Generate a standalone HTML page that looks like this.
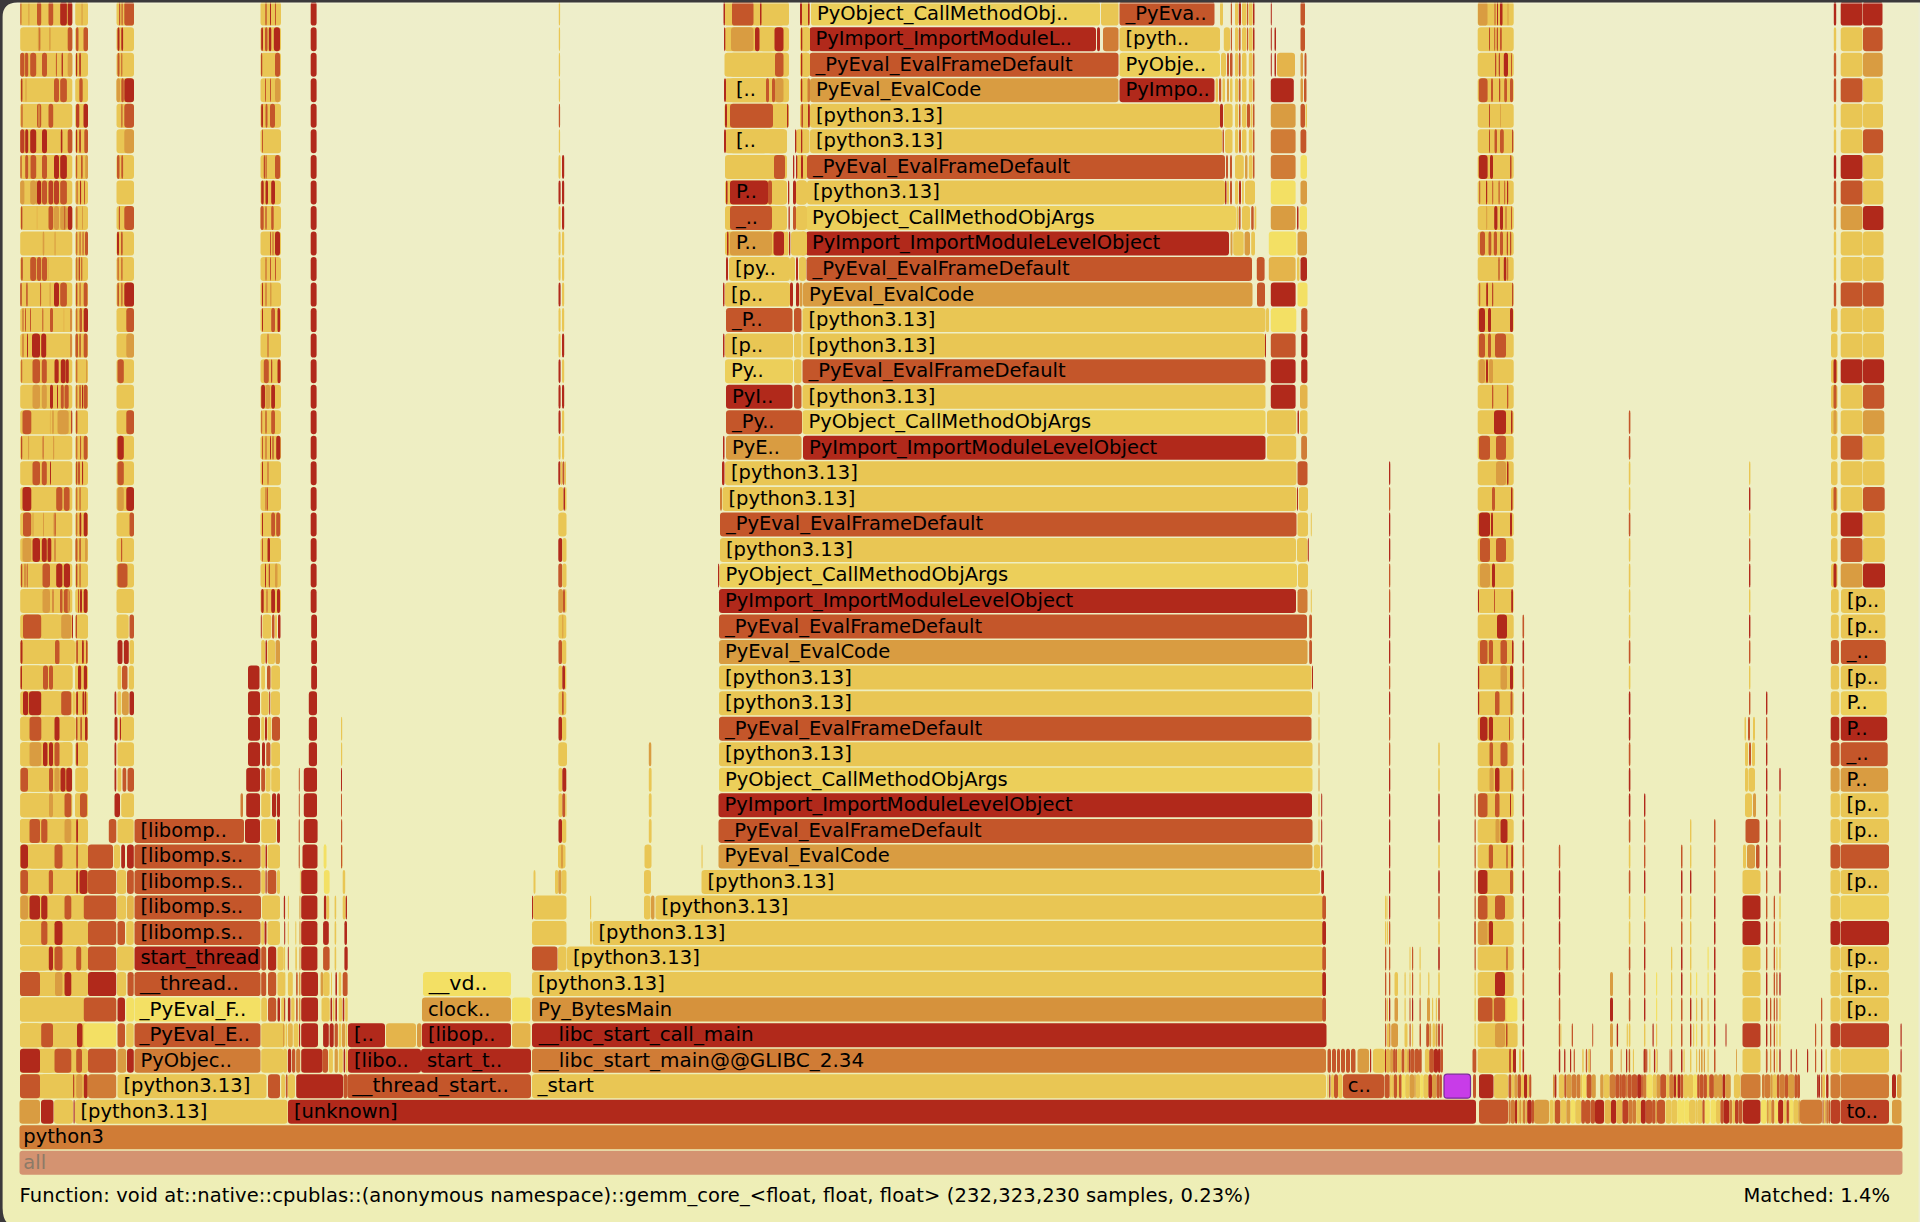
<!DOCTYPE html>
<html><head><meta charset="utf-8"><title>Flame Graph</title>
<style>
html,body{margin:0;padding:0;background:#3b393b;overflow:hidden}
svg{display:block}
text{font-family:"DejaVu Sans","Liberation Sans",sans-serif;font-size:19.5px;fill:#000}
</style></head><body>
<svg width="1920" height="1222" viewBox="0 0 1920 1222">
<defs><linearGradient id="bg" x1="0" y1="0" x2="0" y2="1"><stop offset="0" stop-color="#eeeeca"/><stop offset="1" stop-color="#eeeeb6"/></linearGradient></defs>
<rect x="0" y="0" width="1920" height="1222" fill="url(#bg)"/>

<g fill="rgb(212,147,113)">
<rect x="19.5" y="1150.8" width="1883.0" height="24.0" rx="3.2" ry="3.2"/>
</g>
<g fill="rgb(208,124,54)">
<rect x="19.5" y="1125.3" width="1883.0" height="24.0" rx="3.2" ry="3.2"/>
</g>
<g fill="rgb(177,41,27)">
<rect x="288.0" y="1099.8" width="1188.0" height="24.0" rx="3.2" ry="3.2"/>
</g>
<g fill="rgb(196,86,42)">
<rect x="343.5" y="1074.2" width="3.7" height="24.0" rx="1.8" ry="3.2"/>
<rect x="347.3" y="1074.2" width="183.7" height="24.0" rx="3.2" ry="3.2"/>
</g>
<g fill="rgb(233,198,84)">
<rect x="532.0" y="1074.2" width="794.0" height="24.0" rx="3.2" ry="3.2"/>
</g>
<g fill="rgb(196,86,42)">
<rect x="1343.0" y="1074.2" width="41.0" height="24.0" rx="3.2" ry="3.2"/>
</g>
<g fill="rgb(177,41,27)">
<rect x="348.0" y="1048.7" width="73.0" height="24.0" rx="3.2" ry="3.2"/>
<rect x="421.0" y="1048.7" width="110.0" height="24.0" rx="3.2" ry="3.2"/>
</g>
<g fill="rgb(208,124,54)">
<rect x="532.0" y="1048.7" width="794.0" height="24.0" rx="3.2" ry="3.2"/>
</g>
<g fill="rgb(177,41,27)">
<rect x="348.0" y="1023.2" width="37.0" height="24.0" rx="3.2" ry="3.2"/>
</g>
<g fill="rgb(228,180,75)">
<rect x="386.0" y="1023.2" width="30.0" height="24.0" rx="3.2" ry="3.2"/>
</g>
<g fill="rgb(217,156,65)">
<rect x="417.0" y="1023.2" width="4.5" height="24.0" rx="2.2" ry="3.2"/>
</g>
<g fill="rgb(177,41,27)">
<rect x="422.0" y="1023.2" width="89.0" height="24.0" rx="3.2" ry="3.2"/>
</g>
<g fill="rgb(228,180,75)">
<rect x="512.0" y="1023.2" width="18.5" height="24.0" rx="3.2" ry="3.2"/>
</g>
<g fill="rgb(177,41,27)">
<rect x="532.0" y="1023.2" width="794.5" height="24.0" rx="3.2" ry="3.2"/>
</g>
<g fill="rgb(217,156,65)">
<rect x="422.0" y="997.6" width="89.0" height="24.0" rx="3.2" ry="3.2"/>
</g>
<g fill="rgb(243,224,100)">
<rect x="512.0" y="997.6" width="18.5" height="24.0" rx="3.2" ry="3.2"/>
</g>
<g fill="rgb(214,146,60)">
<rect x="532.0" y="997.6" width="791.0" height="24.0" rx="3.2" ry="3.2"/>
</g>
<g fill="rgb(243,224,100)">
<rect x="423.0" y="972.1" width="88.0" height="24.0" rx="3.2" ry="3.2"/>
</g>
<g fill="rgb(233,198,84)">
<rect x="532.0" y="972.1" width="791.0" height="24.0" rx="3.2" ry="3.2"/>
</g>
<g fill="rgb(196,86,42)">
<rect x="532.0" y="946.5" width="25.5" height="24.0" rx="3.2" ry="3.2"/>
</g>
<g fill="rgb(233,198,84)">
<rect x="558.0" y="946.5" width="8.5" height="24.0" rx="3.2" ry="3.2"/>
<rect x="567.0" y="946.5" width="756.0" height="24.0" rx="3.2" ry="3.2"/>
<rect x="532.0" y="921.0" width="34.5" height="24.0" rx="3.2" ry="3.2"/>
<rect x="590.0" y="921.0" width="2.0" height="24.0" rx="1.0" ry="3.2"/>
<rect x="592.5" y="921.0" width="730.5" height="24.0" rx="3.2" ry="3.2"/>
</g>
<g fill="rgb(177,41,27)">
<rect x="532.0" y="895.5" width="1.2" height="24.0" rx="0.6" ry="3.2"/>
</g>
<g fill="rgb(233,198,84)">
<rect x="533.2" y="895.5" width="33.3" height="24.0" rx="3.2" ry="3.2"/>
<rect x="590.0" y="895.5" width="1.2" height="24.0" rx="0.6" ry="3.2"/>
<rect x="644.0" y="895.5" width="6.5" height="24.0" rx="3.2" ry="3.2"/>
</g>
<g fill="rgb(217,156,65)">
<rect x="651.0" y="895.5" width="3.5" height="24.0" rx="1.8" ry="3.2"/>
</g>
<g fill="rgb(233,198,84)">
<rect x="655.5" y="895.5" width="667.5" height="24.0" rx="3.2" ry="3.2"/>
<rect x="533.5" y="869.9" width="2.0" height="24.0" rx="1.0" ry="3.2"/>
<rect x="555.0" y="869.9" width="3.3" height="24.0" rx="1.6" ry="3.2"/>
</g>
<g fill="rgb(217,156,65)">
<rect x="558.3" y="869.9" width="3.2" height="24.0" rx="1.6" ry="3.2"/>
</g>
<g fill="rgb(233,198,84)">
<rect x="561.5" y="869.9" width="5.0" height="24.0" rx="2.5" ry="3.2"/>
<rect x="644.0" y="869.9" width="7.0" height="24.0" rx="3.2" ry="3.2"/>
<rect x="701.5" y="869.9" width="618.5" height="24.0" rx="3.2" ry="3.2"/>
</g>
<g fill="rgb(217,156,65)">
<rect x="718.5" y="844.4" width="594.0" height="24.0" rx="3.2" ry="3.2"/>
</g>
<g fill="rgb(196,86,42)">
<rect x="718.5" y="818.9" width="594.0" height="24.0" rx="3.2" ry="3.2"/>
</g>
<g fill="rgb(177,41,27)">
<rect x="718.5" y="793.3" width="593.5" height="24.0" rx="3.2" ry="3.2"/>
</g>
<g fill="rgb(236,207,90)">
<rect x="719.0" y="767.8" width="593.5" height="24.0" rx="3.2" ry="3.2"/>
</g>
<g fill="rgb(233,198,84)">
<rect x="719.0" y="742.2" width="593.5" height="24.0" rx="3.2" ry="3.2"/>
</g>
<g fill="rgb(196,86,42)">
<rect x="719.0" y="716.7" width="592.5" height="24.0" rx="3.2" ry="3.2"/>
</g>
<g fill="rgb(233,198,84)">
<rect x="719.0" y="691.2" width="593.0" height="24.0" rx="3.2" ry="3.2"/>
<rect x="719.0" y="665.6" width="592.5" height="24.0" rx="3.2" ry="3.2"/>
</g>
<g fill="rgb(217,156,65)">
<rect x="719.0" y="640.1" width="588.5" height="24.0" rx="3.2" ry="3.2"/>
</g>
<g fill="rgb(196,86,42)">
<rect x="719.0" y="614.6" width="588.0" height="24.0" rx="3.2" ry="3.2"/>
</g>
<g fill="rgb(177,41,27)">
<rect x="719.0" y="589.0" width="577.0" height="24.0" rx="3.2" ry="3.2"/>
</g>
<g fill="rgb(236,207,90)">
<rect x="719.5" y="563.5" width="577.5" height="24.0" rx="3.2" ry="3.2"/>
</g>
<g fill="rgb(233,198,84)">
<rect x="720.0" y="537.9" width="576.0" height="24.0" rx="3.2" ry="3.2"/>
</g>
<g fill="rgb(196,86,42)">
<rect x="720.0" y="512.4" width="576.5" height="24.0" rx="3.2" ry="3.2"/>
</g>
<g fill="rgb(233,198,84)">
<rect x="722.5" y="486.9" width="574.0" height="24.0" rx="3.2" ry="3.2"/>
<rect x="725.0" y="461.3" width="571.5" height="24.0" rx="3.2" ry="3.2"/>
</g>
<g fill="rgb(177,41,27)">
<rect x="803.0" y="435.8" width="462.5" height="24.0" rx="3.2" ry="3.2"/>
</g>
<g fill="rgb(236,207,90)">
<rect x="802.5" y="410.2" width="463.0" height="24.0" rx="3.2" ry="3.2"/>
</g>
<g fill="rgb(233,198,84)">
<rect x="802.5" y="384.7" width="463.0" height="24.0" rx="3.2" ry="3.2"/>
</g>
<g fill="rgb(196,86,42)">
<rect x="802.5" y="359.2" width="463.0" height="24.0" rx="3.2" ry="3.2"/>
</g>
<g fill="rgb(233,198,84)">
<rect x="802.5" y="333.6" width="462.5" height="24.0" rx="3.2" ry="3.2"/>
<rect x="802.5" y="308.1" width="463.0" height="24.0" rx="3.2" ry="3.2"/>
</g>
<g fill="rgb(217,156,65)">
<rect x="803.0" y="282.6" width="449.5" height="24.0" rx="3.2" ry="3.2"/>
</g>
<g fill="rgb(196,86,42)">
<rect x="806.5" y="257.0" width="445.5" height="24.0" rx="3.2" ry="3.2"/>
</g>
<g fill="rgb(177,41,27)">
<rect x="806.0" y="231.5" width="423.0" height="24.0" rx="3.2" ry="3.2"/>
</g>
<g fill="rgb(236,207,90)">
<rect x="806.0" y="205.9" width="430.0" height="24.0" rx="3.2" ry="3.2"/>
</g>
<g fill="rgb(233,198,84)">
<rect x="807.0" y="180.4" width="418.0" height="24.0" rx="3.2" ry="3.2"/>
</g>
<g fill="rgb(196,86,42)">
<rect x="807.0" y="154.9" width="418.0" height="24.0" rx="3.2" ry="3.2"/>
</g>
<g fill="rgb(233,198,84)">
<rect x="810.0" y="129.3" width="412.0" height="24.0" rx="3.2" ry="3.2"/>
<rect x="810.0" y="103.8" width="410.0" height="24.0" rx="3.2" ry="3.2"/>
</g>
<g fill="rgb(217,156,65)">
<rect x="810.0" y="78.3" width="308.5" height="24.0" rx="3.2" ry="3.2"/>
</g>
<g fill="rgb(196,86,42)">
<rect x="809.5" y="52.7" width="309.0" height="24.0" rx="3.2" ry="3.2"/>
</g>
<g fill="rgb(177,41,27)">
<rect x="809.5" y="27.2" width="286.5" height="24.0" rx="3.2" ry="3.2"/>
</g>
<g fill="rgb(236,207,90)">
<rect x="811.0" y="1.6" width="289.0" height="24.0" rx="3.2" ry="3.2"/>
</g>
<g fill="rgb(233,198,84)">
<rect x="1101.0" y="1.6" width="17.5" height="24.0" rx="3.2" ry="3.2"/>
</g>
<g fill="rgb(196,86,42)">
<rect x="1119.5" y="1.6" width="95.0" height="24.0" rx="3.2" ry="3.2"/>
</g>
<g fill="rgb(177,41,27)">
<rect x="1097.0" y="27.2" width="3.0" height="24.0" rx="1.5" ry="3.2"/>
</g>
<g fill="rgb(208,124,54)">
<rect x="1103.0" y="27.2" width="15.5" height="24.0" rx="3.2" ry="3.2"/>
</g>
<g fill="rgb(233,198,84)">
<rect x="1119.5" y="27.2" width="100.5" height="24.0" rx="3.2" ry="3.2"/>
</g>
<g fill="rgb(236,207,90)">
<rect x="1119.5" y="52.7" width="100.5" height="24.0" rx="3.2" ry="3.2"/>
</g>
<g fill="rgb(177,41,27)">
<rect x="1119.5" y="78.3" width="95.0" height="24.0" rx="3.2" ry="3.2"/>
</g>
<g fill="rgb(233,198,84)">
<rect x="724.5" y="103.8" width="64.5" height="24.0" rx="3.2" ry="3.2"/>
<rect x="800.0" y="103.8" width="10.0" height="24.0" rx="3.2" ry="3.2"/>
<rect x="724.5" y="78.3" width="64.5" height="24.0" rx="3.2" ry="3.2"/>
<rect x="800.0" y="78.3" width="10.0" height="24.0" rx="3.2" ry="3.2"/>
<rect x="724.5" y="52.7" width="64.5" height="24.0" rx="3.2" ry="3.2"/>
<rect x="800.0" y="52.7" width="10.0" height="24.0" rx="3.2" ry="3.2"/>
<rect x="724.5" y="27.2" width="64.5" height="24.0" rx="3.2" ry="3.2"/>
<rect x="800.0" y="27.2" width="10.0" height="24.0" rx="3.2" ry="3.2"/>
<rect x="724.5" y="1.6" width="64.5" height="24.0" rx="3.2" ry="3.2"/>
<rect x="800.0" y="1.6" width="10.0" height="24.0" rx="3.2" ry="3.2"/>
<rect x="725.0" y="231.5" width="62.0" height="24.0" rx="3.2" ry="3.2"/>
<rect x="796.0" y="231.5" width="11.0" height="24.0" rx="3.2" ry="3.2"/>
<rect x="725.0" y="205.9" width="62.0" height="24.0" rx="3.2" ry="3.2"/>
<rect x="796.0" y="205.9" width="11.0" height="24.0" rx="3.2" ry="3.2"/>
<rect x="725.0" y="180.4" width="62.0" height="24.0" rx="3.2" ry="3.2"/>
<rect x="796.0" y="180.4" width="11.0" height="24.0" rx="3.2" ry="3.2"/>
<rect x="725.0" y="154.9" width="62.0" height="24.0" rx="3.2" ry="3.2"/>
<rect x="796.0" y="154.9" width="11.0" height="24.0" rx="3.2" ry="3.2"/>
<rect x="725.0" y="129.3" width="62.0" height="24.0" rx="3.2" ry="3.2"/>
<rect x="796.0" y="129.3" width="11.0" height="24.0" rx="3.2" ry="3.2"/>
</g>
<g fill="rgb(177,41,27)">
<rect x="723.0" y="282.6" width="1.5" height="24.0" rx="0.8" ry="3.2"/>
</g>
<g fill="rgb(233,198,84)">
<rect x="725.0" y="282.6" width="65.0" height="24.0" rx="3.2" ry="3.2"/>
</g>
<g fill="rgb(177,41,27)">
<rect x="790.0" y="282.6" width="3.0" height="24.0" rx="1.5" ry="3.2"/>
<rect x="796.0" y="282.6" width="3.0" height="24.0" rx="1.5" ry="3.2"/>
</g>
<g fill="rgb(217,156,65)">
<rect x="799.5" y="282.6" width="3.0" height="24.0" rx="1.5" ry="3.2"/>
</g>
<g fill="rgb(196,86,42)">
<rect x="726.0" y="308.1" width="66.5" height="24.0" rx="3.2" ry="3.2"/>
<rect x="794.0" y="308.1" width="7.5" height="24.0" rx="3.2" ry="3.2"/>
</g>
<g fill="rgb(177,41,27)">
<rect x="723.0" y="333.6" width="1.5" height="24.0" rx="0.8" ry="3.2"/>
</g>
<g fill="rgb(233,198,84)">
<rect x="725.0" y="333.6" width="68.0" height="24.0" rx="3.2" ry="3.2"/>
<rect x="794.0" y="333.6" width="7.5" height="24.0" rx="3.2" ry="3.2"/>
</g>
<g fill="rgb(236,207,90)">
<rect x="725.0" y="359.2" width="68.0" height="24.0" rx="3.2" ry="3.2"/>
</g>
<g fill="rgb(233,198,84)">
<rect x="794.0" y="359.2" width="7.5" height="24.0" rx="3.2" ry="3.2"/>
</g>
<g fill="rgb(177,41,27)">
<rect x="726.0" y="384.7" width="66.5" height="24.0" rx="3.2" ry="3.2"/>
</g>
<g fill="rgb(196,86,42)">
<rect x="794.0" y="384.7" width="7.5" height="24.0" rx="3.2" ry="3.2"/>
<rect x="726.0" y="410.2" width="76.0" height="24.0" rx="3.2" ry="3.2"/>
</g>
<g fill="rgb(177,41,27)">
<rect x="723.0" y="435.8" width="1.5" height="24.0" rx="0.8" ry="3.2"/>
</g>
<g fill="rgb(217,156,65)">
<rect x="726.0" y="435.8" width="75.5" height="24.0" rx="3.2" ry="3.2"/>
</g>
<g fill="rgb(177,41,27)">
<rect x="722.0" y="461.3" width="2.5" height="24.0" rx="1.2" ry="3.2"/>
</g>
<g fill="rgb(208,124,54)">
<rect x="720.0" y="486.9" width="2.0" height="24.0" rx="1.0" ry="3.2"/>
</g>
<g fill="rgb(177,41,27)">
<rect x="718.0" y="563.5" width="1.2" height="24.0" rx="0.6" ry="3.2"/>
<rect x="726.0" y="257.0" width="2.0" height="24.0" rx="1.0" ry="3.2"/>
</g>
<g fill="rgb(233,198,84)">
<rect x="729.0" y="257.0" width="61.0" height="24.0" rx="3.2" ry="3.2"/>
<rect x="790.0" y="257.0" width="5.0" height="24.0" rx="2.5" ry="3.2"/>
</g>
<g fill="rgb(177,41,27)">
<rect x="796.0" y="257.0" width="2.0" height="24.0" rx="1.0" ry="3.2"/>
</g>
<g fill="rgb(233,198,84)">
<rect x="799.0" y="257.0" width="7.0" height="24.0" rx="3.2" ry="3.2"/>
</g>
<g fill="rgb(177,41,27)">
<rect x="727.0" y="231.5" width="1.5" height="24.0" rx="0.8" ry="3.2"/>
</g>
<g fill="rgb(217,156,65)">
<rect x="730.0" y="231.5" width="42.0" height="24.0" rx="3.2" ry="3.2"/>
</g>
<g fill="rgb(177,41,27)">
<rect x="773.5" y="231.5" width="10.5" height="24.0" rx="3.2" ry="3.2"/>
</g>
<g fill="rgb(233,198,84)">
<rect x="785.0" y="231.5" width="3.5" height="24.0" rx="1.8" ry="3.2"/>
</g>
<g fill="rgb(177,41,27)">
<rect x="789.0" y="231.5" width="1.3" height="24.0" rx="0.6" ry="3.2"/>
</g>
<g fill="rgb(233,198,84)">
<rect x="791.0" y="231.5" width="9.0" height="24.0" rx="3.2" ry="3.2"/>
<rect x="801.0" y="231.5" width="4.5" height="24.0" rx="2.2" ry="3.2"/>
</g>
<g fill="rgb(196,86,42)">
<rect x="730.0" y="205.9" width="42.0" height="24.0" rx="3.2" ry="3.2"/>
</g>
<g fill="rgb(233,198,84)">
<rect x="773.0" y="205.9" width="13.0" height="24.0" rx="3.2" ry="3.2"/>
</g>
<g fill="rgb(177,41,27)">
<rect x="788.5" y="205.9" width="1.3" height="24.0" rx="0.6" ry="3.2"/>
</g>
<g fill="rgb(196,86,42)">
<rect x="793.0" y="205.9" width="3.0" height="24.0" rx="1.5" ry="3.2"/>
</g>
<g fill="rgb(233,198,84)">
<rect x="797.0" y="205.9" width="8.5" height="24.0" rx="3.2" ry="3.2"/>
</g>
<g fill="rgb(177,41,27)">
<rect x="726.0" y="180.4" width="1.5" height="24.0" rx="0.8" ry="3.2"/>
<rect x="730.0" y="180.4" width="38.0" height="24.0" rx="3.2" ry="3.2"/>
</g>
<g fill="rgb(196,86,42)">
<rect x="768.0" y="180.4" width="4.0" height="24.0" rx="2.0" ry="3.2"/>
</g>
<g fill="rgb(233,198,84)">
<rect x="773.0" y="180.4" width="12.5" height="24.0" rx="3.2" ry="3.2"/>
</g>
<g fill="rgb(177,41,27)">
<rect x="788.0" y="180.4" width="1.3" height="24.0" rx="0.6" ry="3.2"/>
<rect x="793.0" y="180.4" width="3.0" height="24.0" rx="1.5" ry="3.2"/>
</g>
<g fill="rgb(233,198,84)">
<rect x="797.0" y="180.4" width="9.5" height="24.0" rx="3.2" ry="3.2"/>
<rect x="730.0" y="154.9" width="43.5" height="24.0" rx="3.2" ry="3.2"/>
</g>
<g fill="rgb(196,86,42)">
<rect x="774.0" y="154.9" width="11.0" height="24.0" rx="3.2" ry="3.2"/>
</g>
<g fill="rgb(177,41,27)">
<rect x="793.0" y="154.9" width="1.3" height="24.0" rx="0.6" ry="3.2"/>
<rect x="796.0" y="154.9" width="1.3" height="24.0" rx="0.6" ry="3.2"/>
<rect x="801.0" y="154.9" width="2.0" height="24.0" rx="1.0" ry="3.2"/>
</g>
<g fill="rgb(233,198,84)">
<rect x="803.5" y="154.9" width="3.0" height="24.0" rx="1.5" ry="3.2"/>
</g>
<g fill="rgb(177,41,27)">
<rect x="724.0" y="129.3" width="2.0" height="24.0" rx="1.0" ry="3.2"/>
</g>
<g fill="rgb(233,198,84)">
<rect x="730.0" y="129.3" width="37.0" height="24.0" rx="3.2" ry="3.2"/>
<rect x="767.5" y="129.3" width="18.0" height="24.0" rx="3.2" ry="3.2"/>
</g>
<g fill="rgb(177,41,27)">
<rect x="795.0" y="129.3" width="1.3" height="24.0" rx="0.6" ry="3.2"/>
<rect x="801.0" y="129.3" width="1.3" height="24.0" rx="0.6" ry="3.2"/>
</g>
<g fill="rgb(233,198,84)">
<rect x="803.0" y="129.3" width="6.5" height="24.0" rx="3.2" ry="3.2"/>
</g>
<g fill="rgb(177,41,27)">
<rect x="725.0" y="103.8" width="2.0" height="24.0" rx="1.0" ry="3.2"/>
</g>
<g fill="rgb(196,86,42)">
<rect x="730.0" y="103.8" width="43.0" height="24.0" rx="3.2" ry="3.2"/>
</g>
<g fill="rgb(233,198,84)">
<rect x="774.0" y="103.8" width="12.0" height="24.0" rx="3.2" ry="3.2"/>
</g>
<g fill="rgb(177,41,27)">
<rect x="787.0" y="103.8" width="1.3" height="24.0" rx="0.6" ry="3.2"/>
<rect x="801.5" y="103.8" width="1.3" height="24.0" rx="0.6" ry="3.2"/>
</g>
<g fill="rgb(233,198,84)">
<rect x="803.0" y="103.8" width="5.0" height="24.0" rx="2.5" ry="3.2"/>
</g>
<g fill="rgb(177,41,27)">
<rect x="808.0" y="103.8" width="1.8" height="24.0" rx="0.9" ry="3.2"/>
<rect x="724.0" y="78.3" width="2.0" height="24.0" rx="1.0" ry="3.2"/>
</g>
<g fill="rgb(233,198,84)">
<rect x="730.0" y="78.3" width="36.0" height="24.0" rx="3.2" ry="3.2"/>
</g>
<g fill="rgb(196,86,42)">
<rect x="766.0" y="78.3" width="3.0" height="24.0" rx="1.5" ry="3.2"/>
</g>
<g fill="rgb(233,198,84)">
<rect x="769.0" y="78.3" width="3.0" height="24.0" rx="1.5" ry="3.2"/>
</g>
<g fill="rgb(196,86,42)">
<rect x="772.0" y="78.3" width="3.0" height="24.0" rx="1.5" ry="3.2"/>
</g>
<g fill="rgb(217,156,65)">
<rect x="775.0" y="78.3" width="8.5" height="24.0" rx="3.2" ry="3.2"/>
</g>
<g fill="rgb(177,41,27)">
<rect x="801.0" y="78.3" width="1.3" height="24.0" rx="0.6" ry="3.2"/>
</g>
<g fill="rgb(233,198,84)">
<rect x="803.0" y="78.3" width="3.5" height="24.0" rx="1.8" ry="3.2"/>
</g>
<g fill="rgb(208,124,54)">
<rect x="807.5" y="78.3" width="2.5" height="24.0" rx="1.2" ry="3.2"/>
</g>
<g fill="rgb(233,198,84)">
<rect x="730.0" y="52.7" width="44.5" height="24.0" rx="3.2" ry="3.2"/>
</g>
<g fill="rgb(196,86,42)">
<rect x="775.0" y="52.7" width="8.5" height="24.0" rx="3.2" ry="3.2"/>
</g>
<g fill="rgb(177,41,27)">
<rect x="801.0" y="52.7" width="1.3" height="24.0" rx="0.6" ry="3.2"/>
</g>
<g fill="rgb(233,198,84)">
<rect x="803.0" y="52.7" width="6.0" height="24.0" rx="3.0" ry="3.2"/>
</g>
<g fill="rgb(177,41,27)">
<rect x="724.0" y="27.2" width="1.3" height="24.0" rx="0.6" ry="3.2"/>
</g>
<g fill="rgb(217,156,65)">
<rect x="731.0" y="27.2" width="22.5" height="24.0" rx="3.2" ry="3.2"/>
</g>
<g fill="rgb(177,41,27)">
<rect x="755.0" y="27.2" width="4.5" height="24.0" rx="2.2" ry="3.2"/>
</g>
<g fill="rgb(233,198,84)">
<rect x="760.0" y="27.2" width="14.0" height="24.0" rx="3.2" ry="3.2"/>
</g>
<g fill="rgb(177,41,27)">
<rect x="774.5" y="27.2" width="9.0" height="24.0" rx="3.2" ry="3.2"/>
<rect x="801.0" y="27.2" width="1.3" height="24.0" rx="0.6" ry="3.2"/>
</g>
<g fill="rgb(233,198,84)">
<rect x="803.0" y="27.2" width="6.0" height="24.0" rx="3.0" ry="3.2"/>
</g>
<g fill="rgb(177,41,27)">
<rect x="723.5" y="1.6" width="1.5" height="24.0" rx="0.8" ry="3.2"/>
</g>
<g fill="rgb(196,86,42)">
<rect x="732.0" y="1.6" width="21.5" height="24.0" rx="3.2" ry="3.2"/>
</g>
<g fill="rgb(233,198,84)">
<rect x="755.0" y="1.6" width="5.0" height="24.0" rx="2.5" ry="3.2"/>
</g>
<g fill="rgb(177,41,27)">
<rect x="760.0" y="1.6" width="1.5" height="24.0" rx="0.8" ry="3.2"/>
</g>
<g fill="rgb(233,198,84)">
<rect x="762.0" y="1.6" width="21.5" height="24.0" rx="3.2" ry="3.2"/>
</g>
<g fill="rgb(177,41,27)">
<rect x="800.0" y="1.6" width="2.0" height="24.0" rx="1.0" ry="3.2"/>
</g>
<g fill="rgb(233,198,84)">
<rect x="803.0" y="1.6" width="4.5" height="24.0" rx="2.2" ry="3.2"/>
</g>
<g fill="rgb(177,41,27)">
<rect x="808.0" y="1.6" width="1.5" height="24.0" rx="0.8" ry="3.2"/>
</g>
<g fill="rgb(233,198,84)">
<rect x="20.2" y="793.3" width="52.1" height="24.0" rx="3.2" ry="3.2"/>
<rect x="75.2" y="793.3" width="12.8" height="24.0" rx="3.2" ry="3.2"/>
<rect x="20.2" y="767.8" width="52.1" height="24.0" rx="3.2" ry="3.2"/>
<rect x="75.2" y="767.8" width="12.8" height="24.0" rx="3.2" ry="3.2"/>
<rect x="20.2" y="742.2" width="52.1" height="24.0" rx="3.2" ry="3.2"/>
<rect x="75.2" y="742.2" width="12.8" height="24.0" rx="3.2" ry="3.2"/>
<rect x="20.2" y="716.7" width="52.1" height="24.0" rx="3.2" ry="3.2"/>
<rect x="75.2" y="716.7" width="12.8" height="24.0" rx="3.2" ry="3.2"/>
<rect x="20.2" y="691.2" width="52.1" height="24.0" rx="3.2" ry="3.2"/>
<rect x="75.2" y="691.2" width="12.8" height="24.0" rx="3.2" ry="3.2"/>
<rect x="20.2" y="665.6" width="52.1" height="24.0" rx="3.2" ry="3.2"/>
<rect x="75.2" y="665.6" width="12.8" height="24.0" rx="3.2" ry="3.2"/>
<rect x="20.2" y="640.1" width="52.1" height="24.0" rx="3.2" ry="3.2"/>
<rect x="75.2" y="640.1" width="12.8" height="24.0" rx="3.2" ry="3.2"/>
<rect x="20.2" y="614.6" width="52.1" height="24.0" rx="3.2" ry="3.2"/>
<rect x="75.2" y="614.6" width="12.8" height="24.0" rx="3.2" ry="3.2"/>
<rect x="20.0" y="1074.2" width="68.0" height="24.0" rx="3.2" ry="3.2"/>
<rect x="20.0" y="1048.7" width="68.0" height="24.0" rx="3.2" ry="3.2"/>
<rect x="20.0" y="1023.2" width="68.0" height="24.0" rx="3.2" ry="3.2"/>
<rect x="20.0" y="997.6" width="68.0" height="24.0" rx="3.2" ry="3.2"/>
<rect x="20.0" y="972.1" width="68.0" height="24.0" rx="3.2" ry="3.2"/>
<rect x="20.0" y="946.5" width="68.0" height="24.0" rx="3.2" ry="3.2"/>
<rect x="20.0" y="921.0" width="68.0" height="24.0" rx="3.2" ry="3.2"/>
<rect x="20.0" y="895.5" width="68.0" height="24.0" rx="3.2" ry="3.2"/>
<rect x="20.0" y="869.9" width="68.0" height="24.0" rx="3.2" ry="3.2"/>
<rect x="20.0" y="844.4" width="68.0" height="24.0" rx="3.2" ry="3.2"/>
<rect x="20.0" y="818.9" width="68.0" height="24.0" rx="3.2" ry="3.2"/>
</g>
<g fill="rgb(217,156,65)">
<rect x="19.5" y="1099.8" width="20.5" height="24.0" rx="3.2" ry="3.2"/>
</g>
<g fill="rgb(177,41,27)">
<rect x="41.0" y="1099.8" width="12.5" height="24.0" rx="3.2" ry="3.2"/>
</g>
<g fill="rgb(233,198,84)">
<rect x="54.0" y="1099.8" width="19.0" height="24.0" rx="3.2" ry="3.2"/>
</g>
<g fill="rgb(177,41,27)">
<rect x="73.5" y="1099.8" width="1.2" height="24.0" rx="0.6" ry="3.2"/>
</g>
<g fill="rgb(233,198,84)">
<rect x="75.0" y="1099.8" width="212.5" height="24.0" rx="3.2" ry="3.2"/>
</g>
<g fill="rgb(196,86,42)">
<rect x="20.0" y="1074.2" width="20.0" height="24.0" rx="3.2" ry="3.2"/>
</g>
<g fill="rgb(233,198,84)">
<rect x="41.2" y="1074.2" width="31.2" height="24.0" rx="3.2" ry="3.2"/>
</g>
<g fill="rgb(177,41,27)">
<rect x="73.2" y="1074.2" width="1.0" height="24.0" rx="0.5" ry="3.2"/>
</g>
<g fill="rgb(217,156,65)">
<rect x="76.2" y="1074.2" width="6.2" height="24.0" rx="3.1" ry="3.2"/>
</g>
<g fill="rgb(177,41,27)">
<rect x="83.8" y="1074.2" width="3.8" height="24.0" rx="1.9" ry="3.2"/>
</g>
<g fill="rgb(208,124,54)">
<rect x="88.0" y="1074.2" width="28.2" height="24.0" rx="3.2" ry="3.2"/>
</g>
<g fill="rgb(196,86,42)">
<rect x="268.0" y="1074.2" width="12.0" height="24.0" rx="3.2" ry="3.2"/>
</g>
<g fill="rgb(233,198,84)">
<rect x="281.2" y="1074.2" width="3.8" height="24.0" rx="1.9" ry="3.2"/>
</g>
<g fill="rgb(196,86,42)">
<rect x="285.8" y="1074.2" width="1.8" height="24.0" rx="0.9" ry="3.2"/>
</g>
<g fill="rgb(233,198,84)">
<rect x="288.0" y="1074.2" width="7.0" height="24.0" rx="3.2" ry="3.2"/>
</g>
<g fill="rgb(177,41,27)">
<rect x="296.2" y="1074.2" width="46.8" height="24.0" rx="3.2" ry="3.2"/>
</g>
<g fill="rgb(233,198,84)">
<rect x="117.5" y="1074.2" width="149.0" height="24.0" rx="3.2" ry="3.2"/>
</g>
<g fill="rgb(177,41,27)">
<rect x="20.0" y="1048.7" width="20.0" height="24.0" rx="3.2" ry="3.2"/>
</g>
<g fill="rgb(233,198,84)">
<rect x="41.2" y="1048.7" width="11.8" height="24.0" rx="3.2" ry="3.2"/>
</g>
<g fill="rgb(196,86,42)">
<rect x="54.5" y="1048.7" width="16.8" height="24.0" rx="3.2" ry="3.2"/>
</g>
<g fill="rgb(233,198,84)">
<rect x="72.0" y="1048.7" width="3.0" height="24.0" rx="1.5" ry="3.2"/>
</g>
<g fill="rgb(196,86,42)">
<rect x="76.2" y="1048.7" width="5.8" height="24.0" rx="2.9" ry="3.2"/>
</g>
<g fill="rgb(233,198,84)">
<rect x="83.0" y="1048.7" width="4.5" height="24.0" rx="2.2" ry="3.2"/>
</g>
<g fill="rgb(196,86,42)">
<rect x="88.0" y="1048.7" width="28.2" height="24.0" rx="3.2" ry="3.2"/>
</g>
<g fill="rgb(217,156,65)">
<rect x="117.5" y="1048.7" width="8.8" height="24.0" rx="3.2" ry="3.2"/>
</g>
<g fill="rgb(177,41,27)">
<rect x="127.0" y="1048.7" width="6.8" height="24.0" rx="3.2" ry="3.2"/>
</g>
<g fill="rgb(233,198,84)">
<rect x="261.2" y="1048.7" width="22.5" height="24.0" rx="3.2" ry="3.2"/>
</g>
<g fill="rgb(177,41,27)">
<rect x="301.2" y="1048.7" width="21.2" height="24.0" rx="3.2" ry="3.2"/>
</g>
<g fill="rgb(208,124,54)">
<rect x="134.5" y="1048.7" width="126.0" height="24.0" rx="3.2" ry="3.2"/>
</g>
<g fill="rgb(233,198,84)">
<rect x="20.0" y="1023.2" width="20.0" height="24.0" rx="3.2" ry="3.2"/>
</g>
<g fill="rgb(196,86,42)">
<rect x="41.2" y="1023.2" width="11.8" height="24.0" rx="3.2" ry="3.2"/>
</g>
<g fill="rgb(233,198,84)">
<rect x="54.5" y="1023.2" width="20.5" height="24.0" rx="3.2" ry="3.2"/>
</g>
<g fill="rgb(177,41,27)">
<rect x="77.0" y="1023.2" width="5.5" height="24.0" rx="2.8" ry="3.2"/>
</g>
<g fill="rgb(243,224,100)">
<rect x="83.8" y="1023.2" width="32.5" height="24.0" rx="3.2" ry="3.2"/>
</g>
<g fill="rgb(196,86,42)">
<rect x="117.5" y="1023.2" width="7.5" height="24.0" rx="3.2" ry="3.2"/>
</g>
<g fill="rgb(233,198,84)">
<rect x="126.2" y="1023.2" width="7.5" height="24.0" rx="3.2" ry="3.2"/>
<rect x="261.2" y="1023.2" width="23.8" height="24.0" rx="3.2" ry="3.2"/>
</g>
<g fill="rgb(177,41,27)">
<rect x="301.2" y="1023.2" width="16.8" height="24.0" rx="3.2" ry="3.2"/>
</g>
<g fill="rgb(196,86,42)">
<rect x="134.5" y="1023.2" width="126.0" height="24.0" rx="3.2" ry="3.2"/>
</g>
<g fill="rgb(233,198,84)">
<rect x="20.0" y="997.6" width="62.5" height="24.0" rx="3.2" ry="3.2"/>
</g>
<g fill="rgb(196,86,42)">
<rect x="83.8" y="997.6" width="32.5" height="24.0" rx="3.2" ry="3.2"/>
</g>
<g fill="rgb(177,41,27)">
<rect x="117.5" y="997.6" width="7.5" height="24.0" rx="3.2" ry="3.2"/>
</g>
<g fill="rgb(243,224,100)">
<rect x="126.2" y="997.6" width="7.8" height="24.0" rx="3.2" ry="3.2"/>
</g>
<g fill="rgb(233,198,84)">
<rect x="261.2" y="997.6" width="5.8" height="24.0" rx="2.9" ry="3.2"/>
</g>
<g fill="rgb(196,86,42)">
<rect x="268.0" y="997.6" width="8.2" height="24.0" rx="3.2" ry="3.2"/>
</g>
<g fill="rgb(177,41,27)">
<rect x="277.5" y="997.6" width="2.5" height="24.0" rx="1.2" ry="3.2"/>
</g>
<g fill="rgb(233,198,84)">
<rect x="281.2" y="997.6" width="3.8" height="24.0" rx="1.9" ry="3.2"/>
</g>
<g fill="rgb(177,41,27)">
<rect x="301.2" y="997.6" width="16.8" height="24.0" rx="3.2" ry="3.2"/>
</g>
<g fill="rgb(243,224,100)">
<rect x="134.5" y="997.6" width="126.0" height="24.0" rx="3.2" ry="3.2"/>
</g>
<g fill="rgb(196,86,42)">
<rect x="20.0" y="972.1" width="20.0" height="24.0" rx="3.2" ry="3.2"/>
</g>
<g fill="rgb(233,198,84)">
<rect x="41.2" y="972.1" width="12.5" height="24.0" rx="3.2" ry="3.2"/>
</g>
<g fill="rgb(217,156,65)">
<rect x="55.0" y="972.1" width="7.5" height="24.0" rx="3.2" ry="3.2"/>
</g>
<g fill="rgb(177,41,27)">
<rect x="64.5" y="972.1" width="6.8" height="24.0" rx="3.2" ry="3.2"/>
</g>
<g fill="rgb(233,198,84)">
<rect x="72.5" y="972.1" width="13.8" height="24.0" rx="3.2" ry="3.2"/>
</g>
<g fill="rgb(177,41,27)">
<rect x="88.0" y="972.1" width="28.2" height="24.0" rx="3.2" ry="3.2"/>
</g>
<g fill="rgb(233,198,84)">
<rect x="117.0" y="972.1" width="9.2" height="24.0" rx="3.2" ry="3.2"/>
</g>
<g fill="rgb(196,86,42)">
<rect x="127.5" y="972.1" width="6.2" height="24.0" rx="3.1" ry="3.2"/>
<rect x="261.2" y="972.1" width="5.0" height="24.0" rx="2.5" ry="3.2"/>
<rect x="268.0" y="972.1" width="8.2" height="24.0" rx="3.2" ry="3.2"/>
</g>
<g fill="rgb(233,198,84)">
<rect x="277.5" y="972.1" width="7.5" height="24.0" rx="3.2" ry="3.2"/>
</g>
<g fill="rgb(177,41,27)">
<rect x="301.2" y="972.1" width="16.8" height="24.0" rx="3.2" ry="3.2"/>
</g>
<g fill="rgb(196,86,42)">
<rect x="134.5" y="972.1" width="126.0" height="24.0" rx="3.2" ry="3.2"/>
</g>
<g fill="rgb(233,198,84)">
<rect x="20.0" y="946.5" width="27.5" height="24.0" rx="3.2" ry="3.2"/>
</g>
<g fill="rgb(177,41,27)">
<rect x="48.8" y="946.5" width="4.2" height="24.0" rx="2.1" ry="3.2"/>
</g>
<g fill="rgb(196,86,42)">
<rect x="54.5" y="946.5" width="8.0" height="24.0" rx="3.2" ry="3.2"/>
</g>
<g fill="rgb(233,198,84)">
<rect x="63.8" y="946.5" width="11.2" height="24.0" rx="3.2" ry="3.2"/>
</g>
<g fill="rgb(196,86,42)">
<rect x="76.2" y="946.5" width="5.0" height="24.0" rx="2.5" ry="3.2"/>
</g>
<g fill="rgb(233,198,84)">
<rect x="82.5" y="946.5" width="5.0" height="24.0" rx="2.5" ry="3.2"/>
</g>
<g fill="rgb(196,86,42)">
<rect x="88.0" y="946.5" width="28.2" height="24.0" rx="3.2" ry="3.2"/>
</g>
<g fill="rgb(233,198,84)">
<rect x="117.0" y="946.5" width="16.8" height="24.0" rx="3.2" ry="3.2"/>
</g>
<g fill="rgb(196,86,42)">
<rect x="261.2" y="946.5" width="5.0" height="24.0" rx="2.5" ry="3.2"/>
</g>
<g fill="rgb(177,41,27)">
<rect x="268.0" y="946.5" width="8.2" height="24.0" rx="3.2" ry="3.2"/>
</g>
<g fill="rgb(233,198,84)">
<rect x="277.5" y="946.5" width="6.2" height="24.0" rx="3.1" ry="3.2"/>
</g>
<g fill="rgb(177,41,27)">
<rect x="301.2" y="946.5" width="16.2" height="24.0" rx="3.2" ry="3.2"/>
<rect x="134.5" y="946.5" width="126.0" height="24.0" rx="3.2" ry="3.2"/>
</g>
<g fill="rgb(233,198,84)">
<rect x="20.0" y="921.0" width="20.0" height="24.0" rx="3.2" ry="3.2"/>
</g>
<g fill="rgb(196,86,42)">
<rect x="41.2" y="921.0" width="6.2" height="24.0" rx="3.1" ry="3.2"/>
</g>
<g fill="rgb(233,198,84)">
<rect x="48.8" y="921.0" width="5.0" height="24.0" rx="2.5" ry="3.2"/>
</g>
<g fill="rgb(177,41,27)">
<rect x="54.5" y="921.0" width="8.0" height="24.0" rx="3.2" ry="3.2"/>
</g>
<g fill="rgb(233,198,84)">
<rect x="63.8" y="921.0" width="11.2" height="24.0" rx="3.2" ry="3.2"/>
<rect x="76.2" y="921.0" width="11.2" height="24.0" rx="3.2" ry="3.2"/>
</g>
<g fill="rgb(196,86,42)">
<rect x="88.0" y="921.0" width="28.2" height="24.0" rx="3.2" ry="3.2"/>
<rect x="117.5" y="921.0" width="7.5" height="24.0" rx="3.2" ry="3.2"/>
</g>
<g fill="rgb(233,198,84)">
<rect x="126.2" y="921.0" width="7.5" height="24.0" rx="3.2" ry="3.2"/>
<rect x="261.2" y="921.0" width="2.8" height="24.0" rx="1.4" ry="3.2"/>
</g>
<g fill="rgb(177,41,27)">
<rect x="264.5" y="921.0" width="2.0" height="24.0" rx="1.0" ry="3.2"/>
</g>
<g fill="rgb(233,198,84)">
<rect x="267.5" y="921.0" width="12.5" height="24.0" rx="3.2" ry="3.2"/>
</g>
<g fill="rgb(177,41,27)">
<rect x="301.2" y="921.0" width="16.2" height="24.0" rx="3.2" ry="3.2"/>
</g>
<g fill="rgb(196,86,42)">
<rect x="134.5" y="921.0" width="126.0" height="24.0" rx="3.2" ry="3.2"/>
</g>
<g fill="rgb(217,156,65)">
<rect x="20.5" y="895.5" width="7.5" height="24.0" rx="3.2" ry="3.2"/>
</g>
<g fill="rgb(177,41,27)">
<rect x="29.5" y="895.5" width="10.5" height="24.0" rx="3.2" ry="3.2"/>
<rect x="41.2" y="895.5" width="6.2" height="24.0" rx="3.1" ry="3.2"/>
</g>
<g fill="rgb(233,198,84)">
<rect x="48.8" y="895.5" width="15.0" height="24.0" rx="3.2" ry="3.2"/>
</g>
<g fill="rgb(196,86,42)">
<rect x="64.5" y="895.5" width="6.8" height="24.0" rx="3.2" ry="3.2"/>
</g>
<g fill="rgb(233,198,84)">
<rect x="72.0" y="895.5" width="10.5" height="24.0" rx="3.2" ry="3.2"/>
</g>
<g fill="rgb(196,86,42)">
<rect x="83.8" y="895.5" width="32.5" height="24.0" rx="3.2" ry="3.2"/>
</g>
<g fill="rgb(233,198,84)">
<rect x="117.0" y="895.5" width="9.2" height="24.0" rx="3.2" ry="3.2"/>
</g>
<g fill="rgb(228,180,75)">
<rect x="127.0" y="895.5" width="6.8" height="24.0" rx="3.2" ry="3.2"/>
</g>
<g fill="rgb(233,198,84)">
<rect x="262.0" y="895.5" width="18.0" height="24.0" rx="3.2" ry="3.2"/>
</g>
<g fill="rgb(177,41,27)">
<rect x="301.2" y="895.5" width="16.2" height="24.0" rx="3.2" ry="3.2"/>
</g>
<g fill="rgb(196,86,42)">
<rect x="134.5" y="895.5" width="126.5" height="24.0" rx="3.2" ry="3.2"/>
<rect x="20.5" y="869.9" width="7.5" height="24.0" rx="3.2" ry="3.2"/>
</g>
<g fill="rgb(233,198,84)">
<rect x="28.8" y="869.9" width="18.8" height="24.0" rx="3.2" ry="3.2"/>
</g>
<g fill="rgb(196,86,42)">
<rect x="48.8" y="869.9" width="4.2" height="24.0" rx="2.1" ry="3.2"/>
</g>
<g fill="rgb(233,198,84)">
<rect x="53.8" y="869.9" width="21.2" height="24.0" rx="3.2" ry="3.2"/>
</g>
<g fill="rgb(177,41,27)">
<rect x="76.2" y="869.9" width="1.8" height="24.0" rx="0.9" ry="3.2"/>
<rect x="79.5" y="869.9" width="8.0" height="24.0" rx="3.2" ry="3.2"/>
</g>
<g fill="rgb(196,86,42)">
<rect x="88.0" y="869.9" width="28.2" height="24.0" rx="3.2" ry="3.2"/>
</g>
<g fill="rgb(233,198,84)">
<rect x="117.0" y="869.9" width="9.2" height="24.0" rx="3.2" ry="3.2"/>
</g>
<g fill="rgb(196,86,42)">
<rect x="127.0" y="869.9" width="6.8" height="24.0" rx="3.2" ry="3.2"/>
</g>
<g fill="rgb(233,198,84)">
<rect x="261.2" y="869.9" width="3.8" height="24.0" rx="1.9" ry="3.2"/>
</g>
<g fill="rgb(177,41,27)">
<rect x="265.5" y="869.9" width="1.2" height="24.0" rx="0.6" ry="3.2"/>
</g>
<g fill="rgb(196,86,42)">
<rect x="267.5" y="869.9" width="8.8" height="24.0" rx="3.2" ry="3.2"/>
</g>
<g fill="rgb(233,198,84)">
<rect x="277.0" y="869.9" width="3.0" height="24.0" rx="1.5" ry="3.2"/>
</g>
<g fill="rgb(177,41,27)">
<rect x="301.2" y="869.9" width="16.2" height="24.0" rx="3.2" ry="3.2"/>
</g>
<g fill="rgb(196,86,42)">
<rect x="134.5" y="869.9" width="126.0" height="24.0" rx="3.2" ry="3.2"/>
</g>
<g fill="rgb(177,41,27)">
<rect x="20.5" y="844.4" width="7.5" height="24.0" rx="3.2" ry="3.2"/>
</g>
<g fill="rgb(233,198,84)">
<rect x="28.8" y="844.4" width="25.0" height="24.0" rx="3.2" ry="3.2"/>
</g>
<g fill="rgb(196,86,42)">
<rect x="54.5" y="844.4" width="8.0" height="24.0" rx="3.2" ry="3.2"/>
</g>
<g fill="rgb(233,198,84)">
<rect x="63.8" y="844.4" width="11.2" height="24.0" rx="3.2" ry="3.2"/>
</g>
<g fill="rgb(196,86,42)">
<rect x="76.2" y="844.4" width="1.8" height="24.0" rx="0.9" ry="3.2"/>
</g>
<g fill="rgb(233,198,84)">
<rect x="79.5" y="844.4" width="8.0" height="24.0" rx="3.2" ry="3.2"/>
</g>
<g fill="rgb(196,86,42)">
<rect x="88.0" y="844.4" width="25.0" height="24.0" rx="3.2" ry="3.2"/>
</g>
<g fill="rgb(233,198,84)">
<rect x="113.8" y="844.4" width="6.2" height="24.0" rx="3.1" ry="3.2"/>
</g>
<g fill="rgb(177,41,27)">
<rect x="121.2" y="844.4" width="3.8" height="24.0" rx="1.9" ry="3.2"/>
<rect x="127.0" y="844.4" width="6.8" height="24.0" rx="3.2" ry="3.2"/>
</g>
<g fill="rgb(233,198,84)">
<rect x="261.2" y="844.4" width="3.8" height="24.0" rx="1.9" ry="3.2"/>
</g>
<g fill="rgb(177,41,27)">
<rect x="265.5" y="844.4" width="1.5" height="24.0" rx="0.8" ry="3.2"/>
</g>
<g fill="rgb(233,198,84)">
<rect x="267.5" y="844.4" width="12.5" height="24.0" rx="3.2" ry="3.2"/>
</g>
<g fill="rgb(177,41,27)">
<rect x="302.5" y="844.4" width="15.0" height="24.0" rx="3.2" ry="3.2"/>
</g>
<g fill="rgb(243,224,100)">
<rect x="323.8" y="844.4" width="2.5" height="24.0" rx="1.2" ry="3.2"/>
</g>
<g fill="rgb(196,86,42)">
<rect x="134.5" y="844.4" width="126.0" height="24.0" rx="3.2" ry="3.2"/>
</g>
<g fill="rgb(233,198,84)">
<rect x="20.0" y="818.9" width="8.8" height="24.0" rx="3.2" ry="3.2"/>
</g>
<g fill="rgb(196,86,42)">
<rect x="29.5" y="818.9" width="10.5" height="24.0" rx="3.2" ry="3.2"/>
<rect x="41.2" y="818.9" width="6.2" height="24.0" rx="3.1" ry="3.2"/>
</g>
<g fill="rgb(233,198,84)">
<rect x="48.8" y="818.9" width="15.0" height="24.0" rx="3.2" ry="3.2"/>
</g>
<g fill="rgb(217,156,65)">
<rect x="64.5" y="818.9" width="6.8" height="24.0" rx="3.2" ry="3.2"/>
</g>
<g fill="rgb(233,198,84)">
<rect x="72.0" y="818.9" width="3.5" height="24.0" rx="1.8" ry="3.2"/>
</g>
<g fill="rgb(177,41,27)">
<rect x="76.2" y="818.9" width="1.8" height="24.0" rx="0.9" ry="3.2"/>
</g>
<g fill="rgb(233,198,84)">
<rect x="78.8" y="818.9" width="8.8" height="24.0" rx="3.2" ry="3.2"/>
</g>
<g fill="rgb(196,86,42)">
<rect x="108.8" y="818.9" width="7.5" height="24.0" rx="3.2" ry="3.2"/>
</g>
<g fill="rgb(233,198,84)">
<rect x="117.5" y="818.9" width="16.2" height="24.0" rx="3.2" ry="3.2"/>
</g>
<g fill="rgb(177,41,27)">
<rect x="245.0" y="818.9" width="15.0" height="24.0" rx="3.2" ry="3.2"/>
</g>
<g fill="rgb(233,198,84)">
<rect x="261.2" y="818.9" width="15.0" height="24.0" rx="3.2" ry="3.2"/>
</g>
<g fill="rgb(177,41,27)">
<rect x="277.0" y="818.9" width="3.0" height="24.0" rx="1.5" ry="3.2"/>
<rect x="303.8" y="818.9" width="13.8" height="24.0" rx="3.2" ry="3.2"/>
</g>
<g fill="rgb(196,86,42)">
<rect x="134.5" y="818.9" width="109.5" height="24.0" rx="3.2" ry="3.2"/>
</g>
<g fill="rgb(243,224,100)">
<rect x="323.8" y="844.4" width="2.5" height="24.0" rx="1.2" ry="3.2"/>
</g>
<g fill="rgb(233,198,84)">
<rect x="341.2" y="844.4" width="1.2" height="24.0" rx="0.6" ry="3.2"/>
</g>
<g fill="rgb(196,86,42)">
<rect x="23.0" y="614.6" width="18.2" height="24.0" rx="3.2" ry="3.2"/>
</g>
<g fill="rgb(233,198,84)">
<rect x="42.5" y="614.6" width="17.5" height="24.0" rx="3.2" ry="3.2"/>
</g>
<g fill="rgb(217,156,65)">
<rect x="61.2" y="614.6" width="10.0" height="24.0" rx="3.2" ry="3.2"/>
</g>
<g fill="rgb(177,41,27)">
<rect x="72.0" y="614.6" width="1.0" height="24.0" rx="0.5" ry="3.2"/>
<rect x="75.8" y="614.6" width="1.0" height="24.0" rx="0.5" ry="3.2"/>
</g>
<g fill="rgb(233,198,84)">
<rect x="78.8" y="614.6" width="8.8" height="24.0" rx="3.2" ry="3.2"/>
<rect x="116.5" y="614.6" width="12.2" height="24.0" rx="3.2" ry="3.2"/>
</g>
<g fill="rgb(196,86,42)">
<rect x="129.5" y="614.6" width="4.5" height="24.0" rx="2.2" ry="3.2"/>
</g>
<g fill="rgb(177,41,27)">
<rect x="260.8" y="614.6" width="1.0" height="24.0" rx="0.5" ry="3.2"/>
</g>
<g fill="rgb(233,198,84)">
<rect x="262.5" y="614.6" width="8.8" height="24.0" rx="3.2" ry="3.2"/>
</g>
<g fill="rgb(196,86,42)">
<rect x="272.0" y="614.6" width="2.5" height="24.0" rx="1.2" ry="3.2"/>
</g>
<g fill="rgb(233,198,84)">
<rect x="275.0" y="614.6" width="2.0" height="24.0" rx="1.0" ry="3.2"/>
</g>
<g fill="rgb(177,41,27)">
<rect x="278.0" y="614.6" width="2.5" height="24.0" rx="1.2" ry="3.2"/>
<rect x="311.2" y="614.6" width="5.8" height="24.0" rx="2.9" ry="3.2"/>
<rect x="20.5" y="640.1" width="2.0" height="24.0" rx="1.0" ry="3.2"/>
</g>
<g fill="rgb(233,198,84)">
<rect x="23.0" y="640.1" width="30.8" height="24.0" rx="3.2" ry="3.2"/>
</g>
<g fill="rgb(196,86,42)">
<rect x="55.0" y="640.1" width="4.5" height="24.0" rx="2.2" ry="3.2"/>
</g>
<g fill="rgb(233,198,84)">
<rect x="60.0" y="640.1" width="15.0" height="24.0" rx="3.2" ry="3.2"/>
</g>
<g fill="rgb(196,86,42)">
<rect x="76.2" y="640.1" width="1.8" height="24.0" rx="0.9" ry="3.2"/>
</g>
<g fill="rgb(233,198,84)">
<rect x="78.5" y="640.1" width="3.0" height="24.0" rx="1.5" ry="3.2"/>
</g>
<g fill="rgb(177,41,27)">
<rect x="82.0" y="640.1" width="1.8" height="24.0" rx="0.9" ry="3.2"/>
</g>
<g fill="rgb(233,198,84)">
<rect x="84.2" y="640.1" width="1.8" height="24.0" rx="0.9" ry="3.2"/>
</g>
<g fill="rgb(177,41,27)">
<rect x="86.2" y="640.1" width="1.2" height="24.0" rx="0.6" ry="3.2"/>
<rect x="117.5" y="640.1" width="5.0" height="24.0" rx="2.5" ry="3.2"/>
<rect x="123.8" y="640.1" width="5.0" height="24.0" rx="2.5" ry="3.2"/>
</g>
<g fill="rgb(233,198,84)">
<rect x="129.5" y="640.1" width="4.5" height="24.0" rx="2.2" ry="3.2"/>
<rect x="261.2" y="640.1" width="3.8" height="24.0" rx="1.9" ry="3.2"/>
</g>
<g fill="rgb(177,41,27)">
<rect x="265.5" y="640.1" width="1.5" height="24.0" rx="0.8" ry="3.2"/>
</g>
<g fill="rgb(233,198,84)">
<rect x="267.5" y="640.1" width="7.5" height="24.0" rx="3.2" ry="3.2"/>
</g>
<g fill="rgb(217,156,65)">
<rect x="275.5" y="640.1" width="4.5" height="24.0" rx="2.2" ry="3.2"/>
</g>
<g fill="rgb(177,41,27)">
<rect x="311.2" y="640.1" width="5.8" height="24.0" rx="2.9" ry="3.2"/>
<rect x="20.5" y="665.6" width="1.5" height="24.0" rx="0.8" ry="3.2"/>
</g>
<g fill="rgb(233,198,84)">
<rect x="22.5" y="665.6" width="18.8" height="24.0" rx="3.2" ry="3.2"/>
</g>
<g fill="rgb(196,86,42)">
<rect x="43.0" y="665.6" width="5.0" height="24.0" rx="2.5" ry="3.2"/>
<rect x="49.0" y="665.6" width="4.0" height="24.0" rx="2.0" ry="3.2"/>
</g>
<g fill="rgb(233,198,84)">
<rect x="53.8" y="665.6" width="18.8" height="24.0" rx="3.2" ry="3.2"/>
<rect x="75.0" y="665.6" width="2.5" height="24.0" rx="1.2" ry="3.2"/>
</g>
<g fill="rgb(177,41,27)">
<rect x="78.0" y="665.6" width="3.2" height="24.0" rx="1.6" ry="3.2"/>
</g>
<g fill="rgb(233,198,84)">
<rect x="81.8" y="665.6" width="1.8" height="24.0" rx="0.9" ry="3.2"/>
</g>
<g fill="rgb(177,41,27)">
<rect x="83.8" y="665.6" width="3.2" height="24.0" rx="1.6" ry="3.2"/>
</g>
<g fill="rgb(233,198,84)">
<rect x="117.5" y="665.6" width="3.8" height="24.0" rx="1.9" ry="3.2"/>
</g>
<g fill="rgb(196,86,42)">
<rect x="122.0" y="665.6" width="5.5" height="24.0" rx="2.8" ry="3.2"/>
</g>
<g fill="rgb(233,198,84)">
<rect x="128.8" y="665.6" width="5.2" height="24.0" rx="2.6" ry="3.2"/>
</g>
<g fill="rgb(177,41,27)">
<rect x="248.0" y="665.6" width="11.5" height="24.0" rx="3.2" ry="3.2"/>
</g>
<g fill="rgb(233,198,84)">
<rect x="261.2" y="665.6" width="3.8" height="24.0" rx="1.9" ry="3.2"/>
</g>
<g fill="rgb(196,86,42)">
<rect x="267.0" y="665.6" width="3.5" height="24.0" rx="1.8" ry="3.2"/>
</g>
<g fill="rgb(233,198,84)">
<rect x="271.2" y="665.6" width="8.8" height="24.0" rx="3.2" ry="3.2"/>
</g>
<g fill="rgb(177,41,27)">
<rect x="311.2" y="665.6" width="5.8" height="24.0" rx="2.9" ry="3.2"/>
<rect x="23.0" y="691.2" width="5.2" height="24.0" rx="2.6" ry="3.2"/>
<rect x="29.0" y="691.2" width="12.2" height="24.0" rx="3.2" ry="3.2"/>
</g>
<g fill="rgb(233,198,84)">
<rect x="42.5" y="691.2" width="17.5" height="24.0" rx="3.2" ry="3.2"/>
</g>
<g fill="rgb(196,86,42)">
<rect x="61.2" y="691.2" width="10.0" height="24.0" rx="3.2" ry="3.2"/>
</g>
<g fill="rgb(233,198,84)">
<rect x="72.5" y="691.2" width="2.5" height="24.0" rx="1.2" ry="3.2"/>
</g>
<g fill="rgb(177,41,27)">
<rect x="76.2" y="691.2" width="1.8" height="24.0" rx="0.9" ry="3.2"/>
</g>
<g fill="rgb(233,198,84)">
<rect x="78.5" y="691.2" width="3.5" height="24.0" rx="1.8" ry="3.2"/>
</g>
<g fill="rgb(177,41,27)">
<rect x="82.5" y="691.2" width="1.8" height="24.0" rx="0.9" ry="3.2"/>
<rect x="84.8" y="691.2" width="1.5" height="24.0" rx="0.8" ry="3.2"/>
<rect x="114.5" y="691.2" width="1.8" height="24.0" rx="0.9" ry="3.2"/>
</g>
<g fill="rgb(233,198,84)">
<rect x="117.5" y="691.2" width="3.8" height="24.0" rx="1.9" ry="3.2"/>
</g>
<g fill="rgb(217,156,65)">
<rect x="122.0" y="691.2" width="6.8" height="24.0" rx="3.2" ry="3.2"/>
</g>
<g fill="rgb(177,41,27)">
<rect x="129.5" y="691.2" width="4.5" height="24.0" rx="2.2" ry="3.2"/>
<rect x="248.0" y="691.2" width="12.0" height="24.0" rx="3.2" ry="3.2"/>
</g>
<g fill="rgb(233,198,84)">
<rect x="261.2" y="691.2" width="7.5" height="24.0" rx="3.2" ry="3.2"/>
</g>
<g fill="rgb(177,41,27)">
<rect x="269.2" y="691.2" width="1.0" height="24.0" rx="0.5" ry="3.2"/>
</g>
<g fill="rgb(233,198,84)">
<rect x="270.8" y="691.2" width="9.2" height="24.0" rx="3.2" ry="3.2"/>
</g>
<g fill="rgb(177,41,27)">
<rect x="308.8" y="691.2" width="8.2" height="24.0" rx="3.2" ry="3.2"/>
</g>
<g fill="rgb(233,198,84)">
<rect x="20.5" y="716.7" width="8.2" height="24.0" rx="3.2" ry="3.2"/>
</g>
<g fill="rgb(196,86,42)">
<rect x="29.5" y="716.7" width="11.8" height="24.0" rx="3.2" ry="3.2"/>
</g>
<g fill="rgb(233,198,84)">
<rect x="42.5" y="716.7" width="11.2" height="24.0" rx="3.2" ry="3.2"/>
</g>
<g fill="rgb(177,41,27)">
<rect x="54.5" y="716.7" width="5.0" height="24.0" rx="2.5" ry="3.2"/>
</g>
<g fill="rgb(233,198,84)">
<rect x="61.2" y="716.7" width="13.8" height="24.0" rx="3.2" ry="3.2"/>
</g>
<g fill="rgb(177,41,27)">
<rect x="76.2" y="716.7" width="1.2" height="24.0" rx="0.6" ry="3.2"/>
</g>
<g fill="rgb(233,198,84)">
<rect x="78.0" y="716.7" width="2.0" height="24.0" rx="1.0" ry="3.2"/>
</g>
<g fill="rgb(177,41,27)">
<rect x="80.5" y="716.7" width="1.2" height="24.0" rx="0.6" ry="3.2"/>
</g>
<g fill="rgb(233,198,84)">
<rect x="82.2" y="716.7" width="2.2" height="24.0" rx="1.1" ry="3.2"/>
</g>
<g fill="rgb(177,41,27)">
<rect x="85.0" y="716.7" width="2.5" height="24.0" rx="1.2" ry="3.2"/>
<rect x="114.5" y="716.7" width="3.0" height="24.0" rx="1.5" ry="3.2"/>
</g>
<g fill="rgb(233,198,84)">
<rect x="118.8" y="716.7" width="1.2" height="24.0" rx="0.6" ry="3.2"/>
</g>
<g fill="rgb(177,41,27)">
<rect x="120.0" y="716.7" width="1.0" height="24.0" rx="0.5" ry="3.2"/>
</g>
<g fill="rgb(233,198,84)">
<rect x="121.0" y="716.7" width="13.0" height="24.0" rx="3.2" ry="3.2"/>
</g>
<g fill="rgb(177,41,27)">
<rect x="248.0" y="716.7" width="12.0" height="24.0" rx="3.2" ry="3.2"/>
</g>
<g fill="rgb(233,198,84)">
<rect x="261.2" y="716.7" width="3.2" height="24.0" rx="1.6" ry="3.2"/>
</g>
<g fill="rgb(177,41,27)">
<rect x="265.0" y="716.7" width="2.0" height="24.0" rx="1.0" ry="3.2"/>
</g>
<g fill="rgb(233,198,84)">
<rect x="267.5" y="716.7" width="3.8" height="24.0" rx="1.9" ry="3.2"/>
</g>
<g fill="rgb(196,86,42)">
<rect x="272.0" y="716.7" width="8.0" height="24.0" rx="3.2" ry="3.2"/>
</g>
<g fill="rgb(177,41,27)">
<rect x="308.8" y="716.7" width="8.2" height="24.0" rx="3.2" ry="3.2"/>
</g>
<g fill="rgb(233,198,84)">
<rect x="20.5" y="742.2" width="8.2" height="24.0" rx="3.2" ry="3.2"/>
</g>
<g fill="rgb(217,156,65)">
<rect x="29.5" y="742.2" width="11.8" height="24.0" rx="3.2" ry="3.2"/>
</g>
<g fill="rgb(177,41,27)">
<rect x="43.0" y="742.2" width="4.5" height="24.0" rx="2.2" ry="3.2"/>
<rect x="49.0" y="742.2" width="4.0" height="24.0" rx="2.0" ry="3.2"/>
</g>
<g fill="rgb(196,86,42)">
<rect x="54.5" y="742.2" width="5.0" height="24.0" rx="2.5" ry="3.2"/>
</g>
<g fill="rgb(233,198,84)">
<rect x="61.2" y="742.2" width="11.2" height="24.0" rx="3.2" ry="3.2"/>
</g>
<g fill="rgb(177,41,27)">
<rect x="76.2" y="742.2" width="1.8" height="24.0" rx="0.9" ry="3.2"/>
</g>
<g fill="rgb(233,198,84)">
<rect x="78.5" y="742.2" width="9.0" height="24.0" rx="3.2" ry="3.2"/>
</g>
<g fill="rgb(177,41,27)">
<rect x="114.5" y="742.2" width="1.8" height="24.0" rx="0.9" ry="3.2"/>
</g>
<g fill="rgb(233,198,84)">
<rect x="117.5" y="742.2" width="16.5" height="24.0" rx="3.2" ry="3.2"/>
</g>
<g fill="rgb(177,41,27)">
<rect x="248.0" y="742.2" width="12.0" height="24.0" rx="3.2" ry="3.2"/>
<rect x="262.0" y="742.2" width="3.0" height="24.0" rx="1.5" ry="3.2"/>
</g>
<g fill="rgb(196,86,42)">
<rect x="266.2" y="742.2" width="4.2" height="24.0" rx="2.1" ry="3.2"/>
</g>
<g fill="rgb(233,198,84)">
<rect x="271.2" y="742.2" width="8.8" height="24.0" rx="3.2" ry="3.2"/>
</g>
<g fill="rgb(177,41,27)">
<rect x="308.8" y="742.2" width="8.2" height="24.0" rx="3.2" ry="3.2"/>
</g>
<g fill="rgb(196,86,42)">
<rect x="20.5" y="767.8" width="7.5" height="24.0" rx="3.2" ry="3.2"/>
</g>
<g fill="rgb(233,198,84)">
<rect x="29.5" y="767.8" width="18.0" height="24.0" rx="3.2" ry="3.2"/>
</g>
<g fill="rgb(196,86,42)">
<rect x="49.0" y="767.8" width="4.0" height="24.0" rx="2.0" ry="3.2"/>
</g>
<g fill="rgb(217,156,65)">
<rect x="54.5" y="767.8" width="5.0" height="24.0" rx="2.5" ry="3.2"/>
</g>
<g fill="rgb(177,41,27)">
<rect x="60.5" y="767.8" width="5.0" height="24.0" rx="2.5" ry="3.2"/>
<rect x="66.2" y="767.8" width="5.8" height="24.0" rx="2.9" ry="3.2"/>
</g>
<g fill="rgb(233,198,84)">
<rect x="76.2" y="767.8" width="11.2" height="24.0" rx="3.2" ry="3.2"/>
</g>
<g fill="rgb(177,41,27)">
<rect x="114.5" y="767.8" width="1.8" height="24.0" rx="0.9" ry="3.2"/>
</g>
<g fill="rgb(233,198,84)">
<rect x="117.5" y="767.8" width="3.8" height="24.0" rx="1.9" ry="3.2"/>
</g>
<g fill="rgb(196,86,42)">
<rect x="122.5" y="767.8" width="3.8" height="24.0" rx="1.9" ry="3.2"/>
<rect x="127.5" y="767.8" width="6.5" height="24.0" rx="3.2" ry="3.2"/>
</g>
<g fill="rgb(177,41,27)">
<rect x="246.2" y="767.8" width="13.8" height="24.0" rx="3.2" ry="3.2"/>
</g>
<g fill="rgb(196,86,42)">
<rect x="261.2" y="767.8" width="3.8" height="24.0" rx="1.9" ry="3.2"/>
</g>
<g fill="rgb(233,198,84)">
<rect x="265.5" y="767.8" width="5.0" height="24.0" rx="2.5" ry="3.2"/>
<rect x="271.2" y="767.8" width="8.8" height="24.0" rx="3.2" ry="3.2"/>
</g>
<g fill="rgb(196,86,42)">
<rect x="298.8" y="767.8" width="1.0" height="24.0" rx="0.5" ry="3.2"/>
</g>
<g fill="rgb(177,41,27)">
<rect x="303.8" y="767.8" width="13.2" height="24.0" rx="3.2" ry="3.2"/>
<rect x="341.0" y="767.8" width="1.0" height="24.0" rx="0.5" ry="3.2"/>
</g>
<g fill="rgb(233,198,84)">
<rect x="20.5" y="793.3" width="27.0" height="24.0" rx="3.2" ry="3.2"/>
</g>
<g fill="rgb(217,156,65)">
<rect x="49.0" y="793.3" width="4.0" height="24.0" rx="2.0" ry="3.2"/>
</g>
<g fill="rgb(233,198,84)">
<rect x="54.5" y="793.3" width="8.0" height="24.0" rx="3.2" ry="3.2"/>
</g>
<g fill="rgb(196,86,42)">
<rect x="64.5" y="793.3" width="6.8" height="24.0" rx="3.2" ry="3.2"/>
</g>
<g fill="rgb(233,198,84)">
<rect x="75.0" y="793.3" width="3.8" height="24.0" rx="1.9" ry="3.2"/>
</g>
<g fill="rgb(196,86,42)">
<rect x="80.0" y="793.3" width="7.0" height="24.0" rx="3.2" ry="3.2"/>
</g>
<g fill="rgb(177,41,27)">
<rect x="114.5" y="793.3" width="5.5" height="24.0" rx="2.8" ry="3.2"/>
</g>
<g fill="rgb(233,198,84)">
<rect x="121.2" y="793.3" width="12.8" height="24.0" rx="3.2" ry="3.2"/>
</g>
<g fill="rgb(208,124,54)">
<rect x="240.5" y="793.3" width="2.5" height="24.0" rx="1.2" ry="3.2"/>
</g>
<g fill="rgb(177,41,27)">
<rect x="246.2" y="793.3" width="13.8" height="24.0" rx="3.2" ry="3.2"/>
</g>
<g fill="rgb(233,198,84)">
<rect x="261.2" y="793.3" width="9.2" height="24.0" rx="3.2" ry="3.2"/>
</g>
<g fill="rgb(177,41,27)">
<rect x="272.0" y="793.3" width="4.2" height="24.0" rx="2.1" ry="3.2"/>
<rect x="277.0" y="793.3" width="3.0" height="24.0" rx="1.5" ry="3.2"/>
</g>
<g fill="rgb(196,86,42)">
<rect x="298.8" y="793.3" width="1.0" height="24.0" rx="0.5" ry="3.2"/>
</g>
<g fill="rgb(177,41,27)">
<rect x="303.8" y="793.3" width="13.2" height="24.0" rx="3.2" ry="3.2"/>
</g>
<g fill="rgb(196,86,42)">
<rect x="341.0" y="793.3" width="1.0" height="24.0" rx="0.5" ry="3.2"/>
<rect x="298.7" y="818.9" width="1.1" height="24.0" rx="0.6" ry="3.2"/>
<rect x="341.0" y="818.9" width="1.2" height="24.0" rx="0.6" ry="3.2"/>
<rect x="298.7" y="844.4" width="1.1" height="24.0" rx="0.6" ry="3.2"/>
<rect x="341.0" y="844.4" width="1.2" height="24.0" rx="0.6" ry="3.2"/>
</g>
<g fill="rgb(233,198,84)">
<rect x="341.0" y="742.2" width="1.2" height="24.0" rx="0.6" ry="3.2"/>
<rect x="341.0" y="716.7" width="1.2" height="24.0" rx="0.6" ry="3.2"/>
<rect x="20.2" y="589.0" width="52.1" height="24.0" rx="3.2" ry="3.2"/>
</g>
<g fill="rgb(217,156,65)">
<rect x="42.5" y="589.0" width="7.5" height="24.0" rx="3.2" ry="3.2"/>
</g>
<g fill="rgb(196,86,42)">
<rect x="52.5" y="589.0" width="1.0" height="24.0" rx="0.5" ry="3.2"/>
<rect x="60.0" y="589.0" width="2.5" height="24.0" rx="1.2" ry="3.2"/>
<rect x="63.8" y="589.0" width="5.8" height="24.0" rx="2.9" ry="3.2"/>
</g>
<g fill="rgb(228,180,75)">
<rect x="67.7" y="589.0" width="1.0" height="24.0" rx="0.5" ry="3.2"/>
</g>
<g fill="rgb(233,198,84)">
<rect x="75.2" y="589.0" width="12.8" height="24.0" rx="3.2" ry="3.2"/>
</g>
<g fill="rgb(196,86,42)">
<rect x="78.0" y="589.0" width="1.1" height="24.0" rx="0.5" ry="3.2"/>
</g>
<g fill="rgb(177,41,27)">
<rect x="80.0" y="589.0" width="2.0" height="24.0" rx="1.0" ry="3.2"/>
<rect x="83.7" y="589.0" width="3.8" height="24.0" rx="1.9" ry="3.2"/>
</g>
<g fill="rgb(233,198,84)">
<rect x="116.5" y="589.0" width="17.5" height="24.0" rx="3.2" ry="3.2"/>
<rect x="260.5" y="589.0" width="20.5" height="24.0" rx="3.2" ry="3.2"/>
</g>
<g fill="rgb(177,41,27)">
<rect x="261.2" y="589.0" width="2.5" height="24.0" rx="1.2" ry="3.2"/>
</g>
<g fill="rgb(196,86,42)">
<rect x="266.5" y="589.0" width="1.0" height="24.0" rx="0.5" ry="3.2"/>
</g>
<g fill="rgb(177,41,27)">
<rect x="271.2" y="589.0" width="3.8" height="24.0" rx="1.9" ry="3.2"/>
<rect x="277.0" y="589.0" width="3.0" height="24.0" rx="1.5" ry="3.2"/>
<rect x="310.7" y="589.0" width="5.9" height="24.0" rx="3.0" ry="3.2"/>
</g>
<g fill="rgb(233,198,84)">
<rect x="20.2" y="563.5" width="52.1" height="24.0" rx="3.2" ry="3.2"/>
</g>
<g fill="rgb(177,41,27)">
<rect x="21.2" y="563.5" width="1.0" height="24.0" rx="0.5" ry="3.2"/>
</g>
<g fill="rgb(196,86,42)">
<rect x="42.5" y="563.5" width="7.5" height="24.0" rx="3.2" ry="3.2"/>
</g>
<g fill="rgb(177,41,27)">
<rect x="56.2" y="563.5" width="6.2" height="24.0" rx="3.1" ry="3.2"/>
<rect x="63.8" y="563.5" width="6.2" height="24.0" rx="3.1" ry="3.2"/>
</g>
<g fill="rgb(196,86,42)">
<rect x="24.5" y="563.5" width="1.0" height="24.0" rx="0.5" ry="3.2"/>
<rect x="26.7" y="563.5" width="1.0" height="24.0" rx="0.5" ry="3.2"/>
</g>
<g fill="rgb(233,198,84)">
<rect x="75.2" y="563.5" width="12.8" height="24.0" rx="3.2" ry="3.2"/>
</g>
<g fill="rgb(177,41,27)">
<rect x="76.2" y="563.5" width="1.1" height="24.0" rx="0.5" ry="3.2"/>
</g>
<g fill="rgb(196,86,42)">
<rect x="79.5" y="563.5" width="1.1" height="24.0" rx="0.5" ry="3.2"/>
</g>
<g fill="rgb(233,198,84)">
<rect x="116.5" y="563.5" width="17.5" height="24.0" rx="3.2" ry="3.2"/>
</g>
<g fill="rgb(196,86,42)">
<rect x="117.5" y="563.5" width="10.0" height="24.0" rx="3.2" ry="3.2"/>
</g>
<g fill="rgb(233,198,84)">
<rect x="260.5" y="563.5" width="20.5" height="24.0" rx="3.2" ry="3.2"/>
</g>
<g fill="rgb(177,41,27)">
<rect x="265.0" y="563.5" width="1.0" height="24.0" rx="0.5" ry="3.2"/>
<rect x="268.8" y="563.5" width="1.0" height="24.0" rx="0.5" ry="3.2"/>
</g>
<g fill="rgb(217,156,65)">
<rect x="275.0" y="563.5" width="2.5" height="24.0" rx="1.2" ry="3.2"/>
</g>
<g fill="rgb(177,41,27)">
<rect x="310.7" y="563.5" width="5.9" height="24.0" rx="3.0" ry="3.2"/>
</g>
<g fill="rgb(233,198,84)">
<rect x="20.2" y="537.9" width="52.1" height="24.0" rx="3.2" ry="3.2"/>
</g>
<g fill="rgb(217,156,65)">
<rect x="22.5" y="537.9" width="8.8" height="24.0" rx="3.2" ry="3.2"/>
</g>
<g fill="rgb(177,41,27)">
<rect x="32.5" y="537.9" width="7.5" height="24.0" rx="3.2" ry="3.2"/>
<rect x="41.8" y="537.9" width="5.0" height="24.0" rx="2.5" ry="3.2"/>
<rect x="47.5" y="537.9" width="3.8" height="24.0" rx="1.9" ry="3.2"/>
</g>
<g fill="rgb(196,86,42)">
<rect x="54.5" y="537.9" width="1.0" height="24.0" rx="0.5" ry="3.2"/>
</g>
<g fill="rgb(233,198,84)">
<rect x="75.2" y="537.9" width="12.8" height="24.0" rx="3.2" ry="3.2"/>
</g>
<g fill="rgb(196,86,42)">
<rect x="75.5" y="537.9" width="2.0" height="24.0" rx="1.0" ry="3.2"/>
</g>
<g fill="rgb(177,41,27)">
<rect x="79.5" y="537.9" width="1.1" height="24.0" rx="0.5" ry="3.2"/>
</g>
<g fill="rgb(217,156,65)">
<rect x="85.0" y="537.9" width="2.5" height="24.0" rx="1.2" ry="3.2"/>
</g>
<g fill="rgb(233,198,84)">
<rect x="116.5" y="537.9" width="17.5" height="24.0" rx="3.2" ry="3.2"/>
</g>
<g fill="rgb(196,86,42)">
<rect x="121.0" y="537.9" width="1.2" height="24.0" rx="0.6" ry="3.2"/>
</g>
<g fill="rgb(233,198,84)">
<rect x="260.5" y="537.9" width="20.5" height="24.0" rx="3.2" ry="3.2"/>
</g>
<g fill="rgb(196,86,42)">
<rect x="262.0" y="537.9" width="1.0" height="24.0" rx="0.5" ry="3.2"/>
</g>
<g fill="rgb(177,41,27)">
<rect x="267.5" y="537.9" width="2.5" height="24.0" rx="1.2" ry="3.2"/>
<rect x="310.7" y="537.9" width="5.9" height="24.0" rx="3.0" ry="3.2"/>
</g>
<g fill="rgb(233,198,84)">
<rect x="20.2" y="512.4" width="52.1" height="24.0" rx="3.2" ry="3.2"/>
</g>
<g fill="rgb(196,86,42)">
<rect x="23.0" y="512.4" width="8.2" height="24.0" rx="3.2" ry="3.2"/>
<rect x="53.8" y="512.4" width="0.8" height="24.0" rx="0.4" ry="3.2"/>
<rect x="55.2" y="512.4" width="0.8" height="24.0" rx="0.4" ry="3.2"/>
</g>
<g fill="rgb(217,156,65)">
<rect x="32.5" y="512.4" width="1.0" height="24.0" rx="0.5" ry="3.2"/>
<rect x="43.0" y="512.4" width="1.0" height="24.0" rx="0.5" ry="3.2"/>
</g>
<g fill="rgb(233,198,84)">
<rect x="75.2" y="512.4" width="12.8" height="24.0" rx="3.2" ry="3.2"/>
</g>
<g fill="rgb(196,86,42)">
<rect x="76.2" y="512.4" width="1.1" height="24.0" rx="0.5" ry="3.2"/>
</g>
<g fill="rgb(177,41,27)">
<rect x="79.5" y="512.4" width="1.8" height="24.0" rx="0.9" ry="3.2"/>
<rect x="83.7" y="512.4" width="3.8" height="24.0" rx="1.9" ry="3.2"/>
</g>
<g fill="rgb(233,198,84)">
<rect x="116.5" y="512.4" width="17.5" height="24.0" rx="3.2" ry="3.2"/>
</g>
<g fill="rgb(196,86,42)">
<rect x="129.5" y="512.4" width="4.5" height="24.0" rx="2.2" ry="3.2"/>
</g>
<g fill="rgb(233,198,84)">
<rect x="260.5" y="512.4" width="20.5" height="24.0" rx="3.2" ry="3.2"/>
</g>
<g fill="rgb(177,41,27)">
<rect x="262.0" y="512.4" width="1.0" height="24.0" rx="0.5" ry="3.2"/>
</g>
<g fill="rgb(196,86,42)">
<rect x="271.2" y="512.4" width="3.8" height="24.0" rx="1.9" ry="3.2"/>
<rect x="276.2" y="512.4" width="3.8" height="24.0" rx="1.9" ry="3.2"/>
</g>
<g fill="rgb(177,41,27)">
<rect x="310.7" y="512.4" width="5.9" height="24.0" rx="3.0" ry="3.2"/>
</g>
<g fill="rgb(233,198,84)">
<rect x="20.2" y="486.9" width="52.1" height="24.0" rx="3.2" ry="3.2"/>
</g>
<g fill="rgb(177,41,27)">
<rect x="22.5" y="486.9" width="8.8" height="24.0" rx="3.2" ry="3.2"/>
</g>
<g fill="rgb(196,86,42)">
<rect x="56.2" y="486.9" width="6.2" height="24.0" rx="3.1" ry="3.2"/>
<rect x="63.8" y="486.9" width="5.8" height="24.0" rx="2.9" ry="3.2"/>
</g>
<g fill="rgb(233,198,84)">
<rect x="75.2" y="486.9" width="12.8" height="24.0" rx="3.2" ry="3.2"/>
</g>
<g fill="rgb(196,86,42)">
<rect x="76.2" y="486.9" width="1.1" height="24.0" rx="0.5" ry="3.2"/>
<rect x="79.5" y="486.9" width="1.1" height="24.0" rx="0.5" ry="3.2"/>
</g>
<g fill="rgb(233,198,84)">
<rect x="116.5" y="486.9" width="17.5" height="24.0" rx="3.2" ry="3.2"/>
</g>
<g fill="rgb(217,156,65)">
<rect x="117.5" y="486.9" width="6.3" height="24.0" rx="3.1" ry="3.2"/>
</g>
<g fill="rgb(177,41,27)">
<rect x="126.3" y="486.9" width="7.7" height="24.0" rx="3.2" ry="3.2"/>
</g>
<g fill="rgb(233,198,84)">
<rect x="260.5" y="486.9" width="20.5" height="24.0" rx="3.2" ry="3.2"/>
</g>
<g fill="rgb(196,86,42)">
<rect x="265.5" y="486.9" width="1.0" height="24.0" rx="0.5" ry="3.2"/>
<rect x="267.0" y="486.9" width="1.0" height="24.0" rx="0.5" ry="3.2"/>
</g>
<g fill="rgb(177,41,27)">
<rect x="310.7" y="486.9" width="5.9" height="24.0" rx="3.0" ry="3.2"/>
</g>
<g fill="rgb(233,198,84)">
<rect x="20.2" y="461.3" width="52.1" height="24.0" rx="3.2" ry="3.2"/>
</g>
<g fill="rgb(196,86,42)">
<rect x="32.5" y="461.3" width="7.5" height="24.0" rx="3.2" ry="3.2"/>
<rect x="41.8" y="461.3" width="5.0" height="24.0" rx="2.5" ry="3.2"/>
</g>
<g fill="rgb(177,41,27)">
<rect x="50.0" y="461.3" width="1.0" height="24.0" rx="0.5" ry="3.2"/>
</g>
<g fill="rgb(233,198,84)">
<rect x="75.2" y="461.3" width="12.8" height="24.0" rx="3.2" ry="3.2"/>
</g>
<g fill="rgb(177,41,27)">
<rect x="76.2" y="461.3" width="1.1" height="24.0" rx="0.5" ry="3.2"/>
</g>
<g fill="rgb(196,86,42)">
<rect x="78.0" y="461.3" width="2.0" height="24.0" rx="1.0" ry="3.2"/>
</g>
<g fill="rgb(177,41,27)">
<rect x="82.0" y="461.3" width="1.1" height="24.0" rx="0.5" ry="3.2"/>
</g>
<g fill="rgb(233,198,84)">
<rect x="116.5" y="461.3" width="17.5" height="24.0" rx="3.2" ry="3.2"/>
</g>
<g fill="rgb(196,86,42)">
<rect x="117.5" y="461.3" width="6.3" height="24.0" rx="3.1" ry="3.2"/>
</g>
<g fill="rgb(233,198,84)">
<rect x="260.5" y="461.3" width="20.5" height="24.0" rx="3.2" ry="3.2"/>
</g>
<g fill="rgb(177,41,27)">
<rect x="262.0" y="461.3" width="1.0" height="24.0" rx="0.5" ry="3.2"/>
</g>
<g fill="rgb(196,86,42)">
<rect x="267.5" y="461.3" width="1.0" height="24.0" rx="0.5" ry="3.2"/>
</g>
<g fill="rgb(177,41,27)">
<rect x="310.7" y="461.3" width="5.9" height="24.0" rx="3.0" ry="3.2"/>
</g>
<g fill="rgb(233,198,84)">
<rect x="20.2" y="435.8" width="52.1" height="24.0" rx="3.2" ry="3.2"/>
</g>
<g fill="rgb(177,41,27)">
<rect x="21.2" y="435.8" width="1.0" height="24.0" rx="0.5" ry="3.2"/>
</g>
<g fill="rgb(217,156,65)">
<rect x="53.0" y="435.8" width="1.2" height="24.0" rx="0.6" ry="3.2"/>
</g>
<g fill="rgb(196,86,42)">
<rect x="42.6" y="435.8" width="1.0" height="24.0" rx="0.5" ry="3.2"/>
</g>
<g fill="rgb(217,156,65)">
<rect x="28.1" y="435.8" width="1.0" height="24.0" rx="0.5" ry="3.2"/>
</g>
<g fill="rgb(233,198,84)">
<rect x="75.2" y="435.8" width="12.8" height="24.0" rx="3.2" ry="3.2"/>
</g>
<g fill="rgb(196,86,42)">
<rect x="76.2" y="435.8" width="1.1" height="24.0" rx="0.5" ry="3.2"/>
<rect x="80.0" y="435.8" width="1.1" height="24.0" rx="0.5" ry="3.2"/>
<rect x="83.7" y="435.8" width="3.8" height="24.0" rx="1.9" ry="3.2"/>
</g>
<g fill="rgb(233,198,84)">
<rect x="116.5" y="435.8" width="17.5" height="24.0" rx="3.2" ry="3.2"/>
</g>
<g fill="rgb(177,41,27)">
<rect x="117.5" y="435.8" width="6.3" height="24.0" rx="3.1" ry="3.2"/>
</g>
<g fill="rgb(233,198,84)">
<rect x="260.5" y="435.8" width="20.5" height="24.0" rx="3.2" ry="3.2"/>
</g>
<g fill="rgb(196,86,42)">
<rect x="262.0" y="435.8" width="1.0" height="24.0" rx="0.5" ry="3.2"/>
<rect x="265.5" y="435.8" width="1.0" height="24.0" rx="0.5" ry="3.2"/>
</g>
<g fill="rgb(177,41,27)">
<rect x="270.0" y="435.8" width="1.0" height="24.0" rx="0.5" ry="3.2"/>
<rect x="272.5" y="435.8" width="1.0" height="24.0" rx="0.5" ry="3.2"/>
<rect x="276.2" y="435.8" width="4.2" height="24.0" rx="2.1" ry="3.2"/>
<rect x="310.7" y="435.8" width="5.9" height="24.0" rx="3.0" ry="3.2"/>
</g>
<g fill="rgb(233,198,84)">
<rect x="20.2" y="410.2" width="52.1" height="24.0" rx="3.2" ry="3.2"/>
</g>
<g fill="rgb(196,86,42)">
<rect x="22.5" y="410.2" width="8.8" height="24.0" rx="3.2" ry="3.2"/>
</g>
<g fill="rgb(217,156,65)">
<rect x="52.5" y="410.2" width="1.2" height="24.0" rx="0.6" ry="3.2"/>
<rect x="57.5" y="410.2" width="11.2" height="24.0" rx="3.2" ry="3.2"/>
</g>
<g fill="rgb(177,41,27)">
<rect x="71.2" y="410.2" width="1.0" height="24.0" rx="0.5" ry="3.2"/>
</g>
<g fill="rgb(217,156,65)">
<rect x="52.3" y="410.2" width="1.0" height="24.0" rx="0.5" ry="3.2"/>
</g>
<g fill="rgb(228,180,75)">
<rect x="49.9" y="410.2" width="1.0" height="24.0" rx="0.5" ry="3.2"/>
</g>
<g fill="rgb(233,198,84)">
<rect x="75.2" y="410.2" width="12.8" height="24.0" rx="3.2" ry="3.2"/>
</g>
<g fill="rgb(177,41,27)">
<rect x="76.2" y="410.2" width="1.1" height="24.0" rx="0.5" ry="3.2"/>
</g>
<g fill="rgb(233,198,84)">
<rect x="116.5" y="410.2" width="17.5" height="24.0" rx="3.2" ry="3.2"/>
</g>
<g fill="rgb(196,86,42)">
<rect x="126.3" y="410.2" width="7.7" height="24.0" rx="3.2" ry="3.2"/>
</g>
<g fill="rgb(233,198,84)">
<rect x="260.5" y="410.2" width="20.5" height="24.0" rx="3.2" ry="3.2"/>
</g>
<g fill="rgb(196,86,42)">
<rect x="261.2" y="410.2" width="1.0" height="24.0" rx="0.5" ry="3.2"/>
</g>
<g fill="rgb(177,41,27)">
<rect x="265.5" y="410.2" width="1.0" height="24.0" rx="0.5" ry="3.2"/>
</g>
<g fill="rgb(196,86,42)">
<rect x="271.2" y="410.2" width="3.8" height="24.0" rx="1.9" ry="3.2"/>
</g>
<g fill="rgb(177,41,27)">
<rect x="310.7" y="410.2" width="5.9" height="24.0" rx="3.0" ry="3.2"/>
</g>
<g fill="rgb(233,198,84)">
<rect x="20.2" y="384.7" width="52.1" height="24.0" rx="3.2" ry="3.2"/>
</g>
<g fill="rgb(217,156,65)">
<rect x="32.5" y="384.7" width="7.5" height="24.0" rx="3.2" ry="3.2"/>
<rect x="41.8" y="384.7" width="5.0" height="24.0" rx="2.5" ry="3.2"/>
</g>
<g fill="rgb(177,41,27)">
<rect x="50.0" y="384.7" width="3.0" height="24.0" rx="1.5" ry="3.2"/>
<rect x="57.0" y="384.7" width="1.0" height="24.0" rx="0.5" ry="3.2"/>
</g>
<g fill="rgb(196,86,42)">
<rect x="60.8" y="384.7" width="3.0" height="24.0" rx="1.5" ry="3.2"/>
<rect x="64.5" y="384.7" width="4.2" height="24.0" rx="2.1" ry="3.2"/>
</g>
<g fill="rgb(233,198,84)">
<rect x="75.2" y="384.7" width="12.8" height="24.0" rx="3.2" ry="3.2"/>
</g>
<g fill="rgb(196,86,42)">
<rect x="76.2" y="384.7" width="1.1" height="24.0" rx="0.5" ry="3.2"/>
</g>
<g fill="rgb(177,41,27)">
<rect x="79.5" y="384.7" width="1.1" height="24.0" rx="0.5" ry="3.2"/>
<rect x="82.0" y="384.7" width="1.1" height="24.0" rx="0.5" ry="3.2"/>
</g>
<g fill="rgb(196,86,42)">
<rect x="83.7" y="384.7" width="3.8" height="24.0" rx="1.9" ry="3.2"/>
</g>
<g fill="rgb(233,198,84)">
<rect x="116.5" y="384.7" width="17.5" height="24.0" rx="3.2" ry="3.2"/>
<rect x="260.5" y="384.7" width="20.5" height="24.0" rx="3.2" ry="3.2"/>
</g>
<g fill="rgb(177,41,27)">
<rect x="261.2" y="384.7" width="3.8" height="24.0" rx="1.9" ry="3.2"/>
</g>
<g fill="rgb(217,156,65)">
<rect x="265.5" y="384.7" width="4.5" height="24.0" rx="2.2" ry="3.2"/>
</g>
<g fill="rgb(177,41,27)">
<rect x="271.2" y="384.7" width="3.8" height="24.0" rx="1.9" ry="3.2"/>
<rect x="310.7" y="384.7" width="5.9" height="24.0" rx="3.0" ry="3.2"/>
</g>
<g fill="rgb(233,198,84)">
<rect x="20.2" y="359.2" width="52.1" height="24.0" rx="3.2" ry="3.2"/>
</g>
<g fill="rgb(196,86,42)">
<rect x="21.2" y="359.2" width="1.0" height="24.0" rx="0.5" ry="3.2"/>
<rect x="32.5" y="359.2" width="7.5" height="24.0" rx="3.2" ry="3.2"/>
<rect x="41.8" y="359.2" width="5.0" height="24.0" rx="2.5" ry="3.2"/>
</g>
<g fill="rgb(177,41,27)">
<rect x="54.5" y="359.2" width="4.2" height="24.0" rx="2.1" ry="3.2"/>
<rect x="60.8" y="359.2" width="4.8" height="24.0" rx="2.4" ry="3.2"/>
<rect x="65.8" y="359.2" width="3.0" height="24.0" rx="1.5" ry="3.2"/>
</g>
<g fill="rgb(233,198,84)">
<rect x="75.2" y="359.2" width="12.8" height="24.0" rx="3.2" ry="3.2"/>
</g>
<g fill="rgb(196,86,42)">
<rect x="76.2" y="359.2" width="1.1" height="24.0" rx="0.5" ry="3.2"/>
</g>
<g fill="rgb(217,156,65)">
<rect x="86.0" y="359.2" width="1.2" height="24.0" rx="0.6" ry="3.2"/>
</g>
<g fill="rgb(233,198,84)">
<rect x="116.5" y="359.2" width="17.5" height="24.0" rx="3.2" ry="3.2"/>
</g>
<g fill="rgb(196,86,42)">
<rect x="117.5" y="359.2" width="6.3" height="24.0" rx="3.1" ry="3.2"/>
</g>
<g fill="rgb(233,198,84)">
<rect x="260.5" y="359.2" width="20.5" height="24.0" rx="3.2" ry="3.2"/>
</g>
<g fill="rgb(196,86,42)">
<rect x="263.8" y="359.2" width="5.0" height="24.0" rx="2.5" ry="3.2"/>
</g>
<g fill="rgb(177,41,27)">
<rect x="271.2" y="359.2" width="1.0" height="24.0" rx="0.5" ry="3.2"/>
<rect x="277.5" y="359.2" width="3.0" height="24.0" rx="1.5" ry="3.2"/>
<rect x="310.7" y="359.2" width="5.9" height="24.0" rx="3.0" ry="3.2"/>
</g>
<g fill="rgb(233,198,84)">
<rect x="20.2" y="333.6" width="52.1" height="24.0" rx="3.2" ry="3.2"/>
</g>
<g fill="rgb(196,86,42)">
<rect x="22.5" y="333.6" width="1.0" height="24.0" rx="0.5" ry="3.2"/>
</g>
<g fill="rgb(177,41,27)">
<rect x="27.0" y="333.6" width="1.0" height="24.0" rx="0.5" ry="3.2"/>
<rect x="32.0" y="333.6" width="8.0" height="24.0" rx="3.2" ry="3.2"/>
<rect x="41.2" y="333.6" width="5.0" height="24.0" rx="2.5" ry="3.2"/>
</g>
<g fill="rgb(196,86,42)">
<rect x="70.5" y="333.6" width="1.0" height="24.0" rx="0.5" ry="3.2"/>
</g>
<g fill="rgb(233,198,84)">
<rect x="75.2" y="333.6" width="12.8" height="24.0" rx="3.2" ry="3.2"/>
</g>
<g fill="rgb(196,86,42)">
<rect x="75.5" y="333.6" width="2.5" height="24.0" rx="1.2" ry="3.2"/>
</g>
<g fill="rgb(177,41,27)">
<rect x="79.5" y="333.6" width="1.1" height="24.0" rx="0.5" ry="3.2"/>
</g>
<g fill="rgb(196,86,42)">
<rect x="83.7" y="333.6" width="3.8" height="24.0" rx="1.9" ry="3.2"/>
</g>
<g fill="rgb(233,198,84)">
<rect x="116.5" y="333.6" width="17.5" height="24.0" rx="3.2" ry="3.2"/>
</g>
<g fill="rgb(217,156,65)">
<rect x="126.3" y="333.6" width="7.7" height="24.0" rx="3.2" ry="3.2"/>
</g>
<g fill="rgb(233,198,84)">
<rect x="260.5" y="333.6" width="20.5" height="24.0" rx="3.2" ry="3.2"/>
</g>
<g fill="rgb(196,86,42)">
<rect x="267.5" y="333.6" width="1.0" height="24.0" rx="0.5" ry="3.2"/>
</g>
<g fill="rgb(177,41,27)">
<rect x="310.7" y="333.6" width="5.9" height="24.0" rx="3.0" ry="3.2"/>
</g>
<g fill="rgb(233,198,84)">
<rect x="20.2" y="308.1" width="52.1" height="24.0" rx="3.2" ry="3.2"/>
</g>
<g fill="rgb(196,86,42)">
<rect x="22.5" y="308.1" width="1.0" height="24.0" rx="0.5" ry="3.2"/>
<rect x="25.0" y="308.1" width="1.0" height="24.0" rx="0.5" ry="3.2"/>
<rect x="30.0" y="308.1" width="1.0" height="24.0" rx="0.5" ry="3.2"/>
<rect x="50.0" y="308.1" width="3.0" height="24.0" rx="1.5" ry="3.2"/>
<rect x="70.5" y="308.1" width="1.0" height="24.0" rx="0.5" ry="3.2"/>
</g>
<g fill="rgb(228,180,75)">
<rect x="63.4" y="308.1" width="1.0" height="24.0" rx="0.5" ry="3.2"/>
</g>
<g fill="rgb(196,86,42)">
<rect x="42.3" y="308.1" width="1.0" height="24.0" rx="0.5" ry="3.2"/>
</g>
<g fill="rgb(233,198,84)">
<rect x="75.2" y="308.1" width="12.8" height="24.0" rx="3.2" ry="3.2"/>
</g>
<g fill="rgb(196,86,42)">
<rect x="76.2" y="308.1" width="1.1" height="24.0" rx="0.5" ry="3.2"/>
<rect x="79.5" y="308.1" width="2.5" height="24.0" rx="1.2" ry="3.2"/>
</g>
<g fill="rgb(177,41,27)">
<rect x="83.7" y="308.1" width="4.3" height="24.0" rx="2.1" ry="3.2"/>
</g>
<g fill="rgb(233,198,84)">
<rect x="116.5" y="308.1" width="17.5" height="24.0" rx="3.2" ry="3.2"/>
</g>
<g fill="rgb(196,86,42)">
<rect x="126.3" y="308.1" width="7.7" height="24.0" rx="3.2" ry="3.2"/>
</g>
<g fill="rgb(233,198,84)">
<rect x="260.5" y="308.1" width="20.5" height="24.0" rx="3.2" ry="3.2"/>
</g>
<g fill="rgb(177,41,27)">
<rect x="262.0" y="308.1" width="1.0" height="24.0" rx="0.5" ry="3.2"/>
</g>
<g fill="rgb(196,86,42)">
<rect x="271.2" y="308.1" width="3.8" height="24.0" rx="1.9" ry="3.2"/>
</g>
<g fill="rgb(177,41,27)">
<rect x="277.5" y="308.1" width="2.5" height="24.0" rx="1.2" ry="3.2"/>
<rect x="310.7" y="308.1" width="5.9" height="24.0" rx="3.0" ry="3.2"/>
</g>
<g fill="rgb(233,198,84)">
<rect x="20.2" y="282.6" width="52.1" height="24.0" rx="3.2" ry="3.2"/>
</g>
<g fill="rgb(177,41,27)">
<rect x="20.4" y="282.6" width="1.2" height="24.0" rx="0.6" ry="3.2"/>
<rect x="26.4" y="282.6" width="1.1" height="24.0" rx="0.6" ry="3.2"/>
<rect x="54.0" y="282.6" width="5.0" height="24.0" rx="2.5" ry="3.2"/>
</g>
<g fill="rgb(196,86,42)">
<rect x="60.2" y="282.6" width="6.7" height="24.0" rx="3.2" ry="3.2"/>
</g>
<g fill="rgb(217,156,65)">
<rect x="49.6" y="282.6" width="1.0" height="24.0" rx="0.5" ry="3.2"/>
</g>
<g fill="rgb(196,86,42)">
<rect x="40.1" y="282.6" width="1.0" height="24.0" rx="0.5" ry="3.2"/>
</g>
<g fill="rgb(233,198,84)">
<rect x="75.2" y="282.6" width="12.8" height="24.0" rx="3.2" ry="3.2"/>
</g>
<g fill="rgb(177,41,27)">
<rect x="76.2" y="282.6" width="1.1" height="24.0" rx="0.5" ry="3.2"/>
</g>
<g fill="rgb(196,86,42)">
<rect x="79.5" y="282.6" width="1.1" height="24.0" rx="0.5" ry="3.2"/>
<rect x="83.7" y="282.6" width="3.8" height="24.0" rx="1.9" ry="3.2"/>
</g>
<g fill="rgb(233,198,84)">
<rect x="116.5" y="282.6" width="17.5" height="24.0" rx="3.2" ry="3.2"/>
</g>
<g fill="rgb(177,41,27)">
<rect x="117.5" y="282.6" width="1.2" height="24.0" rx="0.6" ry="3.2"/>
</g>
<g fill="rgb(196,86,42)">
<rect x="121.3" y="282.6" width="1.2" height="24.0" rx="0.6" ry="3.2"/>
</g>
<g fill="rgb(177,41,27)">
<rect x="124.3" y="282.6" width="9.7" height="24.0" rx="3.2" ry="3.2"/>
</g>
<g fill="rgb(233,198,84)">
<rect x="260.5" y="282.6" width="20.5" height="24.0" rx="3.2" ry="3.2"/>
</g>
<g fill="rgb(177,41,27)">
<rect x="262.0" y="282.6" width="1.0" height="24.0" rx="0.5" ry="3.2"/>
</g>
<g fill="rgb(196,86,42)">
<rect x="265.5" y="282.6" width="1.0" height="24.0" rx="0.5" ry="3.2"/>
</g>
<g fill="rgb(217,156,65)">
<rect x="270.0" y="282.6" width="1.5" height="24.0" rx="0.8" ry="3.2"/>
</g>
<g fill="rgb(177,41,27)">
<rect x="310.7" y="282.6" width="5.9" height="24.0" rx="3.0" ry="3.2"/>
</g>
<g fill="rgb(233,198,84)">
<rect x="20.2" y="257.0" width="52.1" height="24.0" rx="3.2" ry="3.2"/>
</g>
<g fill="rgb(177,41,27)">
<rect x="21.3" y="257.0" width="1.3" height="24.0" rx="0.7" ry="3.2"/>
</g>
<g fill="rgb(196,86,42)">
<rect x="30.2" y="257.0" width="6.0" height="24.0" rx="3.0" ry="3.2"/>
<rect x="37.0" y="257.0" width="4.2" height="24.0" rx="2.1" ry="3.2"/>
<rect x="42.0" y="257.0" width="5.0" height="24.0" rx="2.5" ry="3.2"/>
<rect x="32.1" y="257.0" width="1.0" height="24.0" rx="0.5" ry="3.2"/>
</g>
<g fill="rgb(228,180,75)">
<rect x="47.7" y="257.0" width="1.0" height="24.0" rx="0.5" ry="3.2"/>
</g>
<g fill="rgb(233,198,84)">
<rect x="75.2" y="257.0" width="12.8" height="24.0" rx="3.2" ry="3.2"/>
</g>
<g fill="rgb(196,86,42)">
<rect x="76.2" y="257.0" width="1.1" height="24.0" rx="0.5" ry="3.2"/>
</g>
<g fill="rgb(177,41,27)">
<rect x="78.7" y="257.0" width="1.1" height="24.0" rx="0.5" ry="3.2"/>
</g>
<g fill="rgb(196,86,42)">
<rect x="81.2" y="257.0" width="1.1" height="24.0" rx="0.5" ry="3.2"/>
</g>
<g fill="rgb(233,198,84)">
<rect x="116.5" y="257.0" width="17.5" height="24.0" rx="3.2" ry="3.2"/>
</g>
<g fill="rgb(196,86,42)">
<rect x="117.5" y="257.0" width="1.2" height="24.0" rx="0.6" ry="3.2"/>
<rect x="121.3" y="257.0" width="1.2" height="24.0" rx="0.6" ry="3.2"/>
</g>
<g fill="rgb(233,198,84)">
<rect x="260.5" y="257.0" width="20.5" height="24.0" rx="3.2" ry="3.2"/>
</g>
<g fill="rgb(196,86,42)">
<rect x="265.5" y="257.0" width="1.0" height="24.0" rx="0.5" ry="3.2"/>
<rect x="270.0" y="257.0" width="1.0" height="24.0" rx="0.5" ry="3.2"/>
<rect x="275.0" y="257.0" width="1.0" height="24.0" rx="0.5" ry="3.2"/>
</g>
<g fill="rgb(177,41,27)">
<rect x="310.7" y="257.0" width="5.9" height="24.0" rx="3.0" ry="3.2"/>
</g>
<g fill="rgb(233,198,84)">
<rect x="20.2" y="231.5" width="52.1" height="24.0" rx="3.2" ry="3.2"/>
</g>
<g fill="rgb(217,156,65)">
<rect x="42.7" y="231.5" width="1.6" height="24.0" rx="0.8" ry="3.2"/>
<rect x="54.5" y="231.5" width="1.1" height="24.0" rx="0.6" ry="3.2"/>
</g>
<g fill="rgb(233,198,84)">
<rect x="75.2" y="231.5" width="12.8" height="24.0" rx="3.2" ry="3.2"/>
</g>
<g fill="rgb(196,86,42)">
<rect x="76.2" y="231.5" width="1.1" height="24.0" rx="0.5" ry="3.2"/>
<rect x="79.5" y="231.5" width="1.1" height="24.0" rx="0.5" ry="3.2"/>
<rect x="82.5" y="231.5" width="1.1" height="24.0" rx="0.5" ry="3.2"/>
<rect x="85.0" y="231.5" width="3.0" height="24.0" rx="1.5" ry="3.2"/>
</g>
<g fill="rgb(233,198,84)">
<rect x="116.5" y="231.5" width="17.5" height="24.0" rx="3.2" ry="3.2"/>
</g>
<g fill="rgb(177,41,27)">
<rect x="117.0" y="231.5" width="2.0" height="24.0" rx="1.0" ry="3.2"/>
<rect x="121.3" y="231.5" width="1.2" height="24.0" rx="0.6" ry="3.2"/>
</g>
<g fill="rgb(233,198,84)">
<rect x="260.5" y="231.5" width="20.5" height="24.0" rx="3.2" ry="3.2"/>
</g>
<g fill="rgb(196,86,42)">
<rect x="270.0" y="231.5" width="1.0" height="24.0" rx="0.5" ry="3.2"/>
<rect x="272.5" y="231.5" width="1.0" height="24.0" rx="0.5" ry="3.2"/>
</g>
<g fill="rgb(177,41,27)">
<rect x="275.0" y="231.5" width="5.0" height="24.0" rx="2.5" ry="3.2"/>
<rect x="310.7" y="231.5" width="5.9" height="24.0" rx="3.0" ry="3.2"/>
</g>
<g fill="rgb(233,198,84)">
<rect x="20.2" y="205.9" width="52.1" height="24.0" rx="3.2" ry="3.2"/>
</g>
<g fill="rgb(177,41,27)">
<rect x="21.2" y="205.9" width="1.1" height="24.0" rx="0.6" ry="3.2"/>
</g>
<g fill="rgb(196,86,42)">
<rect x="48.5" y="205.9" width="4.7" height="24.0" rx="2.4" ry="3.2"/>
</g>
<g fill="rgb(217,156,65)">
<rect x="54.0" y="205.9" width="5.0" height="24.0" rx="2.5" ry="3.2"/>
<rect x="60.2" y="205.9" width="6.7" height="24.0" rx="3.2" ry="3.2"/>
</g>
<g fill="rgb(177,41,27)">
<rect x="67.7" y="205.9" width="4.6" height="24.0" rx="2.3" ry="3.2"/>
</g>
<g fill="rgb(228,180,75)">
<rect x="36.6" y="205.9" width="1.0" height="24.0" rx="0.5" ry="3.2"/>
</g>
<g fill="rgb(196,86,42)">
<rect x="64.2" y="205.9" width="1.0" height="24.0" rx="0.5" ry="3.2"/>
</g>
<g fill="rgb(233,198,84)">
<rect x="75.2" y="205.9" width="12.8" height="24.0" rx="3.2" ry="3.2"/>
</g>
<g fill="rgb(196,86,42)">
<rect x="76.3" y="205.9" width="1.1" height="24.0" rx="0.6" ry="3.2"/>
</g>
<g fill="rgb(217,156,65)">
<rect x="82.0" y="205.9" width="1.0" height="24.0" rx="0.5" ry="3.2"/>
</g>
<g fill="rgb(233,198,84)">
<rect x="116.5" y="205.9" width="17.5" height="24.0" rx="3.2" ry="3.2"/>
</g>
<g fill="rgb(196,86,42)">
<rect x="118.8" y="205.9" width="1.2" height="24.0" rx="0.6" ry="3.2"/>
<rect x="124.3" y="205.9" width="9.7" height="24.0" rx="3.2" ry="3.2"/>
</g>
<g fill="rgb(233,198,84)">
<rect x="260.5" y="205.9" width="20.5" height="24.0" rx="3.2" ry="3.2"/>
</g>
<g fill="rgb(196,86,42)">
<rect x="260.5" y="205.9" width="3.2" height="24.0" rx="1.6" ry="3.2"/>
</g>
<g fill="rgb(177,41,27)">
<rect x="265.5" y="205.9" width="1.0" height="24.0" rx="0.5" ry="3.2"/>
</g>
<g fill="rgb(196,86,42)">
<rect x="271.2" y="205.9" width="2.5" height="24.0" rx="1.2" ry="3.2"/>
</g>
<g fill="rgb(177,41,27)">
<rect x="310.7" y="205.9" width="5.9" height="24.0" rx="3.0" ry="3.2"/>
</g>
<g fill="rgb(233,198,84)">
<rect x="20.2" y="180.4" width="52.1" height="24.0" rx="3.2" ry="3.2"/>
</g>
<g fill="rgb(217,156,65)">
<rect x="20.2" y="180.4" width="4.2" height="24.0" rx="2.1" ry="3.2"/>
<rect x="30.2" y="180.4" width="6.0" height="24.0" rx="3.0" ry="3.2"/>
</g>
<g fill="rgb(177,41,27)">
<rect x="37.0" y="180.4" width="4.2" height="24.0" rx="2.1" ry="3.2"/>
</g>
<g fill="rgb(196,86,42)">
<rect x="42.0" y="180.4" width="5.0" height="24.0" rx="2.5" ry="3.2"/>
</g>
<g fill="rgb(188,64,36)">
<rect x="48.5" y="180.4" width="4.7" height="24.0" rx="2.4" ry="3.2"/>
<rect x="54.0" y="180.4" width="5.0" height="24.0" rx="2.5" ry="3.2"/>
</g>
<g fill="rgb(196,86,42)">
<rect x="60.2" y="180.4" width="6.7" height="24.0" rx="3.2" ry="3.2"/>
</g>
<g fill="rgb(217,156,65)">
<rect x="36.0" y="180.4" width="1.0" height="24.0" rx="0.5" ry="3.2"/>
</g>
<g fill="rgb(233,198,84)">
<rect x="75.2" y="180.4" width="12.8" height="24.0" rx="3.2" ry="3.2"/>
</g>
<g fill="rgb(196,86,42)">
<rect x="76.5" y="180.4" width="1.1" height="24.0" rx="0.5" ry="3.2"/>
</g>
<g fill="rgb(177,41,27)">
<rect x="80.0" y="180.4" width="1.1" height="24.0" rx="0.5" ry="3.2"/>
</g>
<g fill="rgb(196,86,42)">
<rect x="84.0" y="180.4" width="1.0" height="24.0" rx="0.5" ry="3.2"/>
</g>
<g fill="rgb(233,198,84)">
<rect x="116.5" y="180.4" width="17.5" height="24.0" rx="3.2" ry="3.2"/>
<rect x="260.5" y="180.4" width="20.5" height="24.0" rx="3.2" ry="3.2"/>
</g>
<g fill="rgb(177,41,27)">
<rect x="261.2" y="180.4" width="2.5" height="24.0" rx="1.2" ry="3.2"/>
<rect x="265.5" y="180.4" width="2.5" height="24.0" rx="1.2" ry="3.2"/>
<rect x="271.2" y="180.4" width="3.8" height="24.0" rx="1.9" ry="3.2"/>
<rect x="310.7" y="180.4" width="5.9" height="24.0" rx="3.0" ry="3.2"/>
</g>
<g fill="rgb(233,198,84)">
<rect x="20.2" y="154.9" width="52.1" height="24.0" rx="3.2" ry="3.2"/>
</g>
<g fill="rgb(196,86,42)">
<rect x="20.4" y="154.9" width="1.3" height="24.0" rx="0.6" ry="3.2"/>
<rect x="25.2" y="154.9" width="3.0" height="24.0" rx="1.5" ry="3.2"/>
<rect x="30.2" y="154.9" width="6.0" height="24.0" rx="3.0" ry="3.2"/>
<rect x="42.0" y="154.9" width="5.0" height="24.0" rx="2.5" ry="3.2"/>
</g>
<g fill="rgb(177,41,27)">
<rect x="54.0" y="154.9" width="5.0" height="24.0" rx="2.5" ry="3.2"/>
<rect x="60.2" y="154.9" width="6.7" height="24.0" rx="3.2" ry="3.2"/>
</g>
<g fill="rgb(228,180,75)">
<rect x="29.5" y="154.9" width="1.0" height="24.0" rx="0.5" ry="3.2"/>
</g>
<g fill="rgb(233,198,84)">
<rect x="75.2" y="154.9" width="12.8" height="24.0" rx="3.2" ry="3.2"/>
</g>
<g fill="rgb(196,86,42)">
<rect x="76.0" y="154.9" width="1.2" height="24.0" rx="0.6" ry="3.2"/>
<rect x="81.0" y="154.9" width="1.7" height="24.0" rx="0.9" ry="3.2"/>
</g>
<g fill="rgb(217,156,65)">
<rect x="85.2" y="154.9" width="2.8" height="24.0" rx="1.4" ry="3.2"/>
</g>
<g fill="rgb(233,198,84)">
<rect x="116.5" y="154.9" width="17.5" height="24.0" rx="3.2" ry="3.2"/>
</g>
<g fill="rgb(196,86,42)">
<rect x="117.0" y="154.9" width="2.5" height="24.0" rx="1.2" ry="3.2"/>
<rect x="121.3" y="154.9" width="1.8" height="24.0" rx="0.9" ry="3.2"/>
</g>
<g fill="rgb(233,198,84)">
<rect x="260.5" y="154.9" width="20.5" height="24.0" rx="3.2" ry="3.2"/>
</g>
<g fill="rgb(177,41,27)">
<rect x="263.8" y="154.9" width="1.0" height="24.0" rx="0.5" ry="3.2"/>
</g>
<g fill="rgb(196,86,42)">
<rect x="265.5" y="154.9" width="1.2" height="24.0" rx="0.6" ry="3.2"/>
<rect x="275.0" y="154.9" width="5.0" height="24.0" rx="2.5" ry="3.2"/>
</g>
<g fill="rgb(177,41,27)">
<rect x="310.7" y="154.9" width="5.9" height="24.0" rx="3.0" ry="3.2"/>
</g>
<g fill="rgb(233,198,84)">
<rect x="20.2" y="129.3" width="52.1" height="24.0" rx="3.2" ry="3.2"/>
</g>
<g fill="rgb(188,64,36)">
<rect x="20.2" y="129.3" width="4.2" height="24.0" rx="2.1" ry="3.2"/>
</g>
<g fill="rgb(177,41,27)">
<rect x="25.2" y="129.3" width="3.0" height="24.0" rx="1.5" ry="3.2"/>
<rect x="30.2" y="129.3" width="6.0" height="24.0" rx="3.0" ry="3.2"/>
<rect x="42.0" y="129.3" width="5.0" height="24.0" rx="2.5" ry="3.2"/>
<rect x="60.8" y="129.3" width="1.6" height="24.0" rx="0.8" ry="3.2"/>
</g>
<g fill="rgb(196,86,42)">
<rect x="67.7" y="129.3" width="4.6" height="24.0" rx="2.3" ry="3.2"/>
</g>
<g fill="rgb(233,198,84)">
<rect x="75.2" y="129.3" width="12.8" height="24.0" rx="3.2" ry="3.2"/>
</g>
<g fill="rgb(177,41,27)">
<rect x="76.0" y="129.3" width="1.2" height="24.0" rx="0.6" ry="3.2"/>
<rect x="79.3" y="129.3" width="1.5" height="24.0" rx="0.8" ry="3.2"/>
</g>
<g fill="rgb(196,86,42)">
<rect x="84.3" y="129.3" width="3.7" height="24.0" rx="1.9" ry="3.2"/>
</g>
<g fill="rgb(233,198,84)">
<rect x="116.5" y="129.3" width="17.5" height="24.0" rx="3.2" ry="3.2"/>
</g>
<g fill="rgb(217,156,65)">
<rect x="124.3" y="129.3" width="9.7" height="24.0" rx="3.2" ry="3.2"/>
</g>
<g fill="rgb(233,198,84)">
<rect x="260.5" y="129.3" width="20.5" height="24.0" rx="3.2" ry="3.2"/>
</g>
<g fill="rgb(196,86,42)">
<rect x="262.0" y="129.3" width="1.0" height="24.0" rx="0.5" ry="3.2"/>
</g>
<g fill="rgb(177,41,27)">
<rect x="310.7" y="129.3" width="5.9" height="24.0" rx="3.0" ry="3.2"/>
</g>
<g fill="rgb(233,198,84)">
<rect x="20.2" y="103.8" width="52.1" height="24.0" rx="3.2" ry="3.2"/>
</g>
<g fill="rgb(196,86,42)">
<rect x="21.3" y="103.8" width="1.3" height="24.0" rx="0.7" ry="3.2"/>
<rect x="37.0" y="103.8" width="4.2" height="24.0" rx="2.1" ry="3.2"/>
<rect x="48.5" y="103.8" width="4.7" height="24.0" rx="2.4" ry="3.2"/>
</g>
<g fill="rgb(228,180,75)">
<rect x="38.5" y="103.8" width="1.0" height="24.0" rx="0.5" ry="3.2"/>
</g>
<g fill="rgb(233,198,84)">
<rect x="75.2" y="103.8" width="12.8" height="24.0" rx="3.2" ry="3.2"/>
</g>
<g fill="rgb(188,64,36)">
<rect x="76.0" y="103.8" width="3.3" height="24.0" rx="1.6" ry="3.2"/>
</g>
<g fill="rgb(177,41,27)">
<rect x="83.5" y="103.8" width="4.5" height="24.0" rx="2.2" ry="3.2"/>
</g>
<g fill="rgb(233,198,84)">
<rect x="116.5" y="103.8" width="17.5" height="24.0" rx="3.2" ry="3.2"/>
</g>
<g fill="rgb(196,86,42)">
<rect x="121.3" y="103.8" width="1.2" height="24.0" rx="0.6" ry="3.2"/>
<rect x="124.3" y="103.8" width="9.7" height="24.0" rx="3.2" ry="3.2"/>
</g>
<g fill="rgb(233,198,84)">
<rect x="260.5" y="103.8" width="20.5" height="24.0" rx="3.2" ry="3.2"/>
</g>
<g fill="rgb(177,41,27)">
<rect x="261.2" y="103.8" width="1.8" height="24.0" rx="0.9" ry="3.2"/>
</g>
<g fill="rgb(196,86,42)">
<rect x="265.5" y="103.8" width="2.0" height="24.0" rx="1.0" ry="3.2"/>
<rect x="270.0" y="103.8" width="5.0" height="24.0" rx="2.5" ry="3.2"/>
</g>
<g fill="rgb(177,41,27)">
<rect x="310.7" y="103.8" width="5.9" height="24.0" rx="3.0" ry="3.2"/>
</g>
<g fill="rgb(233,198,84)">
<rect x="20.2" y="78.3" width="52.1" height="24.0" rx="3.2" ry="3.2"/>
</g>
<g fill="rgb(177,41,27)">
<rect x="21.1" y="78.3" width="1.3" height="24.0" rx="0.7" ry="3.2"/>
</g>
<g fill="rgb(196,86,42)">
<rect x="54.0" y="78.3" width="5.0" height="24.0" rx="2.5" ry="3.2"/>
<rect x="60.2" y="78.3" width="6.7" height="24.0" rx="3.2" ry="3.2"/>
</g>
<g fill="rgb(217,156,65)">
<rect x="25.5" y="78.3" width="1.0" height="24.0" rx="0.5" ry="3.2"/>
</g>
<g fill="rgb(233,198,84)">
<rect x="75.2" y="78.3" width="12.8" height="24.0" rx="3.2" ry="3.2"/>
</g>
<g fill="rgb(196,86,42)">
<rect x="79.3" y="78.3" width="3.4" height="24.0" rx="1.7" ry="3.2"/>
</g>
<g fill="rgb(233,198,84)">
<rect x="116.5" y="78.3" width="17.5" height="24.0" rx="3.2" ry="3.2"/>
</g>
<g fill="rgb(217,156,65)">
<rect x="116.5" y="78.3" width="3.5" height="24.0" rx="1.8" ry="3.2"/>
</g>
<g fill="rgb(196,86,42)">
<rect x="121.3" y="78.3" width="2.5" height="24.0" rx="1.2" ry="3.2"/>
</g>
<g fill="rgb(177,41,27)">
<rect x="124.3" y="78.3" width="9.7" height="24.0" rx="3.2" ry="3.2"/>
</g>
<g fill="rgb(233,198,84)">
<rect x="260.5" y="78.3" width="20.5" height="24.0" rx="3.2" ry="3.2"/>
</g>
<g fill="rgb(196,86,42)">
<rect x="265.0" y="78.3" width="1.0" height="24.0" rx="0.5" ry="3.2"/>
<rect x="270.0" y="78.3" width="1.0" height="24.0" rx="0.5" ry="3.2"/>
</g>
<g fill="rgb(217,156,65)">
<rect x="275.0" y="78.3" width="5.0" height="24.0" rx="2.5" ry="3.2"/>
</g>
<g fill="rgb(177,41,27)">
<rect x="310.7" y="78.3" width="5.9" height="24.0" rx="3.0" ry="3.2"/>
</g>
<g fill="rgb(233,198,84)">
<rect x="20.2" y="52.7" width="52.1" height="24.0" rx="3.2" ry="3.2"/>
</g>
<g fill="rgb(196,86,42)">
<rect x="20.2" y="52.7" width="4.2" height="24.0" rx="2.1" ry="3.2"/>
<rect x="25.2" y="52.7" width="3.0" height="24.0" rx="1.5" ry="3.2"/>
<rect x="30.2" y="52.7" width="6.0" height="24.0" rx="3.0" ry="3.2"/>
<rect x="42.0" y="52.7" width="5.0" height="24.0" rx="2.5" ry="3.2"/>
</g>
<g fill="rgb(177,41,27)">
<rect x="61.6" y="52.7" width="1.3" height="24.0" rx="0.6" ry="3.2"/>
</g>
<g fill="rgb(217,156,65)">
<rect x="67.7" y="52.7" width="4.6" height="24.0" rx="2.3" ry="3.2"/>
</g>
<g fill="rgb(196,86,42)">
<rect x="25.3" y="52.7" width="1.0" height="24.0" rx="0.5" ry="3.2"/>
<rect x="55.9" y="52.7" width="1.0" height="24.0" rx="0.5" ry="3.2"/>
</g>
<g fill="rgb(233,198,84)">
<rect x="75.2" y="52.7" width="12.8" height="24.0" rx="3.2" ry="3.2"/>
</g>
<g fill="rgb(177,41,27)">
<rect x="76.0" y="52.7" width="1.2" height="24.0" rx="0.6" ry="3.2"/>
<rect x="79.3" y="52.7" width="1.5" height="24.0" rx="0.8" ry="3.2"/>
</g>
<g fill="rgb(233,198,84)">
<rect x="116.5" y="52.7" width="17.5" height="24.0" rx="3.2" ry="3.2"/>
</g>
<g fill="rgb(196,86,42)">
<rect x="117.5" y="52.7" width="2.0" height="24.0" rx="1.0" ry="3.2"/>
<rect x="121.3" y="52.7" width="1.0" height="24.0" rx="0.5" ry="3.2"/>
</g>
<g fill="rgb(233,198,84)">
<rect x="260.5" y="52.7" width="20.5" height="24.0" rx="3.2" ry="3.2"/>
</g>
<g fill="rgb(177,41,27)">
<rect x="261.2" y="52.7" width="1.0" height="24.0" rx="0.5" ry="3.2"/>
</g>
<g fill="rgb(196,86,42)">
<rect x="275.0" y="52.7" width="5.0" height="24.0" rx="2.5" ry="3.2"/>
</g>
<g fill="rgb(177,41,27)">
<rect x="310.7" y="52.7" width="5.9" height="24.0" rx="3.0" ry="3.2"/>
</g>
<g fill="rgb(233,198,84)">
<rect x="20.2" y="27.2" width="52.1" height="24.0" rx="3.2" ry="3.2"/>
</g>
<g fill="rgb(217,156,65)">
<rect x="37.9" y="27.2" width="1.4" height="24.0" rx="0.7" ry="3.2"/>
<rect x="49.2" y="27.2" width="1.4" height="24.0" rx="0.7" ry="3.2"/>
</g>
<g fill="rgb(196,86,42)">
<rect x="67.7" y="27.2" width="4.6" height="24.0" rx="2.3" ry="3.2"/>
</g>
<g fill="rgb(228,180,75)">
<rect x="38.9" y="27.2" width="1.0" height="24.0" rx="0.5" ry="3.2"/>
</g>
<g fill="rgb(196,86,42)">
<rect x="39.3" y="27.2" width="1.0" height="24.0" rx="0.5" ry="3.2"/>
</g>
<g fill="rgb(233,198,84)">
<rect x="75.2" y="27.2" width="12.8" height="24.0" rx="3.2" ry="3.2"/>
</g>
<g fill="rgb(196,86,42)">
<rect x="76.0" y="27.2" width="2.5" height="24.0" rx="1.2" ry="3.2"/>
<rect x="83.5" y="27.2" width="4.5" height="24.0" rx="2.2" ry="3.2"/>
</g>
<g fill="rgb(233,198,84)">
<rect x="116.5" y="27.2" width="17.5" height="24.0" rx="3.2" ry="3.2"/>
</g>
<g fill="rgb(177,41,27)">
<rect x="117.5" y="27.2" width="2.0" height="24.0" rx="1.0" ry="3.2"/>
<rect x="121.3" y="27.2" width="1.8" height="24.0" rx="0.9" ry="3.2"/>
</g>
<g fill="rgb(233,198,84)">
<rect x="260.5" y="27.2" width="20.5" height="24.0" rx="3.2" ry="3.2"/>
</g>
<g fill="rgb(177,41,27)">
<rect x="261.2" y="27.2" width="1.8" height="24.0" rx="0.9" ry="3.2"/>
</g>
<g fill="rgb(196,86,42)">
<rect x="265.0" y="27.2" width="2.5" height="24.0" rx="1.2" ry="3.2"/>
</g>
<g fill="rgb(177,41,27)">
<rect x="268.8" y="27.2" width="2.5" height="24.0" rx="1.2" ry="3.2"/>
<rect x="273.8" y="27.2" width="6.2" height="24.0" rx="3.1" ry="3.2"/>
<rect x="310.7" y="27.2" width="5.9" height="24.0" rx="3.0" ry="3.2"/>
</g>
<g fill="rgb(233,198,84)">
<rect x="20.2" y="1.6" width="52.1" height="24.0" rx="3.2" ry="3.2"/>
</g>
<g fill="rgb(196,86,42)">
<rect x="20.4" y="1.6" width="1.0" height="24.0" rx="0.5" ry="3.2"/>
<rect x="37.0" y="1.6" width="4.2" height="24.0" rx="2.1" ry="3.2"/>
<rect x="48.5" y="1.6" width="4.7" height="24.0" rx="2.4" ry="3.2"/>
</g>
<g fill="rgb(177,41,27)">
<rect x="60.2" y="1.6" width="6.7" height="24.0" rx="3.2" ry="3.2"/>
<rect x="67.7" y="1.6" width="4.6" height="24.0" rx="2.3" ry="3.2"/>
</g>
<g fill="rgb(217,156,65)">
<rect x="28.4" y="1.6" width="1.0" height="24.0" rx="0.5" ry="3.2"/>
</g>
<g fill="rgb(233,198,84)">
<rect x="75.2" y="1.6" width="12.8" height="24.0" rx="3.2" ry="3.2"/>
</g>
<g fill="rgb(217,156,65)">
<rect x="81.5" y="1.6" width="1.1" height="24.0" rx="0.5" ry="3.2"/>
</g>
<g fill="rgb(233,198,84)">
<rect x="116.5" y="1.6" width="17.5" height="24.0" rx="3.2" ry="3.2"/>
</g>
<g fill="rgb(196,86,42)">
<rect x="119.0" y="1.6" width="1.2" height="24.0" rx="0.6" ry="3.2"/>
<rect x="121.5" y="1.6" width="1.2" height="24.0" rx="0.6" ry="3.2"/>
<rect x="124.3" y="1.6" width="9.7" height="24.0" rx="3.2" ry="3.2"/>
</g>
<g fill="rgb(233,198,84)">
<rect x="260.5" y="1.6" width="20.5" height="24.0" rx="3.2" ry="3.2"/>
</g>
<g fill="rgb(177,41,27)">
<rect x="265.5" y="1.6" width="1.0" height="24.0" rx="0.5" ry="3.2"/>
<rect x="270.0" y="1.6" width="1.0" height="24.0" rx="0.5" ry="3.2"/>
</g>
<g fill="rgb(196,86,42)">
<rect x="275.0" y="1.6" width="1.0" height="24.0" rx="0.5" ry="3.2"/>
</g>
<g fill="rgb(177,41,27)">
<rect x="310.7" y="1.6" width="5.9" height="24.0" rx="3.0" ry="3.2"/>
</g>
<g fill="rgb(233,198,84)">
<rect x="1220.0" y="1.6" width="3.0" height="24.0" rx="1.5" ry="3.2"/>
</g>
<g fill="rgb(196,86,42)">
<rect x="1230.8" y="1.6" width="1.2" height="24.0" rx="0.6" ry="3.2"/>
</g>
<g fill="rgb(233,198,84)">
<rect x="1235.0" y="1.6" width="3.2" height="24.0" rx="1.6" ry="3.2"/>
</g>
<g fill="rgb(177,41,27)">
<rect x="1238.8" y="1.6" width="2.2" height="24.0" rx="1.1" ry="3.2"/>
</g>
<g fill="rgb(233,198,84)">
<rect x="1242.0" y="1.6" width="4.5" height="24.0" rx="2.2" ry="3.2"/>
</g>
<g fill="rgb(196,86,42)">
<rect x="1247.0" y="1.6" width="1.2" height="24.0" rx="0.6" ry="3.2"/>
</g>
<g fill="rgb(233,198,84)">
<rect x="1248.8" y="1.6" width="3.8" height="24.0" rx="1.9" ry="3.2"/>
</g>
<g fill="rgb(177,41,27)">
<rect x="1253.0" y="1.6" width="1.5" height="24.0" rx="0.8" ry="3.2"/>
<rect x="1270.8" y="1.6" width="1.0" height="24.0" rx="0.5" ry="3.2"/>
</g>
<g fill="rgb(196,86,42)">
<rect x="1300.5" y="1.6" width="4.5" height="24.0" rx="2.2" ry="3.2"/>
</g>
<g fill="rgb(233,198,84)">
<rect x="1223.8" y="27.2" width="6.2" height="24.0" rx="3.1" ry="3.2"/>
</g>
<g fill="rgb(196,86,42)">
<rect x="1230.8" y="27.2" width="1.2" height="24.0" rx="0.6" ry="3.2"/>
</g>
<g fill="rgb(233,198,84)">
<rect x="1235.0" y="27.2" width="3.2" height="24.0" rx="1.6" ry="3.2"/>
</g>
<g fill="rgb(196,86,42)">
<rect x="1238.8" y="27.2" width="1.8" height="24.0" rx="0.9" ry="3.2"/>
</g>
<g fill="rgb(233,198,84)">
<rect x="1242.0" y="27.2" width="4.5" height="24.0" rx="2.2" ry="3.2"/>
</g>
<g fill="rgb(196,86,42)">
<rect x="1247.0" y="27.2" width="1.2" height="24.0" rx="0.6" ry="3.2"/>
</g>
<g fill="rgb(233,198,84)">
<rect x="1248.8" y="27.2" width="3.8" height="24.0" rx="1.9" ry="3.2"/>
</g>
<g fill="rgb(177,41,27)">
<rect x="1253.0" y="27.2" width="1.5" height="24.0" rx="0.8" ry="3.2"/>
<rect x="1270.8" y="27.2" width="1.0" height="24.0" rx="0.5" ry="3.2"/>
<rect x="1274.5" y="27.2" width="1.5" height="24.0" rx="0.8" ry="3.2"/>
</g>
<g fill="rgb(196,86,42)">
<rect x="1300.5" y="27.2" width="4.5" height="24.0" rx="2.2" ry="3.2"/>
</g>
<g fill="rgb(233,198,84)">
<rect x="1221.0" y="52.7" width="5.0" height="24.0" rx="2.5" ry="3.2"/>
</g>
<g fill="rgb(196,86,42)">
<rect x="1227.0" y="52.7" width="2.0" height="24.0" rx="1.0" ry="3.2"/>
<rect x="1230.0" y="52.7" width="2.5" height="24.0" rx="1.2" ry="3.2"/>
</g>
<g fill="rgb(233,198,84)">
<rect x="1235.0" y="52.7" width="3.2" height="24.0" rx="1.6" ry="3.2"/>
</g>
<g fill="rgb(196,86,42)">
<rect x="1238.8" y="52.7" width="1.8" height="24.0" rx="0.9" ry="3.2"/>
</g>
<g fill="rgb(233,198,84)">
<rect x="1242.0" y="52.7" width="4.5" height="24.0" rx="2.2" ry="3.2"/>
<rect x="1248.8" y="52.7" width="3.8" height="24.0" rx="1.9" ry="3.2"/>
</g>
<g fill="rgb(196,86,42)">
<rect x="1253.0" y="52.7" width="1.5" height="24.0" rx="0.8" ry="3.2"/>
</g>
<g fill="rgb(177,41,27)">
<rect x="1270.8" y="52.7" width="1.0" height="24.0" rx="0.5" ry="3.2"/>
<rect x="1274.5" y="52.7" width="1.5" height="24.0" rx="0.8" ry="3.2"/>
</g>
<g fill="rgb(228,180,75)">
<rect x="1277.0" y="52.7" width="18.0" height="24.0" rx="3.2" ry="3.2"/>
</g>
<g fill="rgb(217,156,65)">
<rect x="1300.5" y="52.7" width="2.5" height="24.0" rx="1.2" ry="3.2"/>
</g>
<g fill="rgb(196,86,42)">
<rect x="1304.5" y="52.7" width="2.0" height="24.0" rx="1.0" ry="3.2"/>
</g>
<g fill="rgb(233,198,84)">
<rect x="1215.5" y="78.3" width="2.5" height="24.0" rx="1.2" ry="3.2"/>
</g>
<g fill="rgb(196,86,42)">
<rect x="1219.0" y="78.3" width="2.2" height="24.0" rx="1.1" ry="3.2"/>
</g>
<g fill="rgb(233,198,84)">
<rect x="1222.5" y="78.3" width="2.5" height="24.0" rx="1.2" ry="3.2"/>
</g>
<g fill="rgb(217,156,65)">
<rect x="1227.0" y="78.3" width="2.0" height="24.0" rx="1.0" ry="3.2"/>
</g>
<g fill="rgb(233,198,84)">
<rect x="1230.0" y="78.3" width="2.5" height="24.0" rx="1.2" ry="3.2"/>
<rect x="1235.0" y="78.3" width="3.2" height="24.0" rx="1.6" ry="3.2"/>
</g>
<g fill="rgb(196,86,42)">
<rect x="1238.8" y="78.3" width="1.8" height="24.0" rx="0.9" ry="3.2"/>
</g>
<g fill="rgb(233,198,84)">
<rect x="1242.0" y="78.3" width="4.5" height="24.0" rx="2.2" ry="3.2"/>
<rect x="1248.8" y="78.3" width="3.8" height="24.0" rx="1.9" ry="3.2"/>
</g>
<g fill="rgb(196,86,42)">
<rect x="1253.0" y="78.3" width="1.5" height="24.0" rx="0.8" ry="3.2"/>
</g>
<g fill="rgb(177,41,27)">
<rect x="1270.8" y="78.3" width="23.0" height="24.0" rx="3.2" ry="3.2"/>
</g>
<g fill="rgb(217,156,65)">
<rect x="1300.5" y="78.3" width="2.5" height="24.0" rx="1.2" ry="3.2"/>
</g>
<g fill="rgb(196,86,42)">
<rect x="1304.0" y="78.3" width="2.5" height="24.0" rx="1.2" ry="3.2"/>
</g>
<g fill="rgb(177,41,27)">
<rect x="1220.0" y="103.8" width="3.0" height="24.0" rx="1.5" ry="3.2"/>
</g>
<g fill="rgb(233,198,84)">
<rect x="1223.8" y="103.8" width="8.8" height="24.0" rx="3.2" ry="3.2"/>
<rect x="1235.0" y="103.8" width="3.2" height="24.0" rx="1.6" ry="3.2"/>
</g>
<g fill="rgb(196,86,42)">
<rect x="1239.0" y="103.8" width="1.5" height="24.0" rx="0.8" ry="3.2"/>
</g>
<g fill="rgb(233,198,84)">
<rect x="1242.0" y="103.8" width="4.5" height="24.0" rx="2.2" ry="3.2"/>
</g>
<g fill="rgb(196,86,42)">
<rect x="1247.0" y="103.8" width="3.0" height="24.0" rx="1.5" ry="3.2"/>
</g>
<g fill="rgb(233,198,84)">
<rect x="1250.5" y="103.8" width="2.0" height="24.0" rx="1.0" ry="3.2"/>
</g>
<g fill="rgb(196,86,42)">
<rect x="1253.0" y="103.8" width="1.5" height="24.0" rx="0.8" ry="3.2"/>
</g>
<g fill="rgb(217,156,65)">
<rect x="1270.8" y="103.8" width="24.8" height="24.0" rx="3.2" ry="3.2"/>
</g>
<g fill="rgb(196,86,42)">
<rect x="1300.5" y="103.8" width="4.5" height="24.0" rx="2.2" ry="3.2"/>
</g>
<g fill="rgb(233,198,84)">
<rect x="1305.5" y="103.8" width="1.5" height="24.0" rx="0.8" ry="3.2"/>
</g>
<g fill="rgb(196,86,42)">
<rect x="1222.5" y="129.3" width="1.5" height="24.0" rx="0.8" ry="3.2"/>
</g>
<g fill="rgb(233,198,84)">
<rect x="1225.0" y="129.3" width="7.5" height="24.0" rx="3.2" ry="3.2"/>
<rect x="1235.0" y="129.3" width="3.2" height="24.0" rx="1.6" ry="3.2"/>
</g>
<g fill="rgb(196,86,42)">
<rect x="1239.0" y="129.3" width="2.0" height="24.0" rx="1.0" ry="3.2"/>
</g>
<g fill="rgb(233,198,84)">
<rect x="1242.0" y="129.3" width="4.5" height="24.0" rx="2.2" ry="3.2"/>
<rect x="1248.8" y="129.3" width="3.8" height="24.0" rx="1.9" ry="3.2"/>
</g>
<g fill="rgb(196,86,42)">
<rect x="1253.0" y="129.3" width="1.5" height="24.0" rx="0.8" ry="3.2"/>
</g>
<g fill="rgb(208,124,54)">
<rect x="1270.8" y="129.3" width="24.8" height="24.0" rx="3.2" ry="3.2"/>
</g>
<g fill="rgb(196,86,42)">
<rect x="1300.5" y="129.3" width="5.8" height="24.0" rx="2.9" ry="3.2"/>
<rect x="1226.0" y="154.9" width="2.0" height="24.0" rx="1.0" ry="3.2"/>
<rect x="1230.0" y="154.9" width="2.0" height="24.0" rx="1.0" ry="3.2"/>
</g>
<g fill="rgb(233,198,84)">
<rect x="1235.0" y="154.9" width="8.8" height="24.0" rx="3.2" ry="3.2"/>
</g>
<g fill="rgb(217,156,65)">
<rect x="1245.0" y="154.9" width="2.5" height="24.0" rx="1.2" ry="3.2"/>
</g>
<g fill="rgb(233,198,84)">
<rect x="1248.8" y="154.9" width="3.8" height="24.0" rx="1.9" ry="3.2"/>
</g>
<g fill="rgb(196,86,42)">
<rect x="1253.0" y="154.9" width="1.5" height="24.0" rx="0.8" ry="3.2"/>
</g>
<g fill="rgb(208,124,54)">
<rect x="1270.8" y="154.9" width="24.8" height="24.0" rx="3.2" ry="3.2"/>
</g>
<g fill="rgb(243,224,100)">
<rect x="1300.5" y="154.9" width="6.5" height="24.0" rx="3.2" ry="3.2"/>
</g>
<g fill="rgb(177,41,27)">
<rect x="1225.0" y="180.4" width="1.5" height="24.0" rx="0.8" ry="3.2"/>
</g>
<g fill="rgb(233,198,84)">
<rect x="1227.0" y="180.4" width="2.0" height="24.0" rx="1.0" ry="3.2"/>
</g>
<g fill="rgb(196,86,42)">
<rect x="1230.0" y="180.4" width="2.0" height="24.0" rx="1.0" ry="3.2"/>
</g>
<g fill="rgb(233,198,84)">
<rect x="1235.0" y="180.4" width="3.2" height="24.0" rx="1.6" ry="3.2"/>
</g>
<g fill="rgb(177,41,27)">
<rect x="1239.0" y="180.4" width="2.0" height="24.0" rx="1.0" ry="3.2"/>
</g>
<g fill="rgb(233,198,84)">
<rect x="1242.0" y="180.4" width="1.8" height="24.0" rx="0.9" ry="3.2"/>
<rect x="1245.0" y="180.4" width="10.0" height="24.0" rx="3.2" ry="3.2"/>
</g>
<g fill="rgb(243,224,100)">
<rect x="1270.8" y="180.4" width="24.8" height="24.0" rx="3.2" ry="3.2"/>
</g>
<g fill="rgb(217,156,65)">
<rect x="1300.5" y="180.4" width="6.5" height="24.0" rx="3.2" ry="3.2"/>
</g>
<g fill="rgb(233,198,84)">
<rect x="1236.5" y="205.9" width="1.8" height="24.0" rx="0.9" ry="3.2"/>
</g>
<g fill="rgb(196,86,42)">
<rect x="1238.8" y="205.9" width="1.8" height="24.0" rx="0.9" ry="3.2"/>
</g>
<g fill="rgb(233,198,84)">
<rect x="1242.0" y="205.9" width="8.0" height="24.0" rx="3.2" ry="3.2"/>
</g>
<g fill="rgb(196,86,42)">
<rect x="1251.2" y="205.9" width="2.5" height="24.0" rx="1.2" ry="3.2"/>
</g>
<g fill="rgb(233,198,84)">
<rect x="1254.5" y="205.9" width="1.8" height="24.0" rx="0.9" ry="3.2"/>
</g>
<g fill="rgb(217,156,65)">
<rect x="1270.8" y="205.9" width="24.8" height="24.0" rx="3.2" ry="3.2"/>
</g>
<g fill="rgb(177,41,27)">
<rect x="1297.0" y="205.9" width="1.5" height="24.0" rx="0.8" ry="3.2"/>
</g>
<g fill="rgb(243,224,100)">
<rect x="1299.5" y="205.9" width="7.5" height="24.0" rx="3.2" ry="3.2"/>
</g>
<g fill="rgb(217,156,65)">
<rect x="1230.5" y="231.5" width="2.0" height="24.0" rx="1.0" ry="3.2"/>
</g>
<g fill="rgb(233,198,84)">
<rect x="1233.2" y="231.5" width="10.5" height="24.0" rx="3.2" ry="3.2"/>
</g>
<g fill="rgb(217,156,65)">
<rect x="1244.5" y="231.5" width="5.5" height="24.0" rx="2.8" ry="3.2"/>
</g>
<g fill="rgb(233,198,84)">
<rect x="1251.2" y="231.5" width="3.8" height="24.0" rx="1.9" ry="3.2"/>
</g>
<g fill="rgb(243,224,100)">
<rect x="1268.8" y="231.5" width="27.5" height="24.0" rx="3.2" ry="3.2"/>
</g>
<g fill="rgb(217,156,65)">
<rect x="1297.5" y="231.5" width="9.5" height="24.0" rx="3.2" ry="3.2"/>
</g>
<g fill="rgb(196,86,42)">
<rect x="1256.8" y="257.0" width="7.8" height="24.0" rx="3.2" ry="3.2"/>
</g>
<g fill="rgb(228,180,75)">
<rect x="1268.8" y="257.0" width="26.8" height="24.0" rx="3.2" ry="3.2"/>
</g>
<g fill="rgb(233,198,84)">
<rect x="1297.0" y="257.0" width="2.5" height="24.0" rx="1.2" ry="3.2"/>
</g>
<g fill="rgb(177,41,27)">
<rect x="1300.5" y="257.0" width="6.5" height="24.0" rx="3.2" ry="3.2"/>
</g>
<g fill="rgb(196,86,42)">
<rect x="1257.0" y="282.6" width="8.0" height="24.0" rx="3.2" ry="3.2"/>
</g>
<g fill="rgb(177,41,27)">
<rect x="1270.8" y="282.6" width="24.8" height="24.0" rx="3.2" ry="3.2"/>
</g>
<g fill="rgb(243,224,100)">
<rect x="1297.5" y="282.6" width="10.0" height="24.0" rx="3.2" ry="3.2"/>
</g>
<g fill="rgb(233,198,84)">
<rect x="1266.0" y="308.1" width="3.0" height="24.0" rx="1.5" ry="3.2"/>
</g>
<g fill="rgb(243,224,100)">
<rect x="1270.8" y="308.1" width="25.5" height="24.0" rx="3.2" ry="3.2"/>
</g>
<g fill="rgb(196,86,42)">
<rect x="1301.2" y="308.1" width="6.2" height="24.0" rx="3.1" ry="3.2"/>
</g>
<g fill="rgb(177,41,27)">
<rect x="1265.0" y="333.6" width="1.0" height="24.0" rx="0.5" ry="3.2"/>
</g>
<g fill="rgb(196,86,42)">
<rect x="1270.8" y="333.6" width="24.8" height="24.0" rx="3.2" ry="3.2"/>
</g>
<g fill="rgb(177,41,27)">
<rect x="1301.2" y="333.6" width="6.2" height="24.0" rx="3.1" ry="3.2"/>
<rect x="1270.8" y="359.2" width="24.8" height="24.0" rx="3.2" ry="3.2"/>
<rect x="1301.2" y="359.2" width="6.2" height="24.0" rx="3.1" ry="3.2"/>
<rect x="1270.8" y="384.7" width="24.8" height="24.0" rx="3.2" ry="3.2"/>
</g>
<g fill="rgb(228,180,75)">
<rect x="1300.0" y="384.7" width="7.5" height="24.0" rx="3.2" ry="3.2"/>
</g>
<g fill="rgb(233,198,84)">
<rect x="1267.0" y="410.2" width="29.2" height="24.0" rx="3.2" ry="3.2"/>
</g>
<g fill="rgb(177,41,27)">
<rect x="1297.5" y="410.2" width="1.5" height="24.0" rx="0.8" ry="3.2"/>
</g>
<g fill="rgb(233,198,84)">
<rect x="1300.0" y="410.2" width="7.5" height="24.0" rx="3.2" ry="3.2"/>
<rect x="1267.0" y="435.8" width="29.2" height="24.0" rx="3.2" ry="3.2"/>
</g>
<g fill="rgb(208,124,54)">
<rect x="1301.2" y="435.8" width="5.8" height="24.0" rx="2.9" ry="3.2"/>
</g>
<g fill="rgb(196,86,42)">
<rect x="1297.5" y="461.3" width="10.0" height="24.0" rx="3.2" ry="3.2"/>
</g>
<g fill="rgb(177,41,27)">
<rect x="1297.0" y="486.9" width="1.0" height="24.0" rx="0.5" ry="3.2"/>
</g>
<g fill="rgb(233,198,84)">
<rect x="1298.8" y="486.9" width="9.2" height="24.0" rx="3.2" ry="3.2"/>
<rect x="1297.5" y="512.4" width="10.5" height="24.0" rx="3.2" ry="3.2"/>
<rect x="1310.8" y="512.4" width="1.0" height="24.0" rx="0.5" ry="3.2"/>
<rect x="1297.0" y="537.9" width="10.5" height="24.0" rx="3.2" ry="3.2"/>
</g>
<g fill="rgb(177,41,27)">
<rect x="1307.8" y="537.9" width="1.0" height="24.0" rx="0.5" ry="3.2"/>
</g>
<g fill="rgb(233,198,84)">
<rect x="1298.0" y="563.5" width="10.0" height="24.0" rx="3.2" ry="3.2"/>
</g>
<g fill="rgb(208,124,54)">
<rect x="1297.5" y="589.0" width="10.0" height="24.0" rx="3.2" ry="3.2"/>
</g>
<g fill="rgb(233,198,84)">
<rect x="1310.8" y="589.0" width="1.0" height="24.0" rx="0.5" ry="3.2"/>
</g>
<g fill="rgb(196,86,42)">
<rect x="1309.2" y="614.6" width="2.8" height="24.0" rx="1.4" ry="3.2"/>
<rect x="1309.2" y="640.1" width="2.8" height="24.0" rx="1.4" ry="3.2"/>
</g>
<g fill="rgb(177,41,27)">
<rect x="1312.0" y="665.6" width="1.0" height="24.0" rx="0.5" ry="3.2"/>
</g>
<g fill="rgb(233,198,84)">
<rect x="1318.5" y="691.2" width="1.0" height="24.0" rx="0.5" ry="3.2"/>
<rect x="1318.5" y="716.7" width="1.0" height="24.0" rx="0.5" ry="3.2"/>
</g>
<g fill="rgb(217,156,65)">
<rect x="1318.5" y="742.2" width="1.0" height="24.0" rx="0.5" ry="3.2"/>
<rect x="1318.5" y="767.8" width="1.0" height="24.0" rx="0.5" ry="3.2"/>
</g>
<g fill="rgb(233,198,84)">
<rect x="1318.5" y="793.3" width="1.0" height="24.0" rx="0.5" ry="3.2"/>
</g>
<g fill="rgb(177,41,27)">
<rect x="1321.2" y="793.3" width="1.0" height="24.0" rx="0.5" ry="3.2"/>
</g>
<g fill="rgb(233,198,84)">
<rect x="1318.5" y="818.9" width="1.0" height="24.0" rx="0.5" ry="3.2"/>
</g>
<g fill="rgb(177,41,27)">
<rect x="1321.2" y="818.9" width="1.0" height="24.0" rx="0.5" ry="3.2"/>
</g>
<g fill="rgb(233,198,84)">
<rect x="1313.8" y="844.4" width="6.2" height="24.0" rx="3.1" ry="3.2"/>
</g>
<g fill="rgb(177,41,27)">
<rect x="1321.2" y="844.4" width="1.2" height="24.0" rx="0.6" ry="3.2"/>
<rect x="1321.2" y="869.9" width="2.8" height="24.0" rx="1.4" ry="3.2"/>
</g>
<g fill="rgb(196,86,42)">
<rect x="1322.3" y="997.6" width="3.7" height="24.0" rx="1.9" ry="3.2"/>
</g>
<g fill="rgb(177,41,27)">
<rect x="1322.3" y="972.1" width="3.7" height="24.0" rx="1.9" ry="3.2"/>
</g>
<g fill="rgb(196,86,42)">
<rect x="1322.3" y="946.5" width="3.7" height="24.0" rx="1.9" ry="3.2"/>
</g>
<g fill="rgb(177,41,27)">
<rect x="1322.3" y="921.0" width="3.7" height="24.0" rx="1.9" ry="3.2"/>
</g>
<g fill="rgb(196,86,42)">
<rect x="1322.3" y="895.5" width="3.7" height="24.0" rx="1.9" ry="3.2"/>
</g>
<g fill="rgb(233,198,84)">
<rect x="1477.7" y="308.1" width="36.0" height="24.0" rx="3.2" ry="3.2"/>
</g>
<g fill="rgb(177,41,27)">
<rect x="1479.0" y="308.1" width="6.0" height="24.0" rx="3.0" ry="3.2"/>
<rect x="1488.0" y="308.1" width="3.0" height="24.0" rx="1.5" ry="3.2"/>
<rect x="1510.0" y="308.1" width="3.0" height="24.0" rx="1.5" ry="3.2"/>
</g>
<g fill="rgb(233,198,84)">
<rect x="1477.7" y="333.6" width="36.0" height="24.0" rx="3.2" ry="3.2"/>
</g>
<g fill="rgb(196,86,42)">
<rect x="1479.0" y="333.6" width="6.0" height="24.0" rx="3.0" ry="3.2"/>
<rect x="1488.0" y="333.6" width="3.0" height="24.0" rx="1.5" ry="3.2"/>
<rect x="1495.0" y="333.6" width="11.0" height="24.0" rx="3.2" ry="3.2"/>
</g>
<g fill="rgb(233,198,84)">
<rect x="1477.7" y="359.2" width="36.0" height="24.0" rx="3.2" ry="3.2"/>
</g>
<g fill="rgb(217,156,65)">
<rect x="1479.0" y="359.2" width="6.0" height="24.0" rx="3.0" ry="3.2"/>
</g>
<g fill="rgb(177,41,27)">
<rect x="1486.0" y="359.2" width="2.0" height="24.0" rx="1.0" ry="3.2"/>
</g>
<g fill="rgb(217,156,65)">
<rect x="1489.0" y="359.2" width="4.0" height="24.0" rx="2.0" ry="3.2"/>
</g>
<g fill="rgb(233,198,84)">
<rect x="1477.7" y="384.7" width="36.0" height="24.0" rx="3.2" ry="3.2"/>
</g>
<g fill="rgb(196,86,42)">
<rect x="1492.0" y="384.7" width="1.3" height="24.0" rx="0.6" ry="3.2"/>
<rect x="1507.0" y="384.7" width="1.3" height="24.0" rx="0.6" ry="3.2"/>
</g>
<g fill="rgb(233,198,84)">
<rect x="1477.7" y="410.2" width="36.0" height="24.0" rx="3.2" ry="3.2"/>
</g>
<g fill="rgb(177,41,27)">
<rect x="1494.0" y="410.2" width="12.0" height="24.0" rx="3.2" ry="3.2"/>
<rect x="1511.0" y="410.2" width="1.5" height="24.0" rx="0.8" ry="3.2"/>
</g>
<g fill="rgb(233,198,84)">
<rect x="1477.7" y="435.8" width="36.0" height="24.0" rx="3.2" ry="3.2"/>
</g>
<g fill="rgb(196,86,42)">
<rect x="1479.0" y="435.8" width="11.0" height="24.0" rx="3.2" ry="3.2"/>
<rect x="1496.0" y="435.8" width="10.0" height="24.0" rx="3.2" ry="3.2"/>
</g>
<g fill="rgb(233,198,84)">
<rect x="1477.7" y="461.3" width="36.0" height="24.0" rx="3.2" ry="3.2"/>
</g>
<g fill="rgb(217,156,65)">
<rect x="1496.0" y="461.3" width="10.0" height="24.0" rx="3.2" ry="3.2"/>
</g>
<g fill="rgb(177,41,27)">
<rect x="1507.0" y="461.3" width="1.5" height="24.0" rx="0.8" ry="3.2"/>
</g>
<g fill="rgb(233,198,84)">
<rect x="1477.7" y="486.9" width="36.0" height="24.0" rx="3.2" ry="3.2"/>
</g>
<g fill="rgb(196,86,42)">
<rect x="1492.0" y="486.9" width="3.0" height="24.0" rx="1.5" ry="3.2"/>
</g>
<g fill="rgb(177,41,27)">
<rect x="1511.0" y="486.9" width="1.5" height="24.0" rx="0.8" ry="3.2"/>
</g>
<g fill="rgb(233,198,84)">
<rect x="1477.7" y="512.4" width="36.0" height="24.0" rx="3.2" ry="3.2"/>
</g>
<g fill="rgb(177,41,27)">
<rect x="1479.0" y="512.4" width="11.0" height="24.0" rx="3.2" ry="3.2"/>
<rect x="1491.0" y="512.4" width="2.0" height="24.0" rx="1.0" ry="3.2"/>
<rect x="1510.0" y="512.4" width="2.0" height="24.0" rx="1.0" ry="3.2"/>
</g>
<g fill="rgb(233,198,84)">
<rect x="1477.7" y="537.9" width="36.0" height="24.0" rx="3.2" ry="3.2"/>
</g>
<g fill="rgb(196,86,42)">
<rect x="1480.0" y="537.9" width="10.0" height="24.0" rx="3.2" ry="3.2"/>
<rect x="1496.0" y="537.9" width="10.0" height="24.0" rx="3.2" ry="3.2"/>
</g>
<g fill="rgb(233,198,84)">
<rect x="1477.7" y="563.5" width="36.0" height="24.0" rx="3.2" ry="3.2"/>
</g>
<g fill="rgb(217,156,65)">
<rect x="1480.0" y="563.5" width="10.0" height="24.0" rx="3.2" ry="3.2"/>
</g>
<g fill="rgb(177,41,27)">
<rect x="1492.0" y="563.5" width="3.0" height="24.0" rx="1.5" ry="3.2"/>
</g>
<g fill="rgb(233,198,84)">
<rect x="1477.7" y="589.0" width="36.0" height="24.0" rx="3.2" ry="3.2"/>
</g>
<g fill="rgb(177,41,27)">
<rect x="1478.0" y="589.0" width="1.0" height="24.0" rx="0.5" ry="3.2"/>
</g>
<g fill="rgb(196,86,42)">
<rect x="1494.0" y="589.0" width="1.0" height="24.0" rx="0.5" ry="3.2"/>
</g>
<g fill="rgb(177,41,27)">
<rect x="1511.2" y="589.0" width="1.8" height="24.0" rx="0.9" ry="3.2"/>
</g>
<g fill="rgb(233,198,84)">
<rect x="1477.7" y="614.6" width="36.0" height="24.0" rx="3.2" ry="3.2"/>
</g>
<g fill="rgb(177,41,27)">
<rect x="1497.0" y="614.6" width="10.0" height="24.0" rx="3.2" ry="3.2"/>
</g>
<g fill="rgb(233,198,84)">
<rect x="1477.7" y="640.1" width="36.0" height="24.0" rx="3.2" ry="3.2"/>
</g>
<g fill="rgb(196,86,42)">
<rect x="1480.0" y="640.1" width="7.5" height="24.0" rx="3.2" ry="3.2"/>
<rect x="1488.8" y="640.1" width="4.2" height="24.0" rx="2.1" ry="3.2"/>
<rect x="1500.5" y="640.1" width="6.5" height="24.0" rx="3.2" ry="3.2"/>
</g>
<g fill="rgb(177,41,27)">
<rect x="1512.0" y="640.1" width="1.5" height="24.0" rx="0.8" ry="3.2"/>
</g>
<g fill="rgb(233,198,84)">
<rect x="1477.7" y="665.6" width="36.0" height="24.0" rx="3.2" ry="3.2"/>
</g>
<g fill="rgb(177,41,27)">
<rect x="1478.0" y="665.6" width="1.2" height="24.0" rx="0.6" ry="3.2"/>
</g>
<g fill="rgb(217,156,65)">
<rect x="1500.5" y="665.6" width="6.5" height="24.0" rx="3.2" ry="3.2"/>
</g>
<g fill="rgb(177,41,27)">
<rect x="1510.0" y="665.6" width="3.0" height="24.0" rx="1.5" ry="3.2"/>
</g>
<g fill="rgb(233,198,84)">
<rect x="1477.7" y="691.2" width="36.0" height="24.0" rx="3.2" ry="3.2"/>
</g>
<g fill="rgb(177,41,27)">
<rect x="1478.0" y="691.2" width="1.2" height="24.0" rx="0.6" ry="3.2"/>
</g>
<g fill="rgb(196,86,42)">
<rect x="1495.0" y="691.2" width="4.5" height="24.0" rx="2.2" ry="3.2"/>
<rect x="1510.5" y="691.2" width="2.0" height="24.0" rx="1.0" ry="3.2"/>
</g>
<g fill="rgb(233,198,84)">
<rect x="1477.7" y="716.7" width="36.0" height="24.0" rx="3.2" ry="3.2"/>
</g>
<g fill="rgb(177,41,27)">
<rect x="1480.0" y="716.7" width="7.5" height="24.0" rx="3.2" ry="3.2"/>
<rect x="1488.8" y="716.7" width="4.2" height="24.0" rx="2.1" ry="3.2"/>
</g>
<g fill="rgb(196,86,42)">
<rect x="1509.0" y="716.7" width="1.0" height="24.0" rx="0.5" ry="3.2"/>
</g>
<g fill="rgb(233,198,84)">
<rect x="1477.7" y="742.2" width="36.0" height="24.0" rx="3.2" ry="3.2"/>
</g>
<g fill="rgb(196,86,42)">
<rect x="1489.5" y="742.2" width="3.5" height="24.0" rx="1.8" ry="3.2"/>
<rect x="1500.5" y="742.2" width="7.0" height="24.0" rx="3.2" ry="3.2"/>
</g>
<g fill="rgb(233,198,84)">
<rect x="1477.7" y="767.8" width="36.0" height="24.0" rx="3.2" ry="3.2"/>
</g>
<g fill="rgb(217,156,65)">
<rect x="1489.5" y="767.8" width="4.2" height="24.0" rx="2.1" ry="3.2"/>
</g>
<g fill="rgb(177,41,27)">
<rect x="1495.0" y="767.8" width="4.5" height="24.0" rx="2.2" ry="3.2"/>
</g>
<g fill="rgb(196,86,42)">
<rect x="1511.2" y="767.8" width="1.8" height="24.0" rx="0.9" ry="3.2"/>
</g>
<g fill="rgb(233,198,84)">
<rect x="1477.7" y="793.3" width="36.0" height="24.0" rx="3.2" ry="3.2"/>
</g>
<g fill="rgb(196,86,42)">
<rect x="1478.0" y="793.3" width="9.5" height="24.0" rx="3.2" ry="3.2"/>
<rect x="1495.0" y="793.3" width="4.5" height="24.0" rx="2.2" ry="3.2"/>
</g>
<g fill="rgb(177,41,27)">
<rect x="1510.0" y="793.3" width="1.0" height="24.0" rx="0.5" ry="3.2"/>
</g>
<g fill="rgb(233,198,84)">
<rect x="1477.7" y="818.9" width="36.0" height="24.0" rx="3.2" ry="3.2"/>
</g>
<g fill="rgb(217,156,65)">
<rect x="1495.5" y="818.9" width="4.0" height="24.0" rx="2.0" ry="3.2"/>
</g>
<g fill="rgb(177,41,27)">
<rect x="1500.5" y="818.9" width="7.0" height="24.0" rx="3.2" ry="3.2"/>
</g>
<g fill="rgb(233,198,84)">
<rect x="1477.7" y="844.4" width="36.0" height="24.0" rx="3.2" ry="3.2"/>
</g>
<g fill="rgb(196,86,42)">
<rect x="1488.8" y="844.4" width="4.2" height="24.0" rx="2.1" ry="3.2"/>
</g>
<g fill="rgb(177,41,27)">
<rect x="1506.5" y="844.4" width="1.0" height="24.0" rx="0.5" ry="3.2"/>
<rect x="1511.2" y="844.4" width="1.8" height="24.0" rx="0.9" ry="3.2"/>
</g>
<g fill="rgb(233,198,84)">
<rect x="1477.7" y="869.9" width="36.0" height="24.0" rx="3.2" ry="3.2"/>
</g>
<g fill="rgb(177,41,27)">
<rect x="1478.0" y="869.9" width="9.5" height="24.0" rx="3.2" ry="3.2"/>
</g>
<g fill="rgb(196,86,42)">
<rect x="1510.0" y="869.9" width="3.0" height="24.0" rx="1.5" ry="3.2"/>
</g>
<g fill="rgb(233,198,84)">
<rect x="1477.7" y="895.5" width="36.0" height="24.0" rx="3.2" ry="3.2"/>
</g>
<g fill="rgb(196,86,42)">
<rect x="1478.0" y="895.5" width="9.5" height="24.0" rx="3.2" ry="3.2"/>
<rect x="1495.0" y="895.5" width="10.0" height="24.0" rx="3.2" ry="3.2"/>
</g>
<g fill="rgb(233,198,84)">
<rect x="1477.7" y="921.0" width="36.0" height="24.0" rx="3.2" ry="3.2"/>
</g>
<g fill="rgb(177,41,27)">
<rect x="1474.5" y="921.0" width="1.0" height="24.0" rx="0.5" ry="3.2"/>
</g>
<g fill="rgb(217,156,65)">
<rect x="1478.0" y="921.0" width="9.5" height="24.0" rx="3.2" ry="3.2"/>
</g>
<g fill="rgb(177,41,27)">
<rect x="1488.8" y="921.0" width="4.2" height="24.0" rx="2.1" ry="3.2"/>
</g>
<g fill="rgb(233,198,84)">
<rect x="1477.7" y="946.5" width="36.0" height="24.0" rx="3.2" ry="3.2"/>
</g>
<g fill="rgb(177,41,27)">
<rect x="1506.5" y="946.5" width="1.0" height="24.0" rx="0.5" ry="3.2"/>
</g>
<g fill="rgb(233,198,84)">
<rect x="1477.7" y="972.1" width="36.0" height="24.0" rx="3.2" ry="3.2"/>
</g>
<g fill="rgb(177,41,27)">
<rect x="1495.0" y="972.1" width="10.0" height="24.0" rx="3.2" ry="3.2"/>
</g>
<g fill="rgb(233,198,84)">
<rect x="1477.7" y="997.6" width="36.0" height="24.0" rx="3.2" ry="3.2"/>
</g>
<g fill="rgb(196,86,42)">
<rect x="1478.0" y="997.6" width="14.5" height="24.0" rx="3.2" ry="3.2"/>
<rect x="1493.8" y="997.6" width="11.2" height="24.0" rx="3.2" ry="3.2"/>
</g>
<g fill="rgb(243,224,100)">
<rect x="1506.2" y="997.6" width="11.2" height="24.0" rx="3.2" ry="3.2"/>
</g>
<g fill="rgb(233,198,84)">
<rect x="1477.7" y="1023.2" width="36.0" height="24.0" rx="3.2" ry="3.2"/>
</g>
<g fill="rgb(217,156,65)">
<rect x="1495.0" y="1023.2" width="10.0" height="24.0" rx="3.2" ry="3.2"/>
</g>
<g fill="rgb(177,41,27)">
<rect x="1506.2" y="1023.2" width="1.2" height="24.0" rx="0.6" ry="3.2"/>
</g>
<g fill="rgb(233,198,84)">
<rect x="1508.8" y="1023.2" width="8.8" height="24.0" rx="3.2" ry="3.2"/>
<rect x="1477.7" y="1048.7" width="36.0" height="24.0" rx="3.2" ry="3.2"/>
</g>
<g fill="rgb(196,86,42)">
<rect x="1472.5" y="1048.7" width="3.8" height="24.0" rx="1.9" ry="3.2"/>
</g>
<g fill="rgb(177,41,27)">
<rect x="1510.0" y="1048.7" width="1.0" height="24.0" rx="0.5" ry="3.2"/>
<rect x="1515.0" y="1048.7" width="1.0" height="24.0" rx="0.5" ry="3.2"/>
</g>
<g fill="rgb(233,198,84)">
<rect x="1477.7" y="1.6" width="36.0" height="24.0" rx="3.2" ry="3.2"/>
</g>
<g fill="rgb(217,156,65)">
<rect x="1478.0" y="1.6" width="9.5" height="24.0" rx="3.2" ry="3.2"/>
</g>
<g fill="rgb(196,86,42)">
<rect x="1494.5" y="1.6" width="1.0" height="24.0" rx="0.5" ry="3.2"/>
</g>
<g fill="rgb(177,41,27)">
<rect x="1497.0" y="1.6" width="1.0" height="24.0" rx="0.5" ry="3.2"/>
<rect x="1500.0" y="1.6" width="2.5" height="24.0" rx="1.2" ry="3.2"/>
</g>
<g fill="rgb(217,156,65)">
<rect x="1507.5" y="1.6" width="1.0" height="24.0" rx="0.5" ry="3.2"/>
</g>
<g fill="rgb(233,198,84)">
<rect x="1477.7" y="27.2" width="36.0" height="24.0" rx="3.2" ry="3.2"/>
</g>
<g fill="rgb(177,41,27)">
<rect x="1489.0" y="27.2" width="0.8" height="24.0" rx="0.4" ry="3.2"/>
</g>
<g fill="rgb(196,86,42)">
<rect x="1494.2" y="27.2" width="1.0" height="24.0" rx="0.5" ry="3.2"/>
</g>
<g fill="rgb(177,41,27)">
<rect x="1496.8" y="27.2" width="1.0" height="24.0" rx="0.5" ry="3.2"/>
</g>
<g fill="rgb(196,86,42)">
<rect x="1500.0" y="27.2" width="1.8" height="24.0" rx="0.9" ry="3.2"/>
</g>
<g fill="rgb(233,198,84)">
<rect x="1477.7" y="52.7" width="36.0" height="24.0" rx="3.2" ry="3.2"/>
</g>
<g fill="rgb(177,41,27)">
<rect x="1495.2" y="52.7" width="1.0" height="24.0" rx="0.5" ry="3.2"/>
<rect x="1498.8" y="52.7" width="1.0" height="24.0" rx="0.5" ry="3.2"/>
<rect x="1503.8" y="52.7" width="4.2" height="24.0" rx="2.1" ry="3.2"/>
</g>
<g fill="rgb(196,86,42)">
<rect x="1511.0" y="52.7" width="1.0" height="24.0" rx="0.5" ry="3.2"/>
</g>
<g fill="rgb(233,198,84)">
<rect x="1477.7" y="78.3" width="36.0" height="24.0" rx="3.2" ry="3.2"/>
</g>
<g fill="rgb(196,86,42)">
<rect x="1478.8" y="78.3" width="8.8" height="24.0" rx="3.2" ry="3.2"/>
<rect x="1491.0" y="78.3" width="2.0" height="24.0" rx="1.0" ry="3.2"/>
</g>
<g fill="rgb(177,41,27)">
<rect x="1499.2" y="78.3" width="1.0" height="24.0" rx="0.5" ry="3.2"/>
</g>
<g fill="rgb(196,86,42)">
<rect x="1504.2" y="78.3" width="2.8" height="24.0" rx="1.4" ry="3.2"/>
<rect x="1510.0" y="78.3" width="3.0" height="24.0" rx="1.5" ry="3.2"/>
</g>
<g fill="rgb(233,198,84)">
<rect x="1477.7" y="103.8" width="36.0" height="24.0" rx="3.2" ry="3.2"/>
</g>
<g fill="rgb(177,41,27)">
<rect x="1489.0" y="103.8" width="0.8" height="24.0" rx="0.4" ry="3.2"/>
</g>
<g fill="rgb(217,156,65)">
<rect x="1500.0" y="103.8" width="0.8" height="24.0" rx="0.4" ry="3.2"/>
</g>
<g fill="rgb(233,198,84)">
<rect x="1477.7" y="129.3" width="36.0" height="24.0" rx="3.2" ry="3.2"/>
</g>
<g fill="rgb(177,41,27)">
<rect x="1489.0" y="129.3" width="0.8" height="24.0" rx="0.4" ry="3.2"/>
</g>
<g fill="rgb(196,86,42)">
<rect x="1494.5" y="129.3" width="2.5" height="24.0" rx="1.2" ry="3.2"/>
<rect x="1500.0" y="129.3" width="3.8" height="24.0" rx="1.9" ry="3.2"/>
</g>
<g fill="rgb(177,41,27)">
<rect x="1512.2" y="129.3" width="1.0" height="24.0" rx="0.5" ry="3.2"/>
</g>
<g fill="rgb(233,198,84)">
<rect x="1477.7" y="154.9" width="36.0" height="24.0" rx="3.2" ry="3.2"/>
</g>
<g fill="rgb(177,41,27)">
<rect x="1478.8" y="154.9" width="8.8" height="24.0" rx="3.2" ry="3.2"/>
<rect x="1490.0" y="154.9" width="3.0" height="24.0" rx="1.5" ry="3.2"/>
<rect x="1510.2" y="154.9" width="1.2" height="24.0" rx="0.6" ry="3.2"/>
</g>
<g fill="rgb(233,198,84)">
<rect x="1477.7" y="180.4" width="36.0" height="24.0" rx="3.2" ry="3.2"/>
</g>
<g fill="rgb(196,86,42)">
<rect x="1479.2" y="180.4" width="1.0" height="24.0" rx="0.5" ry="3.2"/>
</g>
<g fill="rgb(177,41,27)">
<rect x="1486.0" y="180.4" width="1.2" height="24.0" rx="0.6" ry="3.2"/>
</g>
<g fill="rgb(196,86,42)">
<rect x="1492.2" y="180.4" width="1.0" height="24.0" rx="0.5" ry="3.2"/>
<rect x="1498.5" y="180.4" width="1.2" height="24.0" rx="0.6" ry="3.2"/>
<rect x="1504.2" y="180.4" width="1.0" height="24.0" rx="0.5" ry="3.2"/>
</g>
<g fill="rgb(177,41,27)">
<rect x="1507.0" y="180.4" width="1.2" height="24.0" rx="0.6" ry="3.2"/>
</g>
<g fill="rgb(233,198,84)">
<rect x="1477.7" y="205.9" width="36.0" height="24.0" rx="3.2" ry="3.2"/>
</g>
<g fill="rgb(217,156,65)">
<rect x="1486.2" y="205.9" width="1.0" height="24.0" rx="0.5" ry="3.2"/>
</g>
<g fill="rgb(177,41,27)">
<rect x="1494.2" y="205.9" width="3.2" height="24.0" rx="1.6" ry="3.2"/>
<rect x="1500.0" y="205.9" width="3.0" height="24.0" rx="1.5" ry="3.2"/>
</g>
<g fill="rgb(196,86,42)">
<rect x="1505.5" y="205.9" width="1.0" height="24.0" rx="0.5" ry="3.2"/>
<rect x="1511.0" y="205.9" width="1.0" height="24.0" rx="0.5" ry="3.2"/>
</g>
<g fill="rgb(233,198,84)">
<rect x="1477.7" y="231.5" width="36.0" height="24.0" rx="3.2" ry="3.2"/>
</g>
<g fill="rgb(196,86,42)">
<rect x="1480.0" y="231.5" width="5.0" height="24.0" rx="2.5" ry="3.2"/>
<rect x="1488.5" y="231.5" width="2.8" height="24.0" rx="1.4" ry="3.2"/>
<rect x="1493.8" y="231.5" width="3.2" height="24.0" rx="1.6" ry="3.2"/>
<rect x="1500.0" y="231.5" width="3.0" height="24.0" rx="1.5" ry="3.2"/>
</g>
<g fill="rgb(177,41,27)">
<rect x="1506.8" y="231.5" width="1.0" height="24.0" rx="0.5" ry="3.2"/>
<rect x="1510.2" y="231.5" width="1.0" height="24.0" rx="0.5" ry="3.2"/>
</g>
<g fill="rgb(233,198,84)">
<rect x="1477.7" y="257.0" width="36.0" height="24.0" rx="3.2" ry="3.2"/>
</g>
<g fill="rgb(177,41,27)">
<rect x="1498.5" y="257.0" width="1.0" height="24.0" rx="0.5" ry="3.2"/>
<rect x="1503.8" y="257.0" width="2.5" height="24.0" rx="1.2" ry="3.2"/>
</g>
<g fill="rgb(196,86,42)">
<rect x="1507.2" y="257.0" width="1.0" height="24.0" rx="0.5" ry="3.2"/>
</g>
<g fill="rgb(233,198,84)">
<rect x="1477.7" y="282.6" width="36.0" height="24.0" rx="3.2" ry="3.2"/>
</g>
<g fill="rgb(196,86,42)">
<rect x="1479.2" y="282.6" width="1.0" height="24.0" rx="0.5" ry="3.2"/>
</g>
<g fill="rgb(177,41,27)">
<rect x="1486.2" y="282.6" width="1.8" height="24.0" rx="0.9" ry="3.2"/>
<rect x="1492.2" y="282.6" width="1.0" height="24.0" rx="0.5" ry="3.2"/>
<rect x="1512.2" y="282.6" width="1.0" height="24.0" rx="0.5" ry="3.2"/>
<rect x="1833.8" y="1.6" width="2.4" height="24.0" rx="1.2" ry="3.2"/>
<rect x="1840.7" y="1.6" width="21.8" height="24.0" rx="3.2" ry="3.2"/>
<rect x="1863.0" y="1.6" width="19.5" height="24.0" rx="3.2" ry="3.2"/>
</g>
<g fill="rgb(233,198,84)">
<rect x="1833.8" y="27.2" width="2.4" height="24.0" rx="1.2" ry="3.2"/>
<rect x="1840.7" y="27.2" width="21.8" height="24.0" rx="3.2" ry="3.2"/>
</g>
<g fill="rgb(196,86,42)">
<rect x="1863.0" y="27.2" width="19.6" height="24.0" rx="3.2" ry="3.2"/>
<rect x="1833.8" y="52.7" width="2.4" height="24.0" rx="1.2" ry="3.2"/>
</g>
<g fill="rgb(233,198,84)">
<rect x="1840.7" y="52.7" width="21.8" height="24.0" rx="3.2" ry="3.2"/>
</g>
<g fill="rgb(217,156,65)">
<rect x="1863.0" y="52.7" width="19.7" height="24.0" rx="3.2" ry="3.2"/>
</g>
<g fill="rgb(196,86,42)">
<rect x="1833.8" y="78.3" width="2.4" height="24.0" rx="1.2" ry="3.2"/>
<rect x="1840.7" y="78.3" width="21.8" height="24.0" rx="3.2" ry="3.2"/>
</g>
<g fill="rgb(233,198,84)">
<rect x="1863.0" y="78.3" width="19.8" height="24.0" rx="3.2" ry="3.2"/>
<rect x="1833.8" y="103.8" width="2.4" height="24.0" rx="1.2" ry="3.2"/>
<rect x="1840.7" y="103.8" width="21.8" height="24.0" rx="3.2" ry="3.2"/>
<rect x="1863.0" y="103.8" width="20.0" height="24.0" rx="3.2" ry="3.2"/>
<rect x="1833.8" y="129.3" width="2.4" height="24.0" rx="1.2" ry="3.2"/>
<rect x="1840.7" y="129.3" width="21.8" height="24.0" rx="3.2" ry="3.2"/>
</g>
<g fill="rgb(196,86,42)">
<rect x="1863.0" y="129.3" width="20.1" height="24.0" rx="3.2" ry="3.2"/>
</g>
<g fill="rgb(177,41,27)">
<rect x="1833.8" y="154.9" width="2.4" height="24.0" rx="1.2" ry="3.2"/>
<rect x="1840.7" y="154.9" width="21.8" height="24.0" rx="3.2" ry="3.2"/>
</g>
<g fill="rgb(233,198,84)">
<rect x="1863.0" y="154.9" width="20.2" height="24.0" rx="3.2" ry="3.2"/>
</g>
<g fill="rgb(196,86,42)">
<rect x="1833.8" y="180.4" width="2.4" height="24.0" rx="1.2" ry="3.2"/>
<rect x="1840.7" y="180.4" width="21.8" height="24.0" rx="3.2" ry="3.2"/>
</g>
<g fill="rgb(233,198,84)">
<rect x="1863.0" y="180.4" width="20.3" height="24.0" rx="3.2" ry="3.2"/>
</g>
<g fill="rgb(217,156,65)">
<rect x="1833.8" y="205.9" width="2.4" height="24.0" rx="1.2" ry="3.2"/>
<rect x="1840.7" y="205.9" width="21.8" height="24.0" rx="3.2" ry="3.2"/>
</g>
<g fill="rgb(177,41,27)">
<rect x="1863.0" y="205.9" width="20.4" height="24.0" rx="3.2" ry="3.2"/>
</g>
<g fill="rgb(233,198,84)">
<rect x="1833.8" y="231.5" width="2.4" height="24.0" rx="1.2" ry="3.2"/>
<rect x="1840.7" y="231.5" width="21.8" height="24.0" rx="3.2" ry="3.2"/>
<rect x="1863.0" y="231.5" width="20.5" height="24.0" rx="3.2" ry="3.2"/>
<rect x="1833.8" y="257.0" width="2.4" height="24.0" rx="1.2" ry="3.2"/>
<rect x="1840.7" y="257.0" width="21.8" height="24.0" rx="3.2" ry="3.2"/>
<rect x="1863.0" y="257.0" width="20.6" height="24.0" rx="3.2" ry="3.2"/>
</g>
<g fill="rgb(196,86,42)">
<rect x="1833.8" y="282.6" width="2.4" height="24.0" rx="1.2" ry="3.2"/>
<rect x="1840.7" y="282.6" width="21.8" height="24.0" rx="3.2" ry="3.2"/>
<rect x="1863.0" y="282.6" width="20.8" height="24.0" rx="3.2" ry="3.2"/>
</g>
<g fill="rgb(233,198,84)">
<rect x="1831.0" y="308.1" width="6.5" height="24.0" rx="3.2" ry="3.2"/>
<rect x="1840.7" y="308.1" width="21.8" height="24.0" rx="3.2" ry="3.2"/>
<rect x="1863.0" y="308.1" width="20.9" height="24.0" rx="3.2" ry="3.2"/>
<rect x="1831.0" y="333.6" width="6.5" height="24.0" rx="3.2" ry="3.2"/>
<rect x="1840.7" y="333.6" width="21.8" height="24.0" rx="3.2" ry="3.2"/>
<rect x="1863.0" y="333.6" width="21.0" height="24.0" rx="3.2" ry="3.2"/>
<rect x="1831.0" y="359.2" width="6.5" height="24.0" rx="3.2" ry="3.2"/>
</g>
<g fill="rgb(177,41,27)">
<rect x="1833.5" y="359.2" width="3.0" height="24.0" rx="1.5" ry="3.2"/>
<rect x="1840.7" y="359.2" width="21.8" height="24.0" rx="3.2" ry="3.2"/>
<rect x="1863.0" y="359.2" width="21.1" height="24.0" rx="3.2" ry="3.2"/>
</g>
<g fill="rgb(233,198,84)">
<rect x="1831.0" y="384.7" width="6.5" height="24.0" rx="3.2" ry="3.2"/>
</g>
<g fill="rgb(196,86,42)">
<rect x="1833.5" y="384.7" width="3.0" height="24.0" rx="1.5" ry="3.2"/>
</g>
<g fill="rgb(233,198,84)">
<rect x="1840.7" y="384.7" width="21.8" height="24.0" rx="3.2" ry="3.2"/>
</g>
<g fill="rgb(196,86,42)">
<rect x="1863.0" y="384.7" width="21.2" height="24.0" rx="3.2" ry="3.2"/>
</g>
<g fill="rgb(233,198,84)">
<rect x="1831.0" y="410.2" width="6.5" height="24.0" rx="3.2" ry="3.2"/>
</g>
<g fill="rgb(217,156,65)">
<rect x="1833.5" y="410.2" width="3.0" height="24.0" rx="1.5" ry="3.2"/>
</g>
<g fill="rgb(233,198,84)">
<rect x="1840.7" y="410.2" width="21.8" height="24.0" rx="3.2" ry="3.2"/>
</g>
<g fill="rgb(217,156,65)">
<rect x="1863.0" y="410.2" width="21.3" height="24.0" rx="3.2" ry="3.2"/>
</g>
<g fill="rgb(233,198,84)">
<rect x="1831.0" y="435.8" width="6.5" height="24.0" rx="3.2" ry="3.2"/>
</g>
<g fill="rgb(196,86,42)">
<rect x="1840.7" y="435.8" width="21.8" height="24.0" rx="3.2" ry="3.2"/>
</g>
<g fill="rgb(233,198,84)">
<rect x="1863.0" y="435.8" width="21.4" height="24.0" rx="3.2" ry="3.2"/>
<rect x="1831.0" y="461.3" width="6.5" height="24.0" rx="3.2" ry="3.2"/>
<rect x="1840.7" y="461.3" width="21.8" height="24.0" rx="3.2" ry="3.2"/>
<rect x="1863.0" y="461.3" width="21.5" height="24.0" rx="3.2" ry="3.2"/>
<rect x="1831.0" y="486.9" width="6.5" height="24.0" rx="3.2" ry="3.2"/>
</g>
<g fill="rgb(196,86,42)">
<rect x="1833.5" y="486.9" width="3.0" height="24.0" rx="1.5" ry="3.2"/>
</g>
<g fill="rgb(233,198,84)">
<rect x="1840.7" y="486.9" width="21.8" height="24.0" rx="3.2" ry="3.2"/>
</g>
<g fill="rgb(196,86,42)">
<rect x="1863.0" y="486.9" width="21.7" height="24.0" rx="3.2" ry="3.2"/>
</g>
<g fill="rgb(233,198,84)">
<rect x="1831.0" y="512.4" width="6.5" height="24.0" rx="3.2" ry="3.2"/>
</g>
<g fill="rgb(177,41,27)">
<rect x="1840.7" y="512.4" width="21.8" height="24.0" rx="3.2" ry="3.2"/>
</g>
<g fill="rgb(233,198,84)">
<rect x="1863.0" y="512.4" width="21.8" height="24.0" rx="3.2" ry="3.2"/>
<rect x="1831.0" y="537.9" width="6.5" height="24.0" rx="3.2" ry="3.2"/>
</g>
<g fill="rgb(196,86,42)">
<rect x="1840.7" y="537.9" width="21.8" height="24.0" rx="3.2" ry="3.2"/>
</g>
<g fill="rgb(233,198,84)">
<rect x="1863.0" y="537.9" width="21.9" height="24.0" rx="3.2" ry="3.2"/>
<rect x="1831.0" y="563.5" width="6.5" height="24.0" rx="3.2" ry="3.2"/>
</g>
<g fill="rgb(177,41,27)">
<rect x="1833.5" y="563.5" width="3.0" height="24.0" rx="1.5" ry="3.2"/>
</g>
<g fill="rgb(217,156,65)">
<rect x="1840.7" y="563.5" width="21.8" height="24.0" rx="3.2" ry="3.2"/>
</g>
<g fill="rgb(177,41,27)">
<rect x="1863.0" y="563.5" width="22.0" height="24.0" rx="3.2" ry="3.2"/>
</g>
<g fill="rgb(233,198,84)">
<rect x="1831.0" y="589.0" width="7.7" height="24.0" rx="3.2" ry="3.2"/>
<rect x="1841.0" y="589.0" width="44.0" height="24.0" rx="3.2" ry="3.2"/>
<rect x="1830.9" y="614.6" width="7.9" height="24.0" rx="3.2" ry="3.2"/>
<rect x="1840.9" y="614.6" width="44.5" height="24.0" rx="3.2" ry="3.2"/>
</g>
<g fill="rgb(196,86,42)">
<rect x="1830.9" y="640.1" width="8.1" height="24.0" rx="3.2" ry="3.2"/>
<rect x="1840.9" y="640.1" width="45.0" height="24.0" rx="3.2" ry="3.2"/>
</g>
<g fill="rgb(233,198,84)">
<rect x="1830.8" y="665.6" width="8.3" height="24.0" rx="3.2" ry="3.2"/>
<rect x="1840.8" y="665.6" width="45.5" height="24.0" rx="3.2" ry="3.2"/>
<rect x="1830.8" y="691.2" width="8.5" height="24.0" rx="3.2" ry="3.2"/>
</g>
<g fill="rgb(236,207,90)">
<rect x="1840.8" y="691.2" width="46.0" height="24.0" rx="3.2" ry="3.2"/>
</g>
<g fill="rgb(177,41,27)">
<rect x="1830.7" y="716.7" width="8.7" height="24.0" rx="3.2" ry="3.2"/>
<rect x="1840.7" y="716.7" width="46.5" height="24.0" rx="3.2" ry="3.2"/>
</g>
<g fill="rgb(196,86,42)">
<rect x="1830.7" y="742.2" width="8.9" height="24.0" rx="3.2" ry="3.2"/>
<rect x="1840.7" y="742.2" width="47.0" height="24.0" rx="3.2" ry="3.2"/>
</g>
<g fill="rgb(217,156,65)">
<rect x="1830.6" y="767.8" width="9.1" height="24.0" rx="3.2" ry="3.2"/>
<rect x="1840.6" y="767.8" width="47.5" height="24.0" rx="3.2" ry="3.2"/>
</g>
<g fill="rgb(233,198,84)">
<rect x="1830.6" y="793.3" width="9.3" height="24.0" rx="3.2" ry="3.2"/>
<rect x="1840.6" y="793.3" width="48.0" height="24.0" rx="3.2" ry="3.2"/>
<rect x="1830.5" y="818.9" width="9.5" height="24.0" rx="3.2" ry="3.2"/>
<rect x="1840.5" y="818.9" width="48.5" height="24.0" rx="3.2" ry="3.2"/>
</g>
<g fill="rgb(196,86,42)">
<rect x="1830.5" y="844.4" width="9.5" height="24.0" rx="3.2" ry="3.2"/>
<rect x="1840.5" y="844.4" width="48.5" height="24.0" rx="3.2" ry="3.2"/>
</g>
<g fill="rgb(233,198,84)">
<rect x="1830.5" y="869.9" width="9.5" height="24.0" rx="3.2" ry="3.2"/>
<rect x="1840.5" y="869.9" width="48.5" height="24.0" rx="3.2" ry="3.2"/>
<rect x="1830.5" y="895.5" width="9.5" height="24.0" rx="3.2" ry="3.2"/>
</g>
<g fill="rgb(236,207,90)">
<rect x="1840.5" y="895.5" width="48.5" height="24.0" rx="3.2" ry="3.2"/>
</g>
<g fill="rgb(177,41,27)">
<rect x="1830.5" y="921.0" width="9.5" height="24.0" rx="3.2" ry="3.2"/>
<rect x="1840.5" y="921.0" width="48.5" height="24.0" rx="3.2" ry="3.2"/>
</g>
<g fill="rgb(233,198,84)">
<rect x="1830.5" y="946.5" width="9.5" height="24.0" rx="3.2" ry="3.2"/>
<rect x="1840.5" y="946.5" width="48.5" height="24.0" rx="3.2" ry="3.2"/>
<rect x="1830.5" y="972.1" width="9.5" height="24.0" rx="3.2" ry="3.2"/>
<rect x="1840.5" y="972.1" width="48.5" height="24.0" rx="3.2" ry="3.2"/>
<rect x="1830.5" y="997.6" width="9.5" height="24.0" rx="3.2" ry="3.2"/>
<rect x="1840.5" y="997.6" width="48.5" height="24.0" rx="3.2" ry="3.2"/>
</g>
<g fill="rgb(188,64,36)">
<rect x="1830.5" y="1023.2" width="9.5" height="24.0" rx="3.2" ry="3.2"/>
<rect x="1840.5" y="1023.2" width="48.5" height="24.0" rx="3.2" ry="3.2"/>
</g>
<g fill="rgb(233,198,84)">
<rect x="1830.5" y="1048.7" width="9.5" height="24.0" rx="3.2" ry="3.2"/>
<rect x="1840.5" y="1048.7" width="48.5" height="24.0" rx="3.2" ry="3.2"/>
</g>
<g fill="rgb(208,124,54)">
<rect x="1830.5" y="1074.2" width="9.5" height="24.0" rx="3.2" ry="3.2"/>
<rect x="1840.5" y="1074.2" width="48.5" height="24.0" rx="3.2" ry="3.2"/>
</g>
<g fill="rgb(188,64,36)">
<rect x="1830.5" y="1099.8" width="9.5" height="24.0" rx="3.2" ry="3.2"/>
<rect x="1840.5" y="1099.8" width="48.5" height="24.0" rx="3.2" ry="3.2"/>
</g>
<g fill="rgb(233,198,84)">
<rect x="1743.0" y="844.4" width="3.0" height="24.0" rx="1.5" ry="3.2"/>
</g>
<g fill="rgb(217,156,65)">
<rect x="1747.0" y="844.4" width="8.0" height="24.0" rx="3.2" ry="3.2"/>
</g>
<g fill="rgb(196,86,42)">
<rect x="1756.0" y="844.4" width="3.5" height="24.0" rx="1.8" ry="3.2"/>
<rect x="1745.5" y="818.9" width="14.0" height="24.0" rx="3.2" ry="3.2"/>
</g>
<g fill="rgb(233,198,84)">
<rect x="1745.0" y="793.3" width="7.0" height="24.0" rx="3.2" ry="3.2"/>
</g>
<g fill="rgb(217,156,65)">
<rect x="1753.0" y="793.3" width="3.0" height="24.0" rx="1.5" ry="3.2"/>
</g>
<g fill="rgb(233,198,84)">
<rect x="1745.0" y="767.8" width="3.0" height="24.0" rx="1.5" ry="3.2"/>
<rect x="1748.5" y="767.8" width="6.5" height="24.0" rx="3.2" ry="3.2"/>
<rect x="1745.0" y="742.2" width="3.0" height="24.0" rx="1.5" ry="3.2"/>
</g>
<g fill="rgb(196,86,42)">
<rect x="1749.0" y="742.2" width="2.0" height="24.0" rx="1.0" ry="3.2"/>
</g>
<g fill="rgb(233,198,84)">
<rect x="1752.0" y="742.2" width="3.0" height="24.0" rx="1.5" ry="3.2"/>
<rect x="1744.5" y="716.7" width="1.5" height="24.0" rx="0.8" ry="3.2"/>
</g>
<g fill="rgb(196,86,42)">
<rect x="1748.0" y="716.7" width="2.0" height="24.0" rx="1.0" ry="3.2"/>
</g>
<g fill="rgb(233,198,84)">
<rect x="1753.0" y="716.7" width="2.0" height="24.0" rx="1.0" ry="3.2"/>
<rect x="1742.5" y="869.9" width="18.0" height="24.0" rx="3.2" ry="3.2"/>
</g>
<g fill="rgb(177,41,27)">
<rect x="1742.5" y="895.5" width="18.0" height="24.0" rx="3.2" ry="3.2"/>
<rect x="1742.5" y="921.0" width="18.0" height="24.0" rx="3.2" ry="3.2"/>
</g>
<g fill="rgb(233,198,84)">
<rect x="1742.5" y="946.5" width="18.0" height="24.0" rx="3.2" ry="3.2"/>
<rect x="1742.5" y="972.1" width="18.0" height="24.0" rx="3.2" ry="3.2"/>
<rect x="1742.5" y="997.6" width="18.0" height="24.0" rx="3.2" ry="3.2"/>
</g>
<g fill="rgb(188,64,36)">
<rect x="1742.5" y="1023.2" width="18.0" height="24.0" rx="3.2" ry="3.2"/>
</g>
<g fill="rgb(233,198,84)">
<rect x="1742.5" y="1048.7" width="18.0" height="24.0" rx="3.2" ry="3.2"/>
</g>
<g fill="rgb(208,124,54)">
<rect x="1741.0" y="1074.2" width="19.5" height="24.0" rx="3.2" ry="3.2"/>
</g>
<g fill="rgb(177,41,27)">
<rect x="1743.0" y="1099.8" width="17.5" height="24.0" rx="3.2" ry="3.2"/>
<rect x="1389.0" y="461.3" width="1.3" height="24.0" rx="0.6" ry="3.2"/>
</g>
<g fill="rgb(196,86,42)">
<rect x="1389.0" y="486.9" width="1.3" height="24.0" rx="0.6" ry="3.2"/>
</g>
<g fill="rgb(177,41,27)">
<rect x="1389.0" y="512.4" width="1.3" height="24.0" rx="0.6" ry="3.2"/>
<rect x="1389.0" y="537.9" width="1.3" height="24.0" rx="0.6" ry="3.2"/>
</g>
<g fill="rgb(196,86,42)">
<rect x="1389.0" y="563.5" width="1.3" height="24.0" rx="0.6" ry="3.2"/>
<rect x="1389.0" y="589.0" width="1.3" height="24.0" rx="0.6" ry="3.2"/>
</g>
<g fill="rgb(177,41,27)">
<rect x="1389.0" y="614.6" width="1.3" height="24.0" rx="0.6" ry="3.2"/>
<rect x="1389.0" y="640.1" width="1.3" height="24.0" rx="0.6" ry="3.2"/>
</g>
<g fill="rgb(196,86,42)">
<rect x="1389.0" y="665.6" width="1.3" height="24.0" rx="0.6" ry="3.2"/>
</g>
<g fill="rgb(177,41,27)">
<rect x="1389.0" y="691.2" width="1.3" height="24.0" rx="0.6" ry="3.2"/>
</g>
<g fill="rgb(196,86,42)">
<rect x="1389.0" y="716.7" width="1.3" height="24.0" rx="0.6" ry="3.2"/>
<rect x="1389.0" y="742.2" width="1.3" height="24.0" rx="0.6" ry="3.2"/>
</g>
<g fill="rgb(177,41,27)">
<rect x="1389.0" y="767.8" width="1.3" height="24.0" rx="0.6" ry="3.2"/>
<rect x="1389.0" y="793.3" width="1.3" height="24.0" rx="0.6" ry="3.2"/>
<rect x="1389.0" y="818.9" width="1.3" height="24.0" rx="0.6" ry="3.2"/>
<rect x="1389.0" y="844.4" width="1.3" height="24.0" rx="0.6" ry="3.2"/>
<rect x="1389.0" y="869.9" width="1.3" height="24.0" rx="0.6" ry="3.2"/>
<rect x="1389.0" y="895.5" width="1.3" height="24.0" rx="0.6" ry="3.2"/>
</g>
<g fill="rgb(196,86,42)">
<rect x="1389.0" y="921.0" width="1.3" height="24.0" rx="0.6" ry="3.2"/>
<rect x="1389.0" y="946.5" width="1.3" height="24.0" rx="0.6" ry="3.2"/>
<rect x="1389.0" y="972.1" width="1.3" height="24.0" rx="0.6" ry="3.2"/>
</g>
<g fill="rgb(177,41,27)">
<rect x="1389.0" y="997.6" width="1.3" height="24.0" rx="0.6" ry="3.2"/>
</g>
<g fill="rgb(196,86,42)">
<rect x="1389.0" y="1023.2" width="1.3" height="24.0" rx="0.6" ry="3.2"/>
</g>
<g fill="rgb(233,198,84)">
<rect x="1385.0" y="895.5" width="1.3" height="24.0" rx="0.6" ry="3.2"/>
<rect x="1385.0" y="921.0" width="1.3" height="24.0" rx="0.6" ry="3.2"/>
</g>
<g fill="rgb(196,86,42)">
<rect x="1385.0" y="946.5" width="1.3" height="24.0" rx="0.6" ry="3.2"/>
<rect x="1385.0" y="972.1" width="1.3" height="24.0" rx="0.6" ry="3.2"/>
<rect x="1385.0" y="997.6" width="1.3" height="24.0" rx="0.6" ry="3.2"/>
<rect x="1385.0" y="1023.2" width="1.3" height="24.0" rx="0.6" ry="3.2"/>
</g>
<g fill="rgb(177,41,27)">
<rect x="1385.0" y="1048.7" width="1.3" height="24.0" rx="0.6" ry="3.2"/>
</g>
<g fill="rgb(233,198,84)">
<rect x="1438.2" y="742.2" width="1.6" height="24.0" rx="0.8" ry="3.2"/>
<rect x="1438.2" y="767.8" width="1.6" height="24.0" rx="0.8" ry="3.2"/>
</g>
<g fill="rgb(177,41,27)">
<rect x="1438.2" y="793.3" width="1.6" height="24.0" rx="0.8" ry="3.2"/>
<rect x="1438.2" y="818.9" width="1.6" height="24.0" rx="0.8" ry="3.2"/>
</g>
<g fill="rgb(233,198,84)">
<rect x="1438.2" y="844.4" width="1.6" height="24.0" rx="0.8" ry="3.2"/>
</g>
<g fill="rgb(177,41,27)">
<rect x="1438.2" y="869.9" width="1.6" height="24.0" rx="0.8" ry="3.2"/>
</g>
<g fill="rgb(196,86,42)">
<rect x="1438.2" y="895.5" width="1.6" height="24.0" rx="0.8" ry="3.2"/>
</g>
<g fill="rgb(233,198,84)">
<rect x="1438.2" y="921.0" width="1.6" height="24.0" rx="0.8" ry="3.2"/>
</g>
<g fill="rgb(177,41,27)">
<rect x="1438.2" y="946.5" width="1.6" height="24.0" rx="0.8" ry="3.2"/>
</g>
<g fill="rgb(233,198,84)">
<rect x="1438.2" y="972.1" width="1.6" height="24.0" rx="0.8" ry="3.2"/>
</g>
<g fill="rgb(196,86,42)">
<rect x="1438.2" y="997.6" width="1.6" height="24.0" rx="0.8" ry="3.2"/>
</g>
<g fill="rgb(177,41,27)">
<rect x="1438.2" y="1023.2" width="1.6" height="24.0" rx="0.8" ry="3.2"/>
</g>
<g fill="rgb(233,198,84)">
<rect x="1438.2" y="1048.7" width="1.6" height="24.0" rx="0.8" ry="3.2"/>
</g>
<g fill="rgb(196,86,42)">
<rect x="1474.5" y="793.3" width="1.3" height="24.0" rx="0.6" ry="3.2"/>
<rect x="1474.5" y="818.9" width="1.3" height="24.0" rx="0.6" ry="3.2"/>
<rect x="1474.5" y="844.4" width="1.3" height="24.0" rx="0.6" ry="3.2"/>
<rect x="1474.5" y="869.9" width="1.3" height="24.0" rx="0.6" ry="3.2"/>
<rect x="1474.5" y="895.5" width="1.3" height="24.0" rx="0.6" ry="3.2"/>
<rect x="1474.5" y="921.0" width="1.3" height="24.0" rx="0.6" ry="3.2"/>
<rect x="1474.5" y="946.5" width="1.3" height="24.0" rx="0.6" ry="3.2"/>
</g>
<g fill="rgb(233,198,84)">
<rect x="1474.5" y="972.1" width="1.3" height="24.0" rx="0.6" ry="3.2"/>
<rect x="1474.5" y="997.6" width="1.3" height="24.0" rx="0.6" ry="3.2"/>
<rect x="1474.5" y="1023.2" width="1.3" height="24.0" rx="0.6" ry="3.2"/>
</g>
<g fill="rgb(196,86,42)">
<rect x="1474.5" y="1048.7" width="1.3" height="24.0" rx="0.6" ry="3.2"/>
<rect x="1522.5" y="614.6" width="1.6" height="24.0" rx="0.8" ry="3.2"/>
</g>
<g fill="rgb(177,41,27)">
<rect x="1522.5" y="640.1" width="1.6" height="24.0" rx="0.8" ry="3.2"/>
</g>
<g fill="rgb(196,86,42)">
<rect x="1522.5" y="665.6" width="1.6" height="24.0" rx="0.8" ry="3.2"/>
</g>
<g fill="rgb(177,41,27)">
<rect x="1522.5" y="691.2" width="1.6" height="24.0" rx="0.8" ry="3.2"/>
<rect x="1522.5" y="716.7" width="1.6" height="24.0" rx="0.8" ry="3.2"/>
<rect x="1522.5" y="742.2" width="1.6" height="24.0" rx="0.8" ry="3.2"/>
</g>
<g fill="rgb(196,86,42)">
<rect x="1522.5" y="767.8" width="1.6" height="24.0" rx="0.8" ry="3.2"/>
</g>
<g fill="rgb(177,41,27)">
<rect x="1522.5" y="793.3" width="1.6" height="24.0" rx="0.8" ry="3.2"/>
<rect x="1522.5" y="818.9" width="1.6" height="24.0" rx="0.8" ry="3.2"/>
</g>
<g fill="rgb(196,86,42)">
<rect x="1522.5" y="844.4" width="1.6" height="24.0" rx="0.8" ry="3.2"/>
</g>
<g fill="rgb(177,41,27)">
<rect x="1522.5" y="869.9" width="1.6" height="24.0" rx="0.8" ry="3.2"/>
<rect x="1522.5" y="895.5" width="1.6" height="24.0" rx="0.8" ry="3.2"/>
</g>
<g fill="rgb(196,86,42)">
<rect x="1522.5" y="921.0" width="1.6" height="24.0" rx="0.8" ry="3.2"/>
</g>
<g fill="rgb(177,41,27)">
<rect x="1522.5" y="946.5" width="1.6" height="24.0" rx="0.8" ry="3.2"/>
</g>
<g fill="rgb(196,86,42)">
<rect x="1522.5" y="972.1" width="1.6" height="24.0" rx="0.8" ry="3.2"/>
</g>
<g fill="rgb(177,41,27)">
<rect x="1522.5" y="997.6" width="1.6" height="24.0" rx="0.8" ry="3.2"/>
<rect x="1522.5" y="1023.2" width="1.6" height="24.0" rx="0.8" ry="3.2"/>
<rect x="1522.5" y="1048.7" width="1.6" height="24.0" rx="0.8" ry="3.2"/>
</g>
<g fill="rgb(196,86,42)">
<rect x="1558.8" y="844.4" width="1.5" height="24.0" rx="0.8" ry="3.2"/>
</g>
<g fill="rgb(177,41,27)">
<rect x="1558.8" y="869.9" width="1.5" height="24.0" rx="0.8" ry="3.2"/>
<rect x="1558.8" y="895.5" width="1.5" height="24.0" rx="0.8" ry="3.2"/>
<rect x="1558.8" y="921.0" width="1.5" height="24.0" rx="0.8" ry="3.2"/>
</g>
<g fill="rgb(196,86,42)">
<rect x="1558.8" y="946.5" width="1.5" height="24.0" rx="0.8" ry="3.2"/>
</g>
<g fill="rgb(177,41,27)">
<rect x="1558.8" y="972.1" width="1.5" height="24.0" rx="0.8" ry="3.2"/>
</g>
<g fill="rgb(196,86,42)">
<rect x="1558.8" y="997.6" width="1.5" height="24.0" rx="0.8" ry="3.2"/>
<rect x="1558.8" y="1023.2" width="1.5" height="24.0" rx="0.8" ry="3.2"/>
</g>
<g fill="rgb(177,41,27)">
<rect x="1558.8" y="1048.7" width="1.5" height="24.0" rx="0.8" ry="3.2"/>
</g>
<g fill="rgb(196,86,42)">
<rect x="1628.8" y="410.2" width="1.6" height="24.0" rx="0.8" ry="3.2"/>
<rect x="1628.8" y="435.8" width="1.6" height="24.0" rx="0.8" ry="3.2"/>
</g>
<g fill="rgb(233,198,84)">
<rect x="1628.8" y="461.3" width="1.6" height="24.0" rx="0.8" ry="3.2"/>
<rect x="1628.8" y="486.9" width="1.6" height="24.0" rx="0.8" ry="3.2"/>
</g>
<g fill="rgb(196,86,42)">
<rect x="1628.8" y="512.4" width="1.6" height="24.0" rx="0.8" ry="3.2"/>
</g>
<g fill="rgb(233,198,84)">
<rect x="1628.8" y="537.9" width="1.6" height="24.0" rx="0.8" ry="3.2"/>
<rect x="1628.8" y="563.5" width="1.6" height="24.0" rx="0.8" ry="3.2"/>
<rect x="1628.8" y="589.0" width="1.6" height="24.0" rx="0.8" ry="3.2"/>
<rect x="1628.8" y="614.6" width="1.6" height="24.0" rx="0.8" ry="3.2"/>
</g>
<g fill="rgb(196,86,42)">
<rect x="1628.8" y="640.1" width="1.6" height="24.0" rx="0.8" ry="3.2"/>
</g>
<g fill="rgb(233,198,84)">
<rect x="1628.8" y="665.6" width="1.6" height="24.0" rx="0.8" ry="3.2"/>
</g>
<g fill="rgb(177,41,27)">
<rect x="1628.8" y="691.2" width="1.6" height="24.0" rx="0.8" ry="3.2"/>
<rect x="1628.8" y="716.7" width="1.6" height="24.0" rx="0.8" ry="3.2"/>
</g>
<g fill="rgb(196,86,42)">
<rect x="1628.8" y="742.2" width="1.6" height="24.0" rx="0.8" ry="3.2"/>
</g>
<g fill="rgb(177,41,27)">
<rect x="1628.8" y="767.8" width="1.6" height="24.0" rx="0.8" ry="3.2"/>
<rect x="1628.8" y="793.3" width="1.6" height="24.0" rx="0.8" ry="3.2"/>
</g>
<g fill="rgb(196,86,42)">
<rect x="1628.8" y="818.9" width="1.6" height="24.0" rx="0.8" ry="3.2"/>
</g>
<g fill="rgb(233,198,84)">
<rect x="1628.8" y="844.4" width="1.6" height="24.0" rx="0.8" ry="3.2"/>
</g>
<g fill="rgb(196,86,42)">
<rect x="1628.8" y="869.9" width="1.6" height="24.0" rx="0.8" ry="3.2"/>
</g>
<g fill="rgb(233,198,84)">
<rect x="1628.8" y="895.5" width="1.6" height="24.0" rx="0.8" ry="3.2"/>
<rect x="1628.8" y="921.0" width="1.6" height="24.0" rx="0.8" ry="3.2"/>
</g>
<g fill="rgb(196,86,42)">
<rect x="1628.8" y="946.5" width="1.6" height="24.0" rx="0.8" ry="3.2"/>
<rect x="1628.8" y="972.1" width="1.6" height="24.0" rx="0.8" ry="3.2"/>
<rect x="1628.8" y="997.6" width="1.6" height="24.0" rx="0.8" ry="3.2"/>
</g>
<g fill="rgb(233,198,84)">
<rect x="1628.8" y="1023.2" width="1.6" height="24.0" rx="0.8" ry="3.2"/>
<rect x="1628.8" y="1048.7" width="1.6" height="24.0" rx="0.8" ry="3.2"/>
</g>
<g fill="rgb(177,41,27)">
<rect x="1644.0" y="793.3" width="1.4" height="24.0" rx="0.7" ry="3.2"/>
</g>
<g fill="rgb(196,86,42)">
<rect x="1644.0" y="818.9" width="1.4" height="24.0" rx="0.7" ry="3.2"/>
<rect x="1644.0" y="844.4" width="1.4" height="24.0" rx="0.7" ry="3.2"/>
</g>
<g fill="rgb(177,41,27)">
<rect x="1644.0" y="869.9" width="1.4" height="24.0" rx="0.7" ry="3.2"/>
</g>
<g fill="rgb(233,198,84)">
<rect x="1644.0" y="895.5" width="1.4" height="24.0" rx="0.7" ry="3.2"/>
</g>
<g fill="rgb(196,86,42)">
<rect x="1644.0" y="921.0" width="1.4" height="24.0" rx="0.7" ry="3.2"/>
</g>
<g fill="rgb(177,41,27)">
<rect x="1644.0" y="946.5" width="1.4" height="24.0" rx="0.7" ry="3.2"/>
</g>
<g fill="rgb(196,86,42)">
<rect x="1644.0" y="972.1" width="1.4" height="24.0" rx="0.7" ry="3.2"/>
</g>
<g fill="rgb(177,41,27)">
<rect x="1644.0" y="997.6" width="1.4" height="24.0" rx="0.7" ry="3.2"/>
</g>
<g fill="rgb(233,198,84)">
<rect x="1644.0" y="1023.2" width="1.4" height="24.0" rx="0.7" ry="3.2"/>
</g>
<g fill="rgb(196,86,42)">
<rect x="1644.0" y="1048.7" width="1.4" height="24.0" rx="0.7" ry="3.2"/>
<rect x="1681.0" y="844.4" width="1.5" height="24.0" rx="0.8" ry="3.2"/>
</g>
<g fill="rgb(177,41,27)">
<rect x="1681.0" y="869.9" width="1.5" height="24.0" rx="0.8" ry="3.2"/>
</g>
<g fill="rgb(196,86,42)">
<rect x="1681.0" y="895.5" width="1.5" height="24.0" rx="0.8" ry="3.2"/>
<rect x="1681.0" y="921.0" width="1.5" height="24.0" rx="0.8" ry="3.2"/>
</g>
<g fill="rgb(177,41,27)">
<rect x="1681.0" y="946.5" width="1.5" height="24.0" rx="0.8" ry="3.2"/>
<rect x="1681.0" y="972.1" width="1.5" height="24.0" rx="0.8" ry="3.2"/>
</g>
<g fill="rgb(196,86,42)">
<rect x="1681.0" y="997.6" width="1.5" height="24.0" rx="0.8" ry="3.2"/>
<rect x="1681.0" y="1023.2" width="1.5" height="24.0" rx="0.8" ry="3.2"/>
</g>
<g fill="rgb(177,41,27)">
<rect x="1681.0" y="1048.7" width="1.5" height="24.0" rx="0.8" ry="3.2"/>
</g>
<g fill="rgb(233,198,84)">
<rect x="1690.0" y="818.9" width="1.4" height="24.0" rx="0.7" ry="3.2"/>
<rect x="1690.0" y="844.4" width="1.4" height="24.0" rx="0.7" ry="3.2"/>
</g>
<g fill="rgb(177,41,27)">
<rect x="1690.0" y="869.9" width="1.4" height="24.0" rx="0.7" ry="3.2"/>
</g>
<g fill="rgb(233,198,84)">
<rect x="1690.0" y="895.5" width="1.4" height="24.0" rx="0.7" ry="3.2"/>
<rect x="1690.0" y="921.0" width="1.4" height="24.0" rx="0.7" ry="3.2"/>
<rect x="1690.0" y="946.5" width="1.4" height="24.0" rx="0.7" ry="3.2"/>
<rect x="1690.0" y="972.1" width="1.4" height="24.0" rx="0.7" ry="3.2"/>
</g>
<g fill="rgb(177,41,27)">
<rect x="1690.0" y="997.6" width="1.4" height="24.0" rx="0.7" ry="3.2"/>
<rect x="1690.0" y="1023.2" width="1.4" height="24.0" rx="0.7" ry="3.2"/>
</g>
<g fill="rgb(233,198,84)">
<rect x="1690.0" y="1048.7" width="1.4" height="24.0" rx="0.7" ry="3.2"/>
</g>
<g fill="rgb(196,86,42)">
<rect x="1714.0" y="818.9" width="1.5" height="24.0" rx="0.8" ry="3.2"/>
<rect x="1714.0" y="844.4" width="1.5" height="24.0" rx="0.8" ry="3.2"/>
<rect x="1714.0" y="869.9" width="1.5" height="24.0" rx="0.8" ry="3.2"/>
</g>
<g fill="rgb(177,41,27)">
<rect x="1714.0" y="895.5" width="1.5" height="24.0" rx="0.8" ry="3.2"/>
<rect x="1714.0" y="921.0" width="1.5" height="24.0" rx="0.8" ry="3.2"/>
<rect x="1714.0" y="946.5" width="1.5" height="24.0" rx="0.8" ry="3.2"/>
<rect x="1714.0" y="972.1" width="1.5" height="24.0" rx="0.8" ry="3.2"/>
<rect x="1714.0" y="997.6" width="1.5" height="24.0" rx="0.8" ry="3.2"/>
<rect x="1714.0" y="1023.2" width="1.5" height="24.0" rx="0.8" ry="3.2"/>
</g>
<g fill="rgb(196,86,42)">
<rect x="1714.0" y="1048.7" width="1.5" height="24.0" rx="0.8" ry="3.2"/>
</g>
<g fill="rgb(233,198,84)">
<rect x="1749.0" y="461.3" width="1.4" height="24.0" rx="0.7" ry="3.2"/>
</g>
<g fill="rgb(177,41,27)">
<rect x="1749.0" y="486.9" width="1.4" height="24.0" rx="0.7" ry="3.2"/>
</g>
<g fill="rgb(233,198,84)">
<rect x="1749.0" y="512.4" width="1.4" height="24.0" rx="0.7" ry="3.2"/>
</g>
<g fill="rgb(196,86,42)">
<rect x="1749.0" y="537.9" width="1.4" height="24.0" rx="0.7" ry="3.2"/>
</g>
<g fill="rgb(177,41,27)">
<rect x="1749.0" y="563.5" width="1.4" height="24.0" rx="0.7" ry="3.2"/>
</g>
<g fill="rgb(233,198,84)">
<rect x="1749.0" y="589.0" width="1.4" height="24.0" rx="0.7" ry="3.2"/>
</g>
<g fill="rgb(177,41,27)">
<rect x="1749.0" y="614.6" width="1.4" height="24.0" rx="0.7" ry="3.2"/>
</g>
<g fill="rgb(196,86,42)">
<rect x="1749.0" y="640.1" width="1.4" height="24.0" rx="0.7" ry="3.2"/>
</g>
<g fill="rgb(233,198,84)">
<rect x="1749.0" y="665.6" width="1.4" height="24.0" rx="0.7" ry="3.2"/>
</g>
<g fill="rgb(196,86,42)">
<rect x="1749.0" y="691.2" width="1.4" height="24.0" rx="0.7" ry="3.2"/>
</g>
<g fill="rgb(177,41,27)">
<rect x="1766.0" y="691.2" width="1.4" height="24.0" rx="0.7" ry="3.2"/>
</g>
<g fill="rgb(196,86,42)">
<rect x="1766.0" y="716.7" width="1.4" height="24.0" rx="0.7" ry="3.2"/>
</g>
<g fill="rgb(177,41,27)">
<rect x="1766.0" y="742.2" width="1.4" height="24.0" rx="0.7" ry="3.2"/>
<rect x="1766.0" y="767.8" width="1.4" height="24.0" rx="0.7" ry="3.2"/>
<rect x="1766.0" y="793.3" width="1.4" height="24.0" rx="0.7" ry="3.2"/>
<rect x="1766.0" y="818.9" width="1.4" height="24.0" rx="0.7" ry="3.2"/>
<rect x="1766.0" y="844.4" width="1.4" height="24.0" rx="0.7" ry="3.2"/>
</g>
<g fill="rgb(196,86,42)">
<rect x="1766.0" y="869.9" width="1.4" height="24.0" rx="0.7" ry="3.2"/>
<rect x="1766.0" y="895.5" width="1.4" height="24.0" rx="0.7" ry="3.2"/>
</g>
<g fill="rgb(177,41,27)">
<rect x="1766.0" y="921.0" width="1.4" height="24.0" rx="0.7" ry="3.2"/>
</g>
<g fill="rgb(196,86,42)">
<rect x="1766.0" y="946.5" width="1.4" height="24.0" rx="0.7" ry="3.2"/>
</g>
<g fill="rgb(177,41,27)">
<rect x="1766.0" y="972.1" width="1.4" height="24.0" rx="0.7" ry="3.2"/>
<rect x="1766.0" y="997.6" width="1.4" height="24.0" rx="0.7" ry="3.2"/>
<rect x="1766.0" y="1023.2" width="1.4" height="24.0" rx="0.7" ry="3.2"/>
<rect x="1766.0" y="1048.7" width="1.4" height="24.0" rx="0.7" ry="3.2"/>
<rect x="1779.3" y="767.8" width="1.4" height="24.0" rx="0.7" ry="3.2"/>
</g>
<g fill="rgb(233,198,84)">
<rect x="1779.3" y="793.3" width="1.4" height="24.0" rx="0.7" ry="3.2"/>
</g>
<g fill="rgb(196,86,42)">
<rect x="1779.3" y="818.9" width="1.4" height="24.0" rx="0.7" ry="3.2"/>
</g>
<g fill="rgb(177,41,27)">
<rect x="1779.3" y="844.4" width="1.4" height="24.0" rx="0.7" ry="3.2"/>
<rect x="1779.3" y="869.9" width="1.4" height="24.0" rx="0.7" ry="3.2"/>
</g>
<g fill="rgb(233,198,84)">
<rect x="1779.3" y="895.5" width="1.4" height="24.0" rx="0.7" ry="3.2"/>
<rect x="1779.3" y="921.0" width="1.4" height="24.0" rx="0.7" ry="3.2"/>
<rect x="1779.3" y="946.5" width="1.4" height="24.0" rx="0.7" ry="3.2"/>
</g>
<g fill="rgb(177,41,27)">
<rect x="1779.3" y="972.1" width="1.4" height="24.0" rx="0.7" ry="3.2"/>
</g>
<g fill="rgb(233,198,84)">
<rect x="1779.3" y="997.6" width="1.4" height="24.0" rx="0.7" ry="3.2"/>
<rect x="1779.3" y="1023.2" width="1.4" height="24.0" rx="0.7" ry="3.2"/>
</g>
<g fill="rgb(177,41,27)">
<rect x="1779.3" y="1048.7" width="1.4" height="24.0" rx="0.7" ry="3.2"/>
</g>
<g fill="rgb(217,156,65)">
<rect x="1610.0" y="972.1" width="3.0" height="24.0" rx="1.5" ry="3.2"/>
</g>
<g fill="rgb(177,41,27)">
<rect x="1610.0" y="997.6" width="3.0" height="24.0" rx="1.5" ry="3.2"/>
</g>
<g fill="rgb(217,156,65)">
<rect x="1610.0" y="1023.2" width="3.0" height="24.0" rx="1.5" ry="3.2"/>
<rect x="1610.0" y="1048.7" width="3.0" height="24.0" rx="1.5" ry="3.2"/>
</g>
<g fill="rgb(196,86,42)">
<rect x="1479.0" y="1099.8" width="29.0" height="24.0" rx="3.2" ry="3.2"/>
</g>
<g fill="rgb(208,124,54)">
<rect x="1508.5" y="1099.8" width="2.1" height="24.0" rx="1.0" ry="3.2"/>
<rect x="1510.6" y="1099.8" width="4.4" height="24.0" rx="2.2" ry="3.2"/>
</g>
<g fill="rgb(177,41,27)">
<rect x="1515.0" y="1099.8" width="2.3" height="24.0" rx="1.1" ry="3.2"/>
</g>
<g fill="rgb(233,198,84)">
<rect x="1517.3" y="1099.8" width="2.0" height="24.0" rx="1.0" ry="3.2"/>
</g>
<g fill="rgb(217,156,65)">
<rect x="1519.2" y="1099.8" width="2.2" height="24.0" rx="1.1" ry="3.2"/>
</g>
<g fill="rgb(233,198,84)">
<rect x="1521.5" y="1099.8" width="1.4" height="24.0" rx="0.7" ry="3.2"/>
</g>
<g fill="rgb(208,124,54)">
<rect x="1522.9" y="1099.8" width="2.6" height="24.0" rx="1.3" ry="3.2"/>
</g>
<g fill="rgb(228,180,75)">
<rect x="1525.5" y="1099.8" width="1.7" height="24.0" rx="0.8" ry="3.2"/>
</g>
<g fill="rgb(177,41,27)">
<rect x="1527.2" y="1099.8" width="4.6" height="24.0" rx="2.3" ry="3.2"/>
</g>
<g fill="rgb(196,86,42)">
<rect x="1531.8" y="1099.8" width="2.2" height="24.0" rx="1.1" ry="3.2"/>
</g>
<g fill="rgb(217,156,65)">
<rect x="1534.0" y="1099.8" width="15.0" height="24.0" rx="3.2" ry="3.2"/>
</g>
<g fill="rgb(233,198,84)">
<rect x="1549.5" y="1099.8" width="4.0" height="24.0" rx="2.0" ry="3.2"/>
<rect x="1553.5" y="1099.8" width="1.4" height="24.0" rx="0.7" ry="3.2"/>
</g>
<g fill="rgb(196,86,42)">
<rect x="1554.9" y="1099.8" width="5.6" height="24.0" rx="2.8" ry="3.2"/>
</g>
<g fill="rgb(233,198,84)">
<rect x="1560.4" y="1099.8" width="5.8" height="24.0" rx="2.9" ry="3.2"/>
</g>
<g fill="rgb(217,156,65)">
<rect x="1566.3" y="1099.8" width="4.3" height="24.0" rx="2.1" ry="3.2"/>
</g>
<g fill="rgb(243,224,100)">
<rect x="1570.5" y="1099.8" width="4.7" height="24.0" rx="2.4" ry="3.2"/>
</g>
<g fill="rgb(233,198,84)">
<rect x="1575.2" y="1099.8" width="6.0" height="24.0" rx="3.0" ry="3.2"/>
</g>
<g fill="rgb(196,86,42)">
<rect x="1581.2" y="1099.8" width="3.8" height="24.0" rx="1.9" ry="3.2"/>
<rect x="1585.0" y="1099.8" width="5.5" height="24.0" rx="2.8" ry="3.2"/>
<rect x="1590.6" y="1099.8" width="4.4" height="24.0" rx="2.2" ry="3.2"/>
</g>
<g fill="rgb(177,41,27)">
<rect x="1595.0" y="1099.8" width="9.0" height="24.0" rx="3.2" ry="3.2"/>
</g>
<g fill="rgb(228,180,75)">
<rect x="1604.5" y="1099.8" width="6.5" height="24.0" rx="3.2" ry="3.2"/>
</g>
<g fill="rgb(177,41,27)">
<rect x="1611.0" y="1099.8" width="5.2" height="24.0" rx="2.6" ry="3.2"/>
</g>
<g fill="rgb(228,180,75)">
<rect x="1616.2" y="1099.8" width="6.3" height="24.0" rx="3.1" ry="3.2"/>
</g>
<g fill="rgb(188,64,36)">
<rect x="1622.4" y="1099.8" width="5.8" height="24.0" rx="2.9" ry="3.2"/>
</g>
<g fill="rgb(208,124,54)">
<rect x="1628.2" y="1099.8" width="4.5" height="24.0" rx="2.3" ry="3.2"/>
<rect x="1632.7" y="1099.8" width="3.4" height="24.0" rx="1.7" ry="3.2"/>
</g>
<g fill="rgb(233,198,84)">
<rect x="1636.2" y="1099.8" width="4.7" height="24.0" rx="2.4" ry="3.2"/>
</g>
<g fill="rgb(177,41,27)">
<rect x="1640.9" y="1099.8" width="4.9" height="24.0" rx="2.5" ry="3.2"/>
</g>
<g fill="rgb(196,86,42)">
<rect x="1645.8" y="1099.8" width="6.3" height="24.0" rx="3.2" ry="3.2"/>
<rect x="1652.1" y="1099.8" width="3.5" height="24.0" rx="1.7" ry="3.2"/>
</g>
<g fill="rgb(217,156,65)">
<rect x="1655.6" y="1099.8" width="1.4" height="24.0" rx="0.7" ry="3.2"/>
</g>
<g fill="rgb(196,86,42)">
<rect x="1657.0" y="1099.8" width="8.0" height="24.0" rx="3.2" ry="3.2"/>
</g>
<g fill="rgb(233,198,84)">
<rect x="1665.5" y="1099.8" width="6.1" height="24.0" rx="3.1" ry="3.2"/>
<rect x="1671.6" y="1099.8" width="5.6" height="24.0" rx="2.8" ry="3.2"/>
</g>
<g fill="rgb(243,224,100)">
<rect x="1677.2" y="1099.8" width="4.8" height="24.0" rx="2.4" ry="3.2"/>
<rect x="1682.0" y="1099.8" width="2.8" height="24.0" rx="1.4" ry="3.2"/>
<rect x="1684.8" y="1099.8" width="4.2" height="24.0" rx="2.1" ry="3.2"/>
</g>
<g fill="rgb(233,198,84)">
<rect x="1689.0" y="1099.8" width="6.6" height="24.0" rx="3.2" ry="3.2"/>
<rect x="1695.6" y="1099.8" width="1.6" height="24.0" rx="0.8" ry="3.2"/>
<rect x="1697.2" y="1099.8" width="5.2" height="24.0" rx="2.6" ry="3.2"/>
</g>
<g fill="rgb(196,86,42)">
<rect x="1702.4" y="1099.8" width="2.4" height="24.0" rx="1.2" ry="3.2"/>
</g>
<g fill="rgb(243,224,100)">
<rect x="1704.8" y="1099.8" width="5.1" height="24.0" rx="2.6" ry="3.2"/>
<rect x="1710.5" y="1099.8" width="5.5" height="24.0" rx="2.7" ry="3.2"/>
</g>
<g fill="rgb(233,198,84)">
<rect x="1716.0" y="1099.8" width="4.4" height="24.0" rx="2.2" ry="3.2"/>
</g>
<g fill="rgb(196,86,42)">
<rect x="1720.4" y="1099.8" width="3.3" height="24.0" rx="1.6" ry="3.2"/>
</g>
<g fill="rgb(177,41,27)">
<rect x="1723.6" y="1099.8" width="5.6" height="24.0" rx="2.8" ry="3.2"/>
</g>
<g fill="rgb(208,124,54)">
<rect x="1729.2" y="1099.8" width="3.0" height="24.0" rx="1.5" ry="3.2"/>
</g>
<g fill="rgb(233,198,84)">
<rect x="1732.3" y="1099.8" width="2.7" height="24.0" rx="1.4" ry="3.2"/>
</g>
<g fill="rgb(188,64,36)">
<rect x="1735.0" y="1099.8" width="3.6" height="24.0" rx="1.8" ry="3.2"/>
</g>
<g fill="rgb(196,86,42)">
<rect x="1738.6" y="1099.8" width="3.9" height="24.0" rx="2.0" ry="3.2"/>
</g>
<g fill="rgb(243,224,100)">
<rect x="1761.0" y="1099.8" width="5.8" height="24.0" rx="2.9" ry="3.2"/>
</g>
<g fill="rgb(217,156,65)">
<rect x="1766.8" y="1099.8" width="2.0" height="24.0" rx="1.0" ry="3.2"/>
</g>
<g fill="rgb(233,198,84)">
<rect x="1768.8" y="1099.8" width="2.5" height="24.0" rx="1.3" ry="3.2"/>
</g>
<g fill="rgb(208,124,54)">
<rect x="1771.3" y="1099.8" width="3.2" height="24.0" rx="1.6" ry="3.2"/>
</g>
<g fill="rgb(243,224,100)">
<rect x="1774.5" y="1099.8" width="3.6" height="24.0" rx="1.8" ry="3.2"/>
</g>
<g fill="rgb(177,41,27)">
<rect x="1778.1" y="1099.8" width="5.2" height="24.0" rx="2.6" ry="3.2"/>
</g>
<g fill="rgb(233,198,84)">
<rect x="1783.3" y="1099.8" width="3.4" height="24.0" rx="1.7" ry="3.2"/>
</g>
<g fill="rgb(188,64,36)">
<rect x="1786.6" y="1099.8" width="1.4" height="24.0" rx="0.7" ry="3.2"/>
</g>
<g fill="rgb(196,86,42)">
<rect x="1788.0" y="1099.8" width="1.4" height="24.0" rx="0.7" ry="3.2"/>
</g>
<g fill="rgb(243,224,100)">
<rect x="1789.4" y="1099.8" width="3.9" height="24.0" rx="2.0" ry="3.2"/>
</g>
<g fill="rgb(233,198,84)">
<rect x="1793.3" y="1099.8" width="5.0" height="24.0" rx="2.5" ry="3.2"/>
</g>
<g fill="rgb(217,156,65)">
<rect x="1798.3" y="1099.8" width="1.7" height="24.0" rx="0.8" ry="3.2"/>
</g>
<g fill="rgb(208,124,54)">
<rect x="1800.0" y="1099.8" width="22.0" height="24.0" rx="3.2" ry="3.2"/>
</g>
<g fill="rgb(188,64,36)">
<rect x="1822.5" y="1099.8" width="1.2" height="24.0" rx="0.6" ry="3.2"/>
</g>
<g fill="rgb(233,198,84)">
<rect x="1823.7" y="1099.8" width="1.6" height="24.0" rx="0.8" ry="3.2"/>
</g>
<g fill="rgb(208,124,54)">
<rect x="1825.4" y="1099.8" width="1.3" height="24.0" rx="0.6" ry="3.2"/>
<rect x="1826.7" y="1099.8" width="2.0" height="24.0" rx="1.0" ry="3.2"/>
</g>
<g fill="rgb(196,86,42)">
<rect x="1828.7" y="1099.8" width="1.3" height="24.0" rx="0.7" ry="3.2"/>
</g>
<g fill="rgb(217,156,65)">
<rect x="1892.0" y="1099.8" width="9.5" height="24.0" rx="3.2" ry="3.2"/>
</g>
<g fill="rgb(233,198,84)">
<rect x="1327.3" y="1074.2" width="1.3" height="24.0" rx="0.6" ry="3.2"/>
</g>
<g fill="rgb(177,41,27)">
<rect x="1329.2" y="1074.2" width="1.2" height="24.0" rx="0.6" ry="3.2"/>
</g>
<g fill="rgb(233,198,84)">
<rect x="1331.0" y="1074.2" width="3.0" height="24.0" rx="1.5" ry="3.2"/>
</g>
<g fill="rgb(196,86,42)">
<rect x="1334.0" y="1074.2" width="4.0" height="24.0" rx="2.0" ry="3.2"/>
</g>
<g fill="rgb(233,198,84)">
<rect x="1338.0" y="1074.2" width="4.5" height="24.0" rx="2.2" ry="3.2"/>
</g>
<g fill="rgb(196,86,42)">
<rect x="1384.5" y="1074.2" width="5.3" height="24.0" rx="2.7" ry="3.2"/>
</g>
<g fill="rgb(233,198,84)">
<rect x="1389.8" y="1074.2" width="2.1" height="24.0" rx="1.0" ry="3.2"/>
<rect x="1391.9" y="1074.2" width="2.0" height="24.0" rx="1.0" ry="3.2"/>
</g>
<g fill="rgb(196,86,42)">
<rect x="1393.8" y="1074.2" width="3.2" height="24.0" rx="1.6" ry="3.2"/>
</g>
<g fill="rgb(233,198,84)">
<rect x="1397.1" y="1074.2" width="2.0" height="24.0" rx="1.0" ry="3.2"/>
</g>
<g fill="rgb(196,86,42)">
<rect x="1399.0" y="1074.2" width="2.7" height="24.0" rx="1.3" ry="3.2"/>
</g>
<g fill="rgb(243,224,100)">
<rect x="1401.7" y="1074.2" width="3.4" height="24.0" rx="1.7" ry="3.2"/>
</g>
<g fill="rgb(233,198,84)">
<rect x="1405.2" y="1074.2" width="4.5" height="24.0" rx="2.2" ry="3.2"/>
</g>
<g fill="rgb(217,156,65)">
<rect x="1409.6" y="1074.2" width="4.6" height="24.0" rx="2.3" ry="3.2"/>
<rect x="1414.2" y="1074.2" width="1.6" height="24.0" rx="0.8" ry="3.2"/>
</g>
<g fill="rgb(233,198,84)">
<rect x="1415.8" y="1074.2" width="4.3" height="24.0" rx="2.2" ry="3.2"/>
</g>
<g fill="rgb(243,224,100)">
<rect x="1420.1" y="1074.2" width="3.2" height="24.0" rx="1.6" ry="3.2"/>
</g>
<g fill="rgb(233,198,84)">
<rect x="1423.3" y="1074.2" width="5.1" height="24.0" rx="2.6" ry="3.2"/>
</g>
<g fill="rgb(177,41,27)">
<rect x="1428.4" y="1074.2" width="3.6" height="24.0" rx="1.8" ry="3.2"/>
</g>
<g fill="rgb(217,156,65)">
<rect x="1432.0" y="1074.2" width="4.6" height="24.0" rx="2.3" ry="3.2"/>
</g>
<g fill="rgb(196,86,42)">
<rect x="1436.6" y="1074.2" width="3.2" height="24.0" rx="1.6" ry="3.2"/>
<rect x="1439.8" y="1074.2" width="2.1" height="24.0" rx="1.0" ry="3.2"/>
</g>
<g fill="rgb(200,60,232)" stroke="#7a2a9a" stroke-width="1.2">
<rect x="1444.0" y="1074.2" width="26.5" height="24.0" rx="3.2" ry="3.2"/>
</g>
<g fill="rgb(196,86,42)">
<rect x="1473.0" y="1074.2" width="3.0" height="24.0" rx="1.5" ry="3.2"/>
</g>
<g fill="rgb(177,41,27)">
<rect x="1479.0" y="1074.2" width="14.5" height="24.0" rx="3.2" ry="3.2"/>
</g>
<g fill="rgb(233,198,84)">
<rect x="1494.0" y="1074.2" width="14.0" height="24.0" rx="3.2" ry="3.2"/>
</g>
<g fill="rgb(196,86,42)">
<rect x="1508.5" y="1074.2" width="3.0" height="24.0" rx="1.5" ry="3.2"/>
</g>
<g fill="rgb(233,198,84)">
<rect x="1511.5" y="1074.2" width="2.8" height="24.0" rx="1.4" ry="3.2"/>
</g>
<g fill="rgb(217,156,65)">
<rect x="1514.3" y="1074.2" width="3.2" height="24.0" rx="1.6" ry="3.2"/>
</g>
<g fill="rgb(196,86,42)">
<rect x="1517.6" y="1074.2" width="3.4" height="24.0" rx="1.7" ry="3.2"/>
</g>
<g fill="rgb(233,198,84)">
<rect x="1521.0" y="1074.2" width="3.0" height="24.0" rx="1.5" ry="3.2"/>
</g>
<g fill="rgb(177,41,27)">
<rect x="1524.0" y="1074.2" width="3.3" height="24.0" rx="1.6" ry="3.2"/>
</g>
<g fill="rgb(233,198,84)">
<rect x="1527.3" y="1074.2" width="1.9" height="24.0" rx="0.9" ry="3.2"/>
</g>
<g fill="rgb(196,86,42)">
<rect x="1529.2" y="1074.2" width="2.1" height="24.0" rx="1.1" ry="3.2"/>
</g>
<g fill="rgb(217,156,65)">
<rect x="1553.0" y="1074.2" width="1.6" height="24.0" rx="0.8" ry="3.2"/>
</g>
<g fill="rgb(177,41,27)">
<rect x="1554.6" y="1074.2" width="1.8" height="24.0" rx="0.9" ry="3.2"/>
</g>
<g fill="rgb(233,198,84)">
<rect x="1558.8" y="1074.2" width="5.4" height="24.0" rx="2.7" ry="3.2"/>
</g>
<g fill="rgb(196,86,42)">
<rect x="1564.3" y="1074.2" width="2.2" height="24.0" rx="1.1" ry="3.2"/>
</g>
<g fill="rgb(217,156,65)">
<rect x="1566.5" y="1074.2" width="5.1" height="24.0" rx="2.6" ry="3.2"/>
</g>
<g fill="rgb(208,124,54)">
<rect x="1571.6" y="1074.2" width="4.9" height="24.0" rx="2.5" ry="3.2"/>
<rect x="1576.6" y="1074.2" width="4.0" height="24.0" rx="2.0" ry="3.2"/>
</g>
<g fill="rgb(233,198,84)">
<rect x="1580.5" y="1074.2" width="1.9" height="24.0" rx="1.0" ry="3.2"/>
</g>
<g fill="rgb(243,224,100)">
<rect x="1582.5" y="1074.2" width="4.1" height="24.0" rx="2.1" ry="3.2"/>
</g>
<g fill="rgb(196,86,42)">
<rect x="1586.6" y="1074.2" width="5.1" height="24.0" rx="2.6" ry="3.2"/>
</g>
<g fill="rgb(217,156,65)">
<rect x="1591.7" y="1074.2" width="4.1" height="24.0" rx="2.1" ry="3.2"/>
<rect x="1600.2" y="1074.2" width="3.4" height="24.0" rx="1.7" ry="3.2"/>
</g>
<g fill="rgb(233,198,84)">
<rect x="1603.6" y="1074.2" width="6.0" height="24.0" rx="3.0" ry="3.2"/>
</g>
<g fill="rgb(208,124,54)">
<rect x="1609.6" y="1074.2" width="5.8" height="24.0" rx="2.9" ry="3.2"/>
</g>
<g fill="rgb(196,86,42)">
<rect x="1615.3" y="1074.2" width="4.1" height="24.0" rx="2.1" ry="3.2"/>
<rect x="1619.4" y="1074.2" width="2.5" height="24.0" rx="1.3" ry="3.2"/>
<rect x="1621.9" y="1074.2" width="4.0" height="24.0" rx="2.0" ry="3.2"/>
</g>
<g fill="rgb(208,124,54)">
<rect x="1626.0" y="1074.2" width="1.6" height="24.0" rx="0.8" ry="3.2"/>
</g>
<g fill="rgb(196,86,42)">
<rect x="1627.6" y="1074.2" width="4.1" height="24.0" rx="2.0" ry="3.2"/>
<rect x="1631.7" y="1074.2" width="5.5" height="24.0" rx="2.8" ry="3.2"/>
</g>
<g fill="rgb(177,41,27)">
<rect x="1637.2" y="1074.2" width="4.0" height="24.0" rx="2.0" ry="3.2"/>
</g>
<g fill="rgb(196,86,42)">
<rect x="1641.1" y="1074.2" width="1.8" height="24.0" rx="0.9" ry="3.2"/>
</g>
<g fill="rgb(208,124,54)">
<rect x="1643.0" y="1074.2" width="3.6" height="24.0" rx="1.8" ry="3.2"/>
</g>
<g fill="rgb(243,224,100)">
<rect x="1646.5" y="1074.2" width="6.1" height="24.0" rx="3.1" ry="3.2"/>
</g>
<g fill="rgb(233,198,84)">
<rect x="1652.7" y="1074.2" width="3.9" height="24.0" rx="1.9" ry="3.2"/>
</g>
<g fill="rgb(217,156,65)">
<rect x="1656.5" y="1074.2" width="3.7" height="24.0" rx="1.8" ry="3.2"/>
</g>
<g fill="rgb(196,86,42)">
<rect x="1660.2" y="1074.2" width="6.0" height="24.0" rx="3.0" ry="3.2"/>
</g>
<g fill="rgb(233,198,84)">
<rect x="1666.2" y="1074.2" width="3.1" height="24.0" rx="1.5" ry="3.2"/>
</g>
<g fill="rgb(208,124,54)">
<rect x="1669.3" y="1074.2" width="4.6" height="24.0" rx="2.3" ry="3.2"/>
</g>
<g fill="rgb(177,41,27)">
<rect x="1673.9" y="1074.2" width="2.1" height="24.0" rx="1.1" ry="3.2"/>
</g>
<g fill="rgb(233,198,84)">
<rect x="1676.0" y="1074.2" width="1.6" height="24.0" rx="0.8" ry="3.2"/>
</g>
<g fill="rgb(177,41,27)">
<rect x="1677.6" y="1074.2" width="2.6" height="24.0" rx="1.3" ry="3.2"/>
</g>
<g fill="rgb(196,86,42)">
<rect x="1680.3" y="1074.2" width="3.1" height="24.0" rx="1.6" ry="3.2"/>
</g>
<g fill="rgb(233,198,84)">
<rect x="1683.4" y="1074.2" width="4.6" height="24.0" rx="2.3" ry="3.2"/>
<rect x="1688.0" y="1074.2" width="5.2" height="24.0" rx="2.6" ry="3.2"/>
</g>
<g fill="rgb(243,224,100)">
<rect x="1693.1" y="1074.2" width="4.1" height="24.0" rx="2.0" ry="3.2"/>
</g>
<g fill="rgb(196,86,42)">
<rect x="1697.2" y="1074.2" width="2.5" height="24.0" rx="1.2" ry="3.2"/>
<rect x="1699.7" y="1074.2" width="3.7" height="24.0" rx="1.8" ry="3.2"/>
<rect x="1703.4" y="1074.2" width="3.6" height="24.0" rx="1.8" ry="3.2"/>
</g>
<g fill="rgb(233,198,84)">
<rect x="1706.9" y="1074.2" width="2.3" height="24.0" rx="1.1" ry="3.2"/>
</g>
<g fill="rgb(196,86,42)">
<rect x="1709.2" y="1074.2" width="4.7" height="24.0" rx="2.3" ry="3.2"/>
</g>
<g fill="rgb(217,156,65)">
<rect x="1713.9" y="1074.2" width="4.1" height="24.0" rx="2.1" ry="3.2"/>
<rect x="1718.0" y="1074.2" width="4.6" height="24.0" rx="2.3" ry="3.2"/>
</g>
<g fill="rgb(177,41,27)">
<rect x="1722.6" y="1074.2" width="2.7" height="24.0" rx="1.3" ry="3.2"/>
</g>
<g fill="rgb(217,156,65)">
<rect x="1725.2" y="1074.2" width="5.6" height="24.0" rx="2.8" ry="3.2"/>
</g>
<g fill="rgb(233,198,84)">
<rect x="1733.9" y="1074.2" width="6.1" height="24.0" rx="3.1" ry="3.2"/>
</g>
<g fill="rgb(217,156,65)">
<rect x="1740.0" y="1074.2" width="0.5" height="24.0" rx="0.3" ry="3.2"/>
</g>
<g fill="rgb(208,124,54)">
<rect x="1762.0" y="1074.2" width="2.7" height="24.0" rx="1.3" ry="3.2"/>
<rect x="1764.7" y="1074.2" width="5.6" height="24.0" rx="2.8" ry="3.2"/>
</g>
<g fill="rgb(217,156,65)">
<rect x="1770.3" y="1074.2" width="2.5" height="24.0" rx="1.2" ry="3.2"/>
</g>
<g fill="rgb(233,198,84)">
<rect x="1772.8" y="1074.2" width="4.1" height="24.0" rx="2.1" ry="3.2"/>
</g>
<g fill="rgb(196,86,42)">
<rect x="1776.9" y="1074.2" width="2.6" height="24.0" rx="1.3" ry="3.2"/>
</g>
<g fill="rgb(208,124,54)">
<rect x="1779.5" y="1074.2" width="5.4" height="24.0" rx="2.7" ry="3.2"/>
</g>
<g fill="rgb(196,86,42)">
<rect x="1785.0" y="1074.2" width="3.0" height="24.0" rx="1.5" ry="3.2"/>
</g>
<g fill="rgb(217,156,65)">
<rect x="1788.0" y="1074.2" width="6.6" height="24.0" rx="3.2" ry="3.2"/>
</g>
<g fill="rgb(196,86,42)">
<rect x="1794.5" y="1074.2" width="2.6" height="24.0" rx="1.3" ry="3.2"/>
<rect x="1797.1" y="1074.2" width="2.9" height="24.0" rx="1.5" ry="3.2"/>
</g>
<g fill="rgb(177,41,27)">
<rect x="1817.1" y="1074.2" width="1.1" height="24.0" rx="0.5" ry="3.2"/>
<rect x="1818.2" y="1074.2" width="1.8" height="24.0" rx="0.9" ry="3.2"/>
</g>
<g fill="rgb(196,86,42)">
<rect x="1821.2" y="1074.2" width="1.3" height="24.0" rx="0.7" ry="3.2"/>
</g>
<g fill="rgb(233,198,84)">
<rect x="1822.5" y="1074.2" width="2.5" height="24.0" rx="1.2" ry="3.2"/>
</g>
<g fill="rgb(177,41,27)">
<rect x="1826.1" y="1074.2" width="2.4" height="24.0" rx="1.2" ry="3.2"/>
<rect x="1892.0" y="1074.2" width="4.0" height="24.0" rx="2.0" ry="3.2"/>
</g>
<g fill="rgb(217,156,65)">
<rect x="1897.0" y="1074.2" width="4.5" height="24.0" rx="2.2" ry="3.2"/>
</g>
<g fill="rgb(196,86,42)">
<rect x="1327.5" y="1048.7" width="3.5" height="24.0" rx="1.8" ry="3.2"/>
<rect x="1332.0" y="1048.7" width="4.0" height="24.0" rx="2.0" ry="3.2"/>
<rect x="1337.0" y="1048.7" width="3.0" height="24.0" rx="1.5" ry="3.2"/>
<rect x="1341.0" y="1048.7" width="4.0" height="24.0" rx="2.0" ry="3.2"/>
<rect x="1346.0" y="1048.7" width="4.0" height="24.0" rx="2.0" ry="3.2"/>
<rect x="1351.0" y="1048.7" width="4.5" height="24.0" rx="2.2" ry="3.2"/>
</g>
<g fill="rgb(217,156,65)">
<rect x="1357.5" y="1048.7" width="11.5" height="24.0" rx="3.2" ry="3.2"/>
</g>
<g fill="rgb(177,41,27)">
<rect x="1370.0" y="1048.7" width="1.2" height="24.0" rx="0.6" ry="3.2"/>
</g>
<g fill="rgb(233,198,84)">
<rect x="1373.0" y="1048.7" width="12.0" height="24.0" rx="3.2" ry="3.2"/>
</g>
<g fill="rgb(228,180,75)">
<rect x="1386.0" y="1048.7" width="4.1" height="24.0" rx="2.1" ry="3.2"/>
</g>
<g fill="rgb(217,156,65)">
<rect x="1390.1" y="1048.7" width="3.0" height="24.0" rx="1.5" ry="3.2"/>
</g>
<g fill="rgb(196,86,42)">
<rect x="1393.1" y="1048.7" width="2.8" height="24.0" rx="1.4" ry="3.2"/>
<rect x="1395.9" y="1048.7" width="1.3" height="24.0" rx="0.6" ry="3.2"/>
</g>
<g fill="rgb(233,198,84)">
<rect x="1397.2" y="1048.7" width="4.4" height="24.0" rx="2.2" ry="3.2"/>
</g>
<g fill="rgb(196,86,42)">
<rect x="1401.6" y="1048.7" width="2.9" height="24.0" rx="1.5" ry="3.2"/>
</g>
<g fill="rgb(233,198,84)">
<rect x="1404.5" y="1048.7" width="2.7" height="24.0" rx="1.4" ry="3.2"/>
</g>
<g fill="rgb(217,156,65)">
<rect x="1407.2" y="1048.7" width="1.8" height="24.0" rx="0.9" ry="3.2"/>
</g>
<g fill="rgb(177,41,27)">
<rect x="1409.1" y="1048.7" width="1.3" height="24.0" rx="0.6" ry="3.2"/>
</g>
<g fill="rgb(196,86,42)">
<rect x="1410.3" y="1048.7" width="4.2" height="24.0" rx="2.1" ry="3.2"/>
<rect x="1414.6" y="1048.7" width="4.5" height="24.0" rx="2.2" ry="3.2"/>
<rect x="1419.0" y="1048.7" width="2.7" height="24.0" rx="1.4" ry="3.2"/>
</g>
<g fill="rgb(233,198,84)">
<rect x="1424.9" y="1048.7" width="4.3" height="24.0" rx="2.1" ry="3.2"/>
</g>
<g fill="rgb(196,86,42)">
<rect x="1429.2" y="1048.7" width="4.7" height="24.0" rx="2.3" ry="3.2"/>
</g>
<g fill="rgb(177,41,27)">
<rect x="1433.8" y="1048.7" width="4.2" height="24.0" rx="2.1" ry="3.2"/>
<rect x="1438.0" y="1048.7" width="2.7" height="24.0" rx="1.4" ry="3.2"/>
</g>
<g fill="rgb(196,86,42)">
<rect x="1440.7" y="1048.7" width="2.3" height="24.0" rx="1.1" ry="3.2"/>
</g>
<g fill="rgb(233,198,84)">
<rect x="1478.0" y="1048.7" width="30.0" height="24.0" rx="3.2" ry="3.2"/>
</g>
<g fill="rgb(196,86,42)">
<rect x="1509.0" y="1048.7" width="2.0" height="24.0" rx="1.0" ry="3.2"/>
</g>
<g fill="rgb(177,41,27)">
<rect x="1513.0" y="1048.7" width="3.0" height="24.0" rx="1.5" ry="3.2"/>
</g>
<g fill="rgb(233,198,84)">
<rect x="1519.0" y="1048.7" width="2.0" height="24.0" rx="1.0" ry="3.2"/>
</g>
<g fill="rgb(196,86,42)">
<rect x="1589.4" y="1048.7" width="1.3" height="24.0" rx="0.7" ry="3.2"/>
</g>
<g fill="rgb(233,198,84)">
<rect x="1645.3" y="1048.7" width="1.0" height="24.0" rx="0.5" ry="3.2"/>
</g>
<g fill="rgb(217,156,65)">
<rect x="1703.8" y="1048.7" width="1.2" height="24.0" rx="0.6" ry="3.2"/>
</g>
<g fill="rgb(177,41,27)">
<rect x="1653.9" y="1048.7" width="1.4" height="24.0" rx="0.7" ry="3.2"/>
<rect x="1626.0" y="1048.7" width="1.3" height="24.0" rx="0.6" ry="3.2"/>
</g>
<g fill="rgb(196,86,42)">
<rect x="1585.8" y="1048.7" width="1.4" height="24.0" rx="0.7" ry="3.2"/>
</g>
<g fill="rgb(233,198,84)">
<rect x="1683.5" y="1048.7" width="1.2" height="24.0" rx="0.6" ry="3.2"/>
</g>
<g fill="rgb(196,86,42)">
<rect x="1669.6" y="1048.7" width="0.9" height="24.0" rx="0.5" ry="3.2"/>
<rect x="1656.1" y="1048.7" width="1.3" height="24.0" rx="0.7" ry="3.2"/>
</g>
<g fill="rgb(177,41,27)">
<rect x="1564.1" y="1048.7" width="1.3" height="24.0" rx="0.7" ry="3.2"/>
</g>
<g fill="rgb(233,198,84)">
<rect x="1582.2" y="1048.7" width="1.5" height="24.0" rx="0.7" ry="3.2"/>
<rect x="1588.7" y="1048.7" width="1.3" height="24.0" rx="0.7" ry="3.2"/>
</g>
<g fill="rgb(177,41,27)">
<rect x="1646.3" y="1048.7" width="1.0" height="24.0" rx="0.5" ry="3.2"/>
<rect x="1643.6" y="1048.7" width="1.4" height="24.0" rx="0.7" ry="3.2"/>
</g>
<g fill="rgb(217,156,65)">
<rect x="1698.9" y="1048.7" width="1.0" height="24.0" rx="0.5" ry="3.2"/>
<rect x="1736.0" y="1048.7" width="0.9" height="24.0" rx="0.5" ry="3.2"/>
</g>
<g fill="rgb(196,86,42)">
<rect x="1644.8" y="1048.7" width="1.4" height="24.0" rx="0.7" ry="3.2"/>
</g>
<g fill="rgb(217,156,65)">
<rect x="1620.7" y="1048.7" width="1.0" height="24.0" rx="0.5" ry="3.2"/>
</g>
<g fill="rgb(233,198,84)">
<rect x="1632.9" y="1048.7" width="1.1" height="24.0" rx="0.6" ry="3.2"/>
<rect x="1649.3" y="1048.7" width="1.1" height="24.0" rx="0.5" ry="3.2"/>
</g>
<g fill="rgb(177,41,27)">
<rect x="1628.8" y="1048.7" width="0.9" height="24.0" rx="0.5" ry="3.2"/>
</g>
<g fill="rgb(233,198,84)">
<rect x="1588.3" y="1048.7" width="1.3" height="24.0" rx="0.7" ry="3.2"/>
<rect x="1560.5" y="1023.2" width="0.9" height="24.0" rx="0.5" ry="3.2"/>
<rect x="1693.2" y="1023.2" width="1.0" height="24.0" rx="0.5" ry="3.2"/>
</g>
<g fill="rgb(177,41,27)">
<rect x="1616.7" y="1023.2" width="1.4" height="24.0" rx="0.7" ry="3.2"/>
</g>
<g fill="rgb(196,86,42)">
<rect x="1592.2" y="1023.2" width="1.0" height="24.0" rx="0.5" ry="3.2"/>
</g>
<g fill="rgb(233,198,84)">
<rect x="1708.4" y="1023.2" width="1.1" height="24.0" rx="0.5" ry="3.2"/>
</g>
<g fill="rgb(177,41,27)">
<rect x="1725.5" y="1023.2" width="1.0" height="24.0" rx="0.5" ry="3.2"/>
</g>
<g fill="rgb(196,86,42)">
<rect x="1571.7" y="1023.2" width="1.3" height="24.0" rx="0.7" ry="3.2"/>
</g>
<g fill="rgb(233,198,84)">
<rect x="1626.7" y="1023.2" width="1.2" height="24.0" rx="0.6" ry="3.2"/>
</g>
<g fill="rgb(177,41,27)">
<rect x="1652.5" y="1023.2" width="1.2" height="24.0" rx="0.6" ry="3.2"/>
<rect x="1790.6" y="1048.7" width="1.2" height="24.0" rx="0.6" ry="3.2"/>
</g>
<g fill="rgb(233,198,84)">
<rect x="1825.6" y="1048.7" width="1.2" height="24.0" rx="0.6" ry="3.2"/>
</g>
<g fill="rgb(196,86,42)">
<rect x="1765.9" y="1048.7" width="1.2" height="24.0" rx="0.6" ry="3.2"/>
<rect x="1795.9" y="1048.7" width="1.2" height="24.0" rx="0.6" ry="3.2"/>
</g>
<g fill="rgb(177,41,27)">
<rect x="1807.0" y="1048.7" width="1.2" height="24.0" rx="0.6" ry="3.2"/>
</g>
<g fill="rgb(233,198,84)">
<rect x="558.8" y="129.3" width="1.3" height="24.0" rx="0.7" ry="3.2"/>
</g>
<g fill="rgb(196,86,42)">
<rect x="558.8" y="103.8" width="1.3" height="24.0" rx="0.7" ry="3.2"/>
</g>
<g fill="rgb(233,198,84)">
<rect x="558.8" y="78.3" width="1.3" height="24.0" rx="0.7" ry="3.2"/>
<rect x="558.8" y="52.7" width="1.3" height="24.0" rx="0.7" ry="3.2"/>
<rect x="558.8" y="27.2" width="1.3" height="24.0" rx="0.7" ry="3.2"/>
<rect x="558.8" y="1.6" width="1.3" height="24.0" rx="0.7" ry="3.2"/>
<rect x="558.5" y="154.9" width="2.1" height="24.0" rx="1.1" ry="3.2"/>
</g>
<g fill="rgb(177,41,27)">
<rect x="562.0" y="154.9" width="2.2" height="24.0" rx="1.1" ry="3.2"/>
<rect x="558.5" y="180.4" width="2.1" height="24.0" rx="1.1" ry="3.2"/>
<rect x="562.0" y="180.4" width="2.2" height="24.0" rx="1.1" ry="3.2"/>
</g>
<g fill="rgb(233,198,84)">
<rect x="558.5" y="205.9" width="2.1" height="24.0" rx="1.1" ry="3.2"/>
</g>
<g fill="rgb(177,41,27)">
<rect x="562.0" y="205.9" width="2.2" height="24.0" rx="1.1" ry="3.2"/>
</g>
<g fill="rgb(233,198,84)">
<rect x="558.5" y="231.5" width="2.1" height="24.0" rx="1.1" ry="3.2"/>
<rect x="562.0" y="231.5" width="2.2" height="24.0" rx="1.1" ry="3.2"/>
<rect x="558.5" y="257.0" width="2.1" height="24.0" rx="1.1" ry="3.2"/>
<rect x="562.0" y="257.0" width="2.2" height="24.0" rx="1.1" ry="3.2"/>
</g>
<g fill="rgb(177,41,27)">
<rect x="558.5" y="282.6" width="2.1" height="24.0" rx="1.1" ry="3.2"/>
</g>
<g fill="rgb(233,198,84)">
<rect x="562.0" y="282.6" width="2.2" height="24.0" rx="1.1" ry="3.2"/>
<rect x="558.5" y="308.1" width="2.1" height="24.0" rx="1.1" ry="3.2"/>
<rect x="562.0" y="308.1" width="2.2" height="24.0" rx="1.1" ry="3.2"/>
<rect x="558.5" y="333.6" width="2.1" height="24.0" rx="1.1" ry="3.2"/>
</g>
<g fill="rgb(177,41,27)">
<rect x="562.0" y="333.6" width="2.2" height="24.0" rx="1.1" ry="3.2"/>
<rect x="558.5" y="359.2" width="2.1" height="24.0" rx="1.1" ry="3.2"/>
</g>
<g fill="rgb(233,198,84)">
<rect x="562.0" y="359.2" width="2.2" height="24.0" rx="1.1" ry="3.2"/>
</g>
<g fill="rgb(177,41,27)">
<rect x="558.5" y="384.7" width="2.1" height="24.0" rx="1.1" ry="3.2"/>
<rect x="562.0" y="384.7" width="2.2" height="24.0" rx="1.1" ry="3.2"/>
<rect x="558.5" y="410.2" width="2.1" height="24.0" rx="1.1" ry="3.2"/>
</g>
<g fill="rgb(233,198,84)">
<rect x="562.0" y="410.2" width="2.2" height="24.0" rx="1.1" ry="3.2"/>
<rect x="558.5" y="435.8" width="2.1" height="24.0" rx="1.1" ry="3.2"/>
<rect x="562.0" y="435.8" width="2.2" height="24.0" rx="1.1" ry="3.2"/>
</g>
<g fill="rgb(177,41,27)">
<rect x="558.3" y="461.3" width="2.2" height="24.0" rx="1.1" ry="3.2"/>
</g>
<g fill="rgb(233,198,84)">
<rect x="560.5" y="461.3" width="2.0" height="24.0" rx="1.0" ry="3.2"/>
</g>
<g fill="rgb(196,86,42)">
<rect x="562.5" y="461.3" width="2.0" height="24.0" rx="1.0" ry="3.2"/>
</g>
<g fill="rgb(233,198,84)">
<rect x="564.5" y="461.3" width="1.5" height="24.0" rx="0.8" ry="3.2"/>
<rect x="558.3" y="486.9" width="5.2" height="24.0" rx="2.6" ry="3.2"/>
</g>
<g fill="rgb(177,41,27)">
<rect x="563.5" y="486.9" width="1.5" height="24.0" rx="0.8" ry="3.2"/>
</g>
<g fill="rgb(233,198,84)">
<rect x="565.0" y="486.9" width="1.5" height="24.0" rx="0.8" ry="3.2"/>
<rect x="558.3" y="512.4" width="8.2" height="24.0" rx="3.2" ry="3.2"/>
</g>
<g fill="rgb(177,41,27)">
<rect x="558.3" y="537.9" width="4.0" height="24.0" rx="2.0" ry="3.2"/>
</g>
<g fill="rgb(233,198,84)">
<rect x="562.3" y="537.9" width="4.2" height="24.0" rx="2.1" ry="3.2"/>
</g>
<g fill="rgb(196,86,42)">
<rect x="558.3" y="563.5" width="4.0" height="24.0" rx="2.0" ry="3.2"/>
</g>
<g fill="rgb(233,198,84)">
<rect x="562.3" y="563.5" width="4.2" height="24.0" rx="2.1" ry="3.2"/>
</g>
<g fill="rgb(217,156,65)">
<rect x="558.3" y="589.0" width="4.7" height="24.0" rx="2.4" ry="3.2"/>
</g>
<g fill="rgb(196,86,42)">
<rect x="563.0" y="589.0" width="2.0" height="24.0" rx="1.0" ry="3.2"/>
</g>
<g fill="rgb(233,198,84)">
<rect x="565.0" y="589.0" width="1.5" height="24.0" rx="0.8" ry="3.2"/>
<rect x="558.5" y="614.6" width="7.8" height="24.0" rx="3.2" ry="3.2"/>
</g>
<g fill="rgb(217,156,65)">
<rect x="562.3" y="614.6" width="1.0" height="24.0" rx="0.5" ry="3.2"/>
</g>
<g fill="rgb(196,86,42)">
<rect x="558.5" y="640.1" width="3.5" height="24.0" rx="1.8" ry="3.2"/>
</g>
<g fill="rgb(233,198,84)">
<rect x="562.0" y="640.1" width="4.3" height="24.0" rx="2.1" ry="3.2"/>
<rect x="558.5" y="665.6" width="3.8" height="24.0" rx="1.9" ry="3.2"/>
</g>
<g fill="rgb(177,41,27)">
<rect x="562.3" y="665.6" width="2.7" height="24.0" rx="1.4" ry="3.2"/>
</g>
<g fill="rgb(233,198,84)">
<rect x="565.0" y="665.6" width="1.3" height="24.0" rx="0.6" ry="3.2"/>
<rect x="558.5" y="691.2" width="7.8" height="24.0" rx="3.2" ry="3.2"/>
</g>
<g fill="rgb(177,41,27)">
<rect x="562.3" y="691.2" width="1.2" height="24.0" rx="0.6" ry="3.2"/>
<rect x="558.5" y="716.7" width="3.5" height="24.0" rx="1.8" ry="3.2"/>
</g>
<g fill="rgb(233,198,84)">
<rect x="562.0" y="716.7" width="4.3" height="24.0" rx="2.1" ry="3.2"/>
<rect x="558.3" y="742.2" width="8.7" height="24.0" rx="3.2" ry="3.2"/>
<rect x="558.5" y="767.8" width="3.8" height="24.0" rx="1.9" ry="3.2"/>
</g>
<g fill="rgb(177,41,27)">
<rect x="562.3" y="767.8" width="4.0" height="24.0" rx="2.0" ry="3.2"/>
</g>
<g fill="rgb(233,198,84)">
<rect x="558.5" y="793.3" width="3.8" height="24.0" rx="1.9" ry="3.2"/>
</g>
<g fill="rgb(196,86,42)">
<rect x="562.3" y="793.3" width="3.0" height="24.0" rx="1.5" ry="3.2"/>
</g>
<g fill="rgb(233,198,84)">
<rect x="565.3" y="793.3" width="1.2" height="24.0" rx="0.6" ry="3.2"/>
</g>
<g fill="rgb(177,41,27)">
<rect x="558.5" y="818.9" width="3.5" height="24.0" rx="1.8" ry="3.2"/>
</g>
<g fill="rgb(233,198,84)">
<rect x="562.0" y="818.9" width="4.3" height="24.0" rx="2.1" ry="3.2"/>
<rect x="558.0" y="844.4" width="7.5" height="24.0" rx="3.2" ry="3.2"/>
</g>
<g fill="rgb(217,156,65)">
<rect x="561.0" y="844.4" width="2.0" height="24.0" rx="1.0" ry="3.2"/>
<rect x="648.8" y="742.2" width="2.5" height="24.0" rx="1.2" ry="3.2"/>
</g>
<g fill="rgb(233,198,84)">
<rect x="648.8" y="767.8" width="2.8" height="24.0" rx="1.4" ry="3.2"/>
<rect x="648.8" y="793.3" width="2.8" height="24.0" rx="1.4" ry="3.2"/>
<rect x="648.8" y="818.9" width="2.8" height="24.0" rx="1.4" ry="3.2"/>
<rect x="644.5" y="844.4" width="7.0" height="24.0" rx="3.2" ry="3.2"/>
<rect x="701.5" y="844.4" width="1.1" height="24.0" rx="0.6" ry="3.2"/>
<rect x="1386.5" y="895.5" width="1.0" height="24.0" rx="0.5" ry="3.2"/>
<rect x="1387.0" y="921.0" width="1.0" height="24.0" rx="0.5" ry="3.2"/>
<rect x="1409.5" y="946.5" width="1.0" height="24.0" rx="0.5" ry="3.2"/>
</g>
<g fill="rgb(196,86,42)">
<rect x="1412.0" y="946.5" width="1.2" height="24.0" rx="0.6" ry="3.2"/>
</g>
<g fill="rgb(233,198,84)">
<rect x="1419.5" y="946.5" width="1.2" height="24.0" rx="0.6" ry="3.2"/>
<rect x="1394.5" y="972.1" width="3.5" height="24.0" rx="1.8" ry="3.2"/>
<rect x="1404.5" y="972.1" width="1.2" height="24.0" rx="0.6" ry="3.2"/>
<rect x="1409.5" y="972.1" width="1.0" height="24.0" rx="0.5" ry="3.2"/>
</g>
<g fill="rgb(196,86,42)">
<rect x="1412.0" y="972.1" width="1.2" height="24.0" rx="0.6" ry="3.2"/>
</g>
<g fill="rgb(233,198,84)">
<rect x="1419.5" y="972.1" width="1.2" height="24.0" rx="0.6" ry="3.2"/>
<rect x="1428.2" y="972.1" width="1.2" height="24.0" rx="0.6" ry="3.2"/>
<rect x="1387.0" y="997.6" width="1.0" height="24.0" rx="0.5" ry="3.2"/>
</g>
<g fill="rgb(217,156,65)">
<rect x="1394.5" y="997.6" width="3.5" height="24.0" rx="1.8" ry="3.2"/>
</g>
<g fill="rgb(233,198,84)">
<rect x="1404.5" y="997.6" width="1.2" height="24.0" rx="0.6" ry="3.2"/>
</g>
<g fill="rgb(196,86,42)">
<rect x="1409.5" y="997.6" width="1.0" height="24.0" rx="0.5" ry="3.2"/>
</g>
<g fill="rgb(177,41,27)">
<rect x="1412.0" y="997.6" width="1.2" height="24.0" rx="0.6" ry="3.2"/>
</g>
<g fill="rgb(196,86,42)">
<rect x="1419.5" y="997.6" width="1.2" height="24.0" rx="0.6" ry="3.2"/>
</g>
<g fill="rgb(217,156,65)">
<rect x="1427.0" y="997.6" width="3.0" height="24.0" rx="1.5" ry="3.2"/>
</g>
<g fill="rgb(233,198,84)">
<rect x="1432.0" y="997.6" width="1.2" height="24.0" rx="0.6" ry="3.2"/>
<rect x="1435.8" y="997.6" width="1.2" height="24.0" rx="0.6" ry="3.2"/>
<rect x="1387.0" y="1023.2" width="2.5" height="24.0" rx="1.2" ry="3.2"/>
</g>
<g fill="rgb(217,156,65)">
<rect x="1391.2" y="1023.2" width="6.8" height="24.0" rx="3.2" ry="3.2"/>
</g>
<g fill="rgb(233,198,84)">
<rect x="1404.5" y="1023.2" width="3.0" height="24.0" rx="1.5" ry="3.2"/>
</g>
<g fill="rgb(196,86,42)">
<rect x="1409.5" y="1023.2" width="1.2" height="24.0" rx="0.6" ry="3.2"/>
</g>
<g fill="rgb(233,198,84)">
<rect x="1412.0" y="1023.2" width="1.2" height="24.0" rx="0.6" ry="3.2"/>
</g>
<g fill="rgb(196,86,42)">
<rect x="1419.5" y="1023.2" width="1.5" height="24.0" rx="0.8" ry="3.2"/>
<rect x="1426.2" y="1023.2" width="2.8" height="24.0" rx="1.4" ry="3.2"/>
</g>
<g fill="rgb(217,156,65)">
<rect x="1429.2" y="1023.2" width="2.0" height="24.0" rx="1.0" ry="3.2"/>
</g>
<g fill="rgb(233,198,84)">
<rect x="1432.5" y="1023.2" width="2.5" height="24.0" rx="1.2" ry="3.2"/>
</g>
<g fill="rgb(217,156,65)">
<rect x="1435.5" y="1023.2" width="2.0" height="24.0" rx="1.0" ry="3.2"/>
</g>
<g fill="rgb(196,86,42)">
<rect x="1441.5" y="1023.2" width="1.5" height="24.0" rx="0.8" ry="3.2"/>
</g>
<g fill="rgb(243,224,100)">
<rect x="1656.0" y="972.1" width="1.2" height="24.0" rx="0.6" ry="3.2"/>
<rect x="1656.0" y="997.6" width="1.2" height="24.0" rx="0.6" ry="3.2"/>
</g>
<g fill="rgb(233,198,84)">
<rect x="1656.0" y="1023.2" width="1.2" height="24.0" rx="0.6" ry="3.2"/>
</g>
<g fill="rgb(243,224,100)">
<rect x="1656.0" y="1048.7" width="1.2" height="24.0" rx="0.6" ry="3.2"/>
</g>
<g fill="rgb(233,198,84)">
<rect x="1671.0" y="946.5" width="1.3" height="24.0" rx="0.6" ry="3.2"/>
<rect x="1671.0" y="972.1" width="1.3" height="24.0" rx="0.6" ry="3.2"/>
<rect x="1671.0" y="997.6" width="1.3" height="24.0" rx="0.6" ry="3.2"/>
<rect x="1671.0" y="1023.2" width="1.3" height="24.0" rx="0.6" ry="3.2"/>
</g>
<g fill="rgb(196,86,42)">
<rect x="1671.0" y="1048.7" width="1.3" height="24.0" rx="0.6" ry="3.2"/>
</g>
<g fill="rgb(243,224,100)">
<rect x="1696.0" y="972.1" width="1.2" height="24.0" rx="0.6" ry="3.2"/>
</g>
<g fill="rgb(233,198,84)">
<rect x="1696.0" y="997.6" width="1.2" height="24.0" rx="0.6" ry="3.2"/>
</g>
<g fill="rgb(243,224,100)">
<rect x="1696.0" y="1023.2" width="1.2" height="24.0" rx="0.6" ry="3.2"/>
</g>
<g fill="rgb(233,198,84)">
<rect x="1696.0" y="1048.7" width="1.2" height="24.0" rx="0.6" ry="3.2"/>
</g>
<g fill="rgb(217,156,65)">
<rect x="1701.0" y="997.6" width="1.6" height="24.0" rx="0.8" ry="3.2"/>
<rect x="1701.0" y="1023.2" width="1.6" height="24.0" rx="0.8" ry="3.2"/>
<rect x="1701.0" y="1048.7" width="1.6" height="24.0" rx="0.8" ry="3.2"/>
</g>
<g fill="rgb(243,224,100)">
<rect x="1707.5" y="946.5" width="1.2" height="24.0" rx="0.6" ry="3.2"/>
<rect x="1707.5" y="972.1" width="1.2" height="24.0" rx="0.6" ry="3.2"/>
</g>
<g fill="rgb(233,198,84)">
<rect x="1707.5" y="997.6" width="1.2" height="24.0" rx="0.6" ry="3.2"/>
</g>
<g fill="rgb(243,224,100)">
<rect x="1707.5" y="1023.2" width="1.2" height="24.0" rx="0.6" ry="3.2"/>
</g>
<g fill="rgb(233,198,84)">
<rect x="1707.5" y="1048.7" width="1.2" height="24.0" rx="0.6" ry="3.2"/>
</g>
<g fill="rgb(196,86,42)">
<rect x="1770.0" y="997.6" width="1.3" height="24.0" rx="0.6" ry="3.2"/>
<rect x="1770.0" y="1023.2" width="1.3" height="24.0" rx="0.6" ry="3.2"/>
</g>
<g fill="rgb(217,156,65)">
<rect x="1770.0" y="1048.7" width="1.3" height="24.0" rx="0.6" ry="3.2"/>
</g>
<g fill="rgb(196,86,42)">
<rect x="1773.7" y="895.5" width="1.3" height="24.0" rx="0.6" ry="3.2"/>
<rect x="1773.7" y="921.0" width="1.3" height="24.0" rx="0.6" ry="3.2"/>
<rect x="1773.7" y="946.5" width="1.3" height="24.0" rx="0.6" ry="3.2"/>
<rect x="1773.7" y="972.1" width="1.3" height="24.0" rx="0.6" ry="3.2"/>
<rect x="1773.7" y="997.6" width="1.3" height="24.0" rx="0.6" ry="3.2"/>
<rect x="1773.7" y="1023.2" width="1.3" height="24.0" rx="0.6" ry="3.2"/>
<rect x="1773.7" y="1048.7" width="1.3" height="24.0" rx="0.6" ry="3.2"/>
</g>
<g fill="rgb(233,198,84)">
<rect x="1776.3" y="946.5" width="1.2" height="24.0" rx="0.6" ry="3.2"/>
</g>
<g fill="rgb(196,86,42)">
<rect x="1776.3" y="972.1" width="1.2" height="24.0" rx="0.6" ry="3.2"/>
<rect x="1776.3" y="997.6" width="1.2" height="24.0" rx="0.6" ry="3.2"/>
</g>
<g fill="rgb(233,198,84)">
<rect x="1776.3" y="1023.2" width="1.2" height="24.0" rx="0.6" ry="3.2"/>
<rect x="1776.3" y="1048.7" width="1.2" height="24.0" rx="0.6" ry="3.2"/>
</g>
<g fill="rgb(196,86,42)">
<rect x="1815.0" y="1023.2" width="1.2" height="24.0" rx="0.6" ry="3.2"/>
<rect x="1815.0" y="1048.7" width="1.2" height="24.0" rx="0.6" ry="3.2"/>
<rect x="1821.0" y="997.6" width="1.3" height="24.0" rx="0.6" ry="3.2"/>
<rect x="1821.0" y="1023.2" width="1.3" height="24.0" rx="0.6" ry="3.2"/>
</g>
<g fill="rgb(177,41,27)">
<rect x="1821.0" y="1048.7" width="1.3" height="24.0" rx="0.6" ry="3.2"/>
<rect x="1900.5" y="1023.2" width="1.2" height="24.0" rx="0.6" ry="3.2"/>
<rect x="1900.5" y="1048.7" width="1.2" height="24.0" rx="0.6" ry="3.2"/>
<rect x="1570.0" y="1048.7" width="1.2" height="24.0" rx="0.6" ry="3.2"/>
</g>
<g fill="rgb(196,86,42)">
<rect x="1573.7" y="1048.7" width="1.2" height="24.0" rx="0.6" ry="3.2"/>
</g>
<g fill="rgb(233,198,84)">
<rect x="299.9" y="869.9" width="0.8" height="24.0" rx="0.4" ry="3.2"/>
</g>
<g fill="rgb(243,224,100)">
<rect x="323.9" y="869.9" width="5.7" height="24.0" rx="2.9" ry="3.2"/>
</g>
<g fill="rgb(233,198,84)">
<rect x="342.7" y="869.9" width="2.5" height="24.0" rx="1.2" ry="3.2"/>
</g>
<g fill="rgb(177,41,27)">
<rect x="283.8" y="895.5" width="1.3" height="24.0" rx="0.7" ry="3.2"/>
</g>
<g fill="rgb(233,198,84)">
<rect x="287.9" y="895.5" width="1.0" height="24.0" rx="0.5" ry="3.2"/>
</g>
<g fill="rgb(217,156,65)">
<rect x="299.4" y="895.5" width="1.1" height="24.0" rx="0.6" ry="3.2"/>
</g>
<g fill="rgb(177,41,27)">
<rect x="323.9" y="895.5" width="2.5" height="24.0" rx="1.2" ry="3.2"/>
</g>
<g fill="rgb(233,198,84)">
<rect x="326.4" y="895.5" width="2.8" height="24.0" rx="1.4" ry="3.2"/>
<rect x="334.6" y="895.5" width="1.6" height="24.0" rx="0.8" ry="3.2"/>
<rect x="342.7" y="895.5" width="2.9" height="24.0" rx="1.5" ry="3.2"/>
</g>
<g fill="rgb(177,41,27)">
<rect x="345.7" y="895.5" width="1.3" height="24.0" rx="0.7" ry="3.2"/>
<rect x="284.2" y="921.0" width="1.0" height="24.0" rx="0.5" ry="3.2"/>
</g>
<g fill="rgb(233,198,84)">
<rect x="287.8" y="921.0" width="1.0" height="24.0" rx="0.5" ry="3.2"/>
<rect x="295.3" y="921.0" width="1.0" height="24.0" rx="0.5" ry="3.2"/>
</g>
<g fill="rgb(217,156,65)">
<rect x="299.4" y="921.0" width="1.1" height="24.0" rx="0.6" ry="3.2"/>
</g>
<g fill="rgb(177,41,27)">
<rect x="323.1" y="921.0" width="5.7" height="24.0" rx="2.9" ry="3.2"/>
</g>
<g fill="rgb(233,198,84)">
<rect x="334.6" y="921.0" width="1.6" height="24.0" rx="0.8" ry="3.2"/>
</g>
<g fill="rgb(177,41,27)">
<rect x="344.4" y="921.0" width="2.6" height="24.0" rx="1.3" ry="3.2"/>
</g>
<g fill="rgb(233,198,84)">
<rect x="283.8" y="946.5" width="1.3" height="24.0" rx="0.7" ry="3.2"/>
</g>
<g fill="rgb(177,41,27)">
<rect x="287.8" y="946.5" width="1.0" height="24.0" rx="0.5" ry="3.2"/>
</g>
<g fill="rgb(233,198,84)">
<rect x="295.3" y="946.5" width="1.6" height="24.0" rx="0.8" ry="3.2"/>
</g>
<g fill="rgb(217,156,65)">
<rect x="299.4" y="946.5" width="1.1" height="24.0" rx="0.6" ry="3.2"/>
</g>
<g fill="rgb(196,86,42)">
<rect x="323.1" y="946.5" width="6.5" height="24.0" rx="3.2" ry="3.2"/>
</g>
<g fill="rgb(233,198,84)">
<rect x="334.6" y="946.5" width="1.6" height="24.0" rx="0.8" ry="3.2"/>
</g>
<g fill="rgb(177,41,27)">
<rect x="344.4" y="946.5" width="3.3" height="24.0" rx="1.6" ry="3.2"/>
</g>
<g fill="rgb(233,198,84)">
<rect x="283.8" y="972.1" width="1.6" height="24.0" rx="0.8" ry="3.2"/>
<rect x="287.9" y="972.1" width="4.9" height="24.0" rx="2.5" ry="3.2"/>
</g>
<g fill="rgb(196,86,42)">
<rect x="296.1" y="972.1" width="1.6" height="24.0" rx="0.8" ry="3.2"/>
</g>
<g fill="rgb(217,156,65)">
<rect x="298.9" y="972.1" width="1.6" height="24.0" rx="0.8" ry="3.2"/>
<rect x="320.6" y="972.1" width="2.5" height="24.0" rx="1.2" ry="3.2"/>
</g>
<g fill="rgb(233,198,84)">
<rect x="323.1" y="972.1" width="6.5" height="24.0" rx="3.2" ry="3.2"/>
<rect x="331.0" y="972.1" width="1.0" height="24.0" rx="0.5" ry="3.2"/>
</g>
<g fill="rgb(177,41,27)">
<rect x="335.4" y="972.1" width="1.6" height="24.0" rx="0.8" ry="3.2"/>
</g>
<g fill="rgb(233,198,84)">
<rect x="338.7" y="972.1" width="2.5" height="24.0" rx="1.2" ry="3.2"/>
</g>
<g fill="rgb(196,86,42)">
<rect x="342.7" y="972.1" width="4.9" height="24.0" rx="2.5" ry="3.2"/>
</g>
<g fill="rgb(177,41,27)">
<rect x="284.2" y="997.6" width="1.0" height="24.0" rx="0.5" ry="3.2"/>
<rect x="287.9" y="997.6" width="2.5" height="24.0" rx="1.2" ry="3.2"/>
</g>
<g fill="rgb(233,198,84)">
<rect x="291.2" y="997.6" width="3.3" height="24.0" rx="1.6" ry="3.2"/>
</g>
<g fill="rgb(196,86,42)">
<rect x="296.1" y="997.6" width="1.6" height="24.0" rx="0.8" ry="3.2"/>
</g>
<g fill="rgb(217,156,65)">
<rect x="298.9" y="997.6" width="1.6" height="24.0" rx="0.8" ry="3.2"/>
</g>
<g fill="rgb(233,198,84)">
<rect x="321.5" y="997.6" width="8.2" height="24.0" rx="3.2" ry="3.2"/>
</g>
<g fill="rgb(177,41,27)">
<rect x="330.5" y="997.6" width="1.6" height="24.0" rx="0.8" ry="3.2"/>
</g>
<g fill="rgb(233,198,84)">
<rect x="332.9" y="997.6" width="1.6" height="24.0" rx="0.8" ry="3.2"/>
</g>
<g fill="rgb(177,41,27)">
<rect x="335.4" y="997.6" width="1.6" height="24.0" rx="0.8" ry="3.2"/>
</g>
<g fill="rgb(233,198,84)">
<rect x="338.7" y="997.6" width="3.3" height="24.0" rx="1.6" ry="3.2"/>
</g>
<g fill="rgb(177,41,27)">
<rect x="342.7" y="997.6" width="1.6" height="24.0" rx="0.8" ry="3.2"/>
</g>
<g fill="rgb(233,198,84)">
<rect x="345.2" y="997.6" width="2.5" height="24.0" rx="1.2" ry="3.2"/>
</g>
<g fill="rgb(217,156,65)">
<rect x="283.0" y="1023.2" width="1.1" height="24.0" rx="0.6" ry="3.2"/>
</g>
<g fill="rgb(233,198,84)">
<rect x="285.5" y="1023.2" width="1.6" height="24.0" rx="0.8" ry="3.2"/>
</g>
<g fill="rgb(228,180,75)">
<rect x="287.9" y="1023.2" width="4.9" height="24.0" rx="2.5" ry="3.2"/>
</g>
<g fill="rgb(233,198,84)">
<rect x="293.6" y="1023.2" width="4.9" height="24.0" rx="2.5" ry="3.2"/>
</g>
<g fill="rgb(177,41,27)">
<rect x="299.0" y="1023.2" width="1.1" height="24.0" rx="0.6" ry="3.2"/>
<rect x="323.1" y="1023.2" width="5.7" height="24.0" rx="2.9" ry="3.2"/>
<rect x="329.6" y="1023.2" width="4.1" height="24.0" rx="2.0" ry="3.2"/>
</g>
<g fill="rgb(196,86,42)">
<rect x="334.6" y="1023.2" width="3.3" height="24.0" rx="1.6" ry="3.2"/>
</g>
<g fill="rgb(233,198,84)">
<rect x="338.7" y="1023.2" width="2.5" height="24.0" rx="1.2" ry="3.2"/>
</g>
<g fill="rgb(217,156,65)">
<rect x="341.9" y="1023.2" width="3.3" height="24.0" rx="1.6" ry="3.2"/>
</g>
<g fill="rgb(233,198,84)">
<rect x="345.7" y="1023.2" width="1.6" height="24.0" rx="0.8" ry="3.2"/>
<rect x="283.0" y="1048.7" width="4.1" height="24.0" rx="2.0" ry="3.2"/>
</g>
<g fill="rgb(177,41,27)">
<rect x="287.9" y="1048.7" width="3.3" height="24.0" rx="1.6" ry="3.2"/>
</g>
<g fill="rgb(196,86,42)">
<rect x="292.0" y="1048.7" width="3.3" height="24.0" rx="1.6" ry="3.2"/>
</g>
<g fill="rgb(208,124,54)">
<rect x="296.1" y="1048.7" width="4.1" height="24.0" rx="2.0" ry="3.2"/>
</g>
<g fill="rgb(196,86,42)">
<rect x="322.3" y="1048.7" width="5.7" height="24.0" rx="2.9" ry="3.2"/>
</g>
<g fill="rgb(233,198,84)">
<rect x="328.8" y="1048.7" width="4.1" height="24.0" rx="2.0" ry="3.2"/>
</g>
<g fill="rgb(217,156,65)">
<rect x="334.6" y="1048.7" width="3.3" height="24.0" rx="1.6" ry="3.2"/>
</g>
<g fill="rgb(233,198,84)">
<rect x="338.7" y="1048.7" width="4.1" height="24.0" rx="2.0" ry="3.2"/>
</g>
<g fill="rgb(177,41,27)">
<rect x="343.6" y="1048.7" width="1.6" height="24.0" rx="0.8" ry="3.2"/>
</g>
<g fill="rgb(233,198,84)">
<rect x="346.0" y="1048.7" width="1.6" height="24.0" rx="0.8" ry="3.2"/>
</g>
<g>
<text x="23.3" y="1168.8" style="fill:#8c7a68">all</text>
<text x="23.3" y="1143.2">python3</text>
<text x="293.9" y="1117.7">[unknown]</text>
<text x="352.2" y="1092.1" textLength="156.8" lengthAdjust="spacingAndGlyphs">__thread_start..</text>
<text x="537.5" y="1092.1" textLength="56.3" lengthAdjust="spacingAndGlyphs">_start</text>
<text x="1347.8" y="1092.1">c..</text>
<text x="353.9" y="1066.6">[libo..</text>
<text x="426.9" y="1066.6">start_t..</text>
<text x="538.7" y="1066.6" textLength="325.5" lengthAdjust="spacingAndGlyphs">__libc_start_main@@GLIBC_2.34</text>
<text x="353.9" y="1041.1">[..</text>
<text x="427.9" y="1041.1">[libop..</text>
<text x="538.7" y="1041.1" textLength="215.0" lengthAdjust="spacingAndGlyphs">__libc_start_call_main</text>
<text x="427.9" y="1015.5">clock..</text>
<text x="537.9" y="1015.5">Py_BytesMain</text>
<text x="428.7" y="990.0" textLength="58.8" lengthAdjust="spacingAndGlyphs">__vd..</text>
<text x="537.9" y="990.0">[python3.13]</text>
<text x="572.9" y="964.4">[python3.13]</text>
<text x="598.4" y="938.9">[python3.13]</text>
<text x="661.4" y="913.4">[python3.13]</text>
<text x="707.4" y="887.8">[python3.13]</text>
<text x="724.4" y="862.3">PyEval_EvalCode</text>
<text x="724.4" y="836.8">_PyEval_EvalFrameDefault</text>
<text x="724.4" y="811.2">PyImport_ImportModuleLevelObject</text>
<text x="724.9" y="785.7">PyObject_CallMethodObjArgs</text>
<text x="724.9" y="760.1">[python3.13]</text>
<text x="724.9" y="734.6">_PyEval_EvalFrameDefault</text>
<text x="724.9" y="709.1">[python3.13]</text>
<text x="724.9" y="683.5">[python3.13]</text>
<text x="724.9" y="658.0">PyEval_EvalCode</text>
<text x="724.9" y="632.5">_PyEval_EvalFrameDefault</text>
<text x="724.9" y="606.9">PyImport_ImportModuleLevelObject</text>
<text x="725.4" y="581.4">PyObject_CallMethodObjArgs</text>
<text x="725.9" y="555.8">[python3.13]</text>
<text x="725.9" y="530.3">_PyEval_EvalFrameDefault</text>
<text x="728.4" y="504.8">[python3.13]</text>
<text x="730.9" y="479.2">[python3.13]</text>
<text x="808.9" y="453.7">PyImport_ImportModuleLevelObject</text>
<text x="808.4" y="428.1">PyObject_CallMethodObjArgs</text>
<text x="808.4" y="402.6">[python3.13]</text>
<text x="808.4" y="377.1">_PyEval_EvalFrameDefault</text>
<text x="808.4" y="351.5">[python3.13]</text>
<text x="808.4" y="326.0">[python3.13]</text>
<text x="808.9" y="300.5">PyEval_EvalCode</text>
<text x="812.4" y="274.9">_PyEval_EvalFrameDefault</text>
<text x="811.9" y="249.4">PyImport_ImportModuleLevelObject</text>
<text x="811.9" y="223.8">PyObject_CallMethodObjArgs</text>
<text x="812.9" y="198.3">[python3.13]</text>
<text x="812.9" y="172.8">_PyEval_EvalFrameDefault</text>
<text x="815.9" y="147.2">[python3.13]</text>
<text x="815.9" y="121.7">[python3.13]</text>
<text x="815.9" y="96.2">PyEval_EvalCode</text>
<text x="815.4" y="70.6">_PyEval_EvalFrameDefault</text>
<text x="815.4" y="45.1">PyImport_ImportModuleL..</text>
<text x="816.9" y="19.5">PyObject_CallMethodObj..</text>
<text x="1125.4" y="19.5">_PyEva..</text>
<text x="1125.4" y="45.1">[pyth..</text>
<text x="1125.4" y="70.6">PyObje..</text>
<text x="1125.4" y="96.2">PyImpo..</text>
<text x="730.9" y="300.5">[p..</text>
<text x="731.9" y="326.0">_P..</text>
<text x="730.9" y="351.5">[p..</text>
<text x="730.9" y="377.1">Py..</text>
<text x="731.9" y="402.6">PyI..</text>
<text x="731.9" y="428.1">_Py..</text>
<text x="731.9" y="453.7">PyE..</text>
<text x="734.9" y="274.9">[py..</text>
<text x="735.9" y="249.4">P..</text>
<text x="735.9" y="223.8">_..</text>
<text x="735.9" y="198.3">P..</text>
<text x="735.9" y="147.2">[..</text>
<text x="735.9" y="96.2">[..</text>
<text x="80.4" y="1117.7">[python3.13]</text>
<text x="123.4" y="1092.1">[python3.13]</text>
<text x="140.4" y="1066.6">PyObjec..</text>
<text x="139.5" y="1041.1" textLength="110.5" lengthAdjust="spacingAndGlyphs">_PyEval_E..</text>
<text x="139.5" y="1015.5" textLength="106.8" lengthAdjust="spacingAndGlyphs">_PyEval_F..</text>
<text x="140.0" y="990.0" textLength="98.8" lengthAdjust="spacingAndGlyphs">__thread..</text>
<text x="140.4" y="964.4">start_thread</text>
<text x="140.4" y="938.9">[libomp.s..</text>
<text x="140.4" y="913.4">[libomp.s..</text>
<text x="140.4" y="887.8">[libomp.s..</text>
<text x="140.4" y="862.3">[libomp.s..</text>
<text x="140.4" y="836.8">[libomp..</text>
<text x="1846.9" y="606.9">[p..</text>
<text x="1846.8" y="632.5">[p..</text>
<text x="1846.8" y="658.0">_..</text>
<text x="1846.7" y="683.5">[p..</text>
<text x="1846.7" y="709.1">P..</text>
<text x="1846.6" y="734.6">P..</text>
<text x="1846.6" y="760.1">_..</text>
<text x="1846.5" y="785.7">P..</text>
<text x="1846.5" y="811.2">[p..</text>
<text x="1846.4" y="836.8">[p..</text>
<text x="1846.4" y="887.8">[p..</text>
<text x="1846.4" y="964.4">[p..</text>
<text x="1846.4" y="990.0">[p..</text>
<text x="1846.4" y="1015.5">[p..</text>
<text x="1846.4" y="1117.7">to..</text>
<text x="19.5" y="1202" textLength="1231" lengthAdjust="spacing">Function: void at::native::cpublas::(anonymous namespace)::gemm_core_&lt;float, float, float&gt; (232,323,230 samples, 0.23%)</text>
<text x="1743.5" y="1202" textLength="146.5" lengthAdjust="spacing">Matched: 1.4%</text>
</g>
<rect x="12" y="2.4" width="1908" height="1.3" fill="#fbfbea" opacity="0.55"/>
<rect x="1918.6" y="0" width="1.4" height="1222" fill="#ecedd6"/>
<path fill-rule="evenodd" fill="#3b393b" d="M0 0 H1920 V1222 H0 Z M2.6 1208 V17 Q2.6 2.4 17.5 2.4 H1920 V1222 H6.5 Q2.8 1218 2.6 1208 Z"/>
</svg></body></html>
